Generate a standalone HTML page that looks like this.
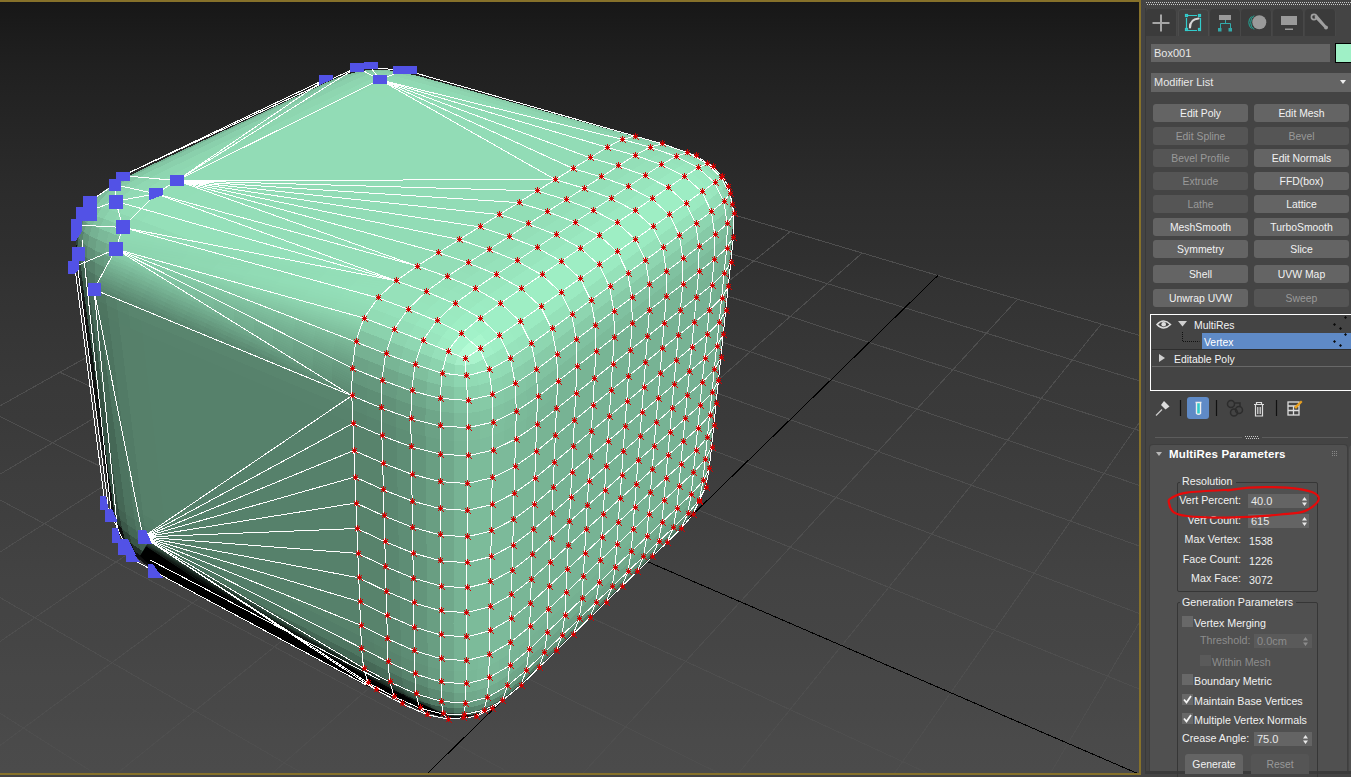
<!DOCTYPE html>
<html><head><meta charset="utf-8"><title>MultiRes</title>
<style>
html,body{margin:0;padding:0;background:#444;overflow:hidden}
body{width:1351px;height:777px;position:relative;font-family:"Liberation Sans",sans-serif;font-size:11px;color:#e6e6e6}
#vp{position:absolute;left:0;top:0;width:1141px;height:775px;background:#86712a;overflow:hidden}
#pn{position:absolute;left:1141px;top:0;width:210px;height:777px;background:#444;overflow:hidden}
#pn *{position:absolute;box-sizing:border-box;white-space:nowrap}
.tab{top:9px;width:31px;height:27px;background:#3b3b3b;border-radius:4px 4px 0 0;border-right:1px solid #484848}
.tab.on{background:#414141;border:1px solid #4c4c4c;border-bottom:0}
.fld{background:#646464;color:#e8e8e8;line-height:18px;padding-left:3px}
.btn{width:95px;height:18px;background:#646464;border-radius:3px;text-align:center;line-height:20.5px;color:#f2f2f2;font-size:10.4px}
.btn.d{background:#555;color:#999}
.lb{color:#f0f0f0;line-height:13px;height:13px;font-size:10.7px}
.lb.r{text-align:right;width:70px;left:30px}
.lb.d{color:#8c8c8c}
.cb{width:11px;height:11px;background:#686868}
.cb.d{background:#5a5a5a}
.sp{background:#646464;height:14px;line-height:14px;color:#e8e8e8;padding-left:3px}
.grp{border:1px solid #363636;border-radius:2px}
.ar{width:0;height:0;border-left:3px solid transparent;border-right:3px solid transparent}

</style></head><body>
<div id="vp"><svg width="1139" height="771" viewBox="0 2 1139 771" style="position:absolute;left:0;top:2px">
<defs><linearGradient id="bg" x1="0" y1="0" x2="0" y2="1"><stop offset="0.000" stop-color="#171717"/><stop offset="0.042" stop-color="#1c1c1c"/><stop offset="0.083" stop-color="#202020"/><stop offset="0.125" stop-color="#232323"/><stop offset="0.167" stop-color="#262626"/><stop offset="0.208" stop-color="#292929"/><stop offset="0.250" stop-color="#2c2c2c"/><stop offset="0.292" stop-color="#2e2e2e"/><stop offset="0.333" stop-color="#303030"/><stop offset="0.375" stop-color="#333333"/><stop offset="0.417" stop-color="#353535"/><stop offset="0.458" stop-color="#373737"/><stop offset="0.500" stop-color="#393939"/><stop offset="0.542" stop-color="#3a3a3a"/><stop offset="0.583" stop-color="#3c3c3c"/><stop offset="0.625" stop-color="#3e3e3e"/><stop offset="0.667" stop-color="#3f3f3f"/><stop offset="0.708" stop-color="#414141"/><stop offset="0.750" stop-color="#434343"/><stop offset="0.792" stop-color="#444444"/><stop offset="0.833" stop-color="#454545"/><stop offset="0.875" stop-color="#474747"/><stop offset="0.917" stop-color="#484848"/><stop offset="0.958" stop-color="#4a4a4a"/><stop offset="1.000" stop-color="#4b4b4b"/></linearGradient><g id="t" fill="#d40000" shape-rendering="crispEdges"><rect x="-1" y="-1" width="3" height="3"/><rect x="-2" y="0" width="5" height="1"/><rect x="0" y="-3" width="1" height="6"/><rect x="-2" y="-2" width="1" height="1"/><rect x="2" y="-2" width="1" height="1"/><rect x="-2" y="2" width="1" height="1"/><rect x="2" y="2" width="1" height="1"/><rect x="3" y="3" width="1" height="1"/></g></defs>
<rect x="0" y="2" width="1139" height="771" fill="url(#bg)"/>
<path d="M476.9 138.4L-459.9 663.8M534 155.4L-398.3 712M593.8 173.2L-332 763.9M656.2 191.8L-260.4 820M721.7 211.2L-182.8 880.8M790.3 231.6L-98.4 946.9M862.2 253L-6.3 1019M1017.5 299.2L205.7 1185M1101.3 324.1L328.5 1281.2M1189.8 350.4L465 1388.1M1283.2 378.2L617.7 1507.6M1382.1 407.7L789.6 1642.2M1487 438.8L984.6 1794.9M1598.3 471.9L1207.7 1969.6M476.9 138.4L1598.3 471.9M435.5 161.7L1585.8 519.8M391.5 186.3L1572.2 572M344.8 212.5L1557.3 629M295.2 240.4L1541 691.5M242.2 270.1L1523 760.4M185.6 301.8L1503.1 836.8M59.9 372.3L1456.1 1017.3M-10.2 411.6L1428 1124.9M-85.8 454L1396 1247.4M-167.7 500L1359.4 1387.9M-256.7 549.9L1316.9 1550.9M-353.7 604.3L1267 1742.1M-459.9 663.8L1207.7 1969.6" stroke="#4e4e4e" stroke-width="1" fill="none" shape-rendering="crispEdges"/>
<path d="M937.9 275.5L94.6 1098M125 335.8L1480.9 921.9" stroke="#000" stroke-width="1" fill="none" shape-rendering="crispEdges"/>
<g shape-rendering="crispEdges">
<path fill="#6da488" d="M85.7 213.1L87.3 213.4L91.2 206.5L87.5 208.5ZM526 669.2L527.6 659.7L518.2 667.8L516.6 677.3Z"/>
<path fill="#7ab797" d="M90.9 214.4L95.8 206.4L91.2 206.5L87.3 213.4ZM137.2 173.7L148.3 168.3L141 169.8L130 175.3Z"/>
<path fill="#7dbc9b" d="M101.6 199L96 199.8L91.2 206.5L95.8 206.4ZM467.4 426.9L467.4 440.9L480.3 439L480.4 425ZM515.9 410.8L504.6 416.7L504.4 430.7L515.7 424.7ZM492.4 449.5L504.1 444.6L504.4 430.7L492.7 435.5ZM732.3 214.1L730.9 203.8L728.7 208.1L730.1 219Z"/>
<path fill="#6ea588" d="M91.5 202.5L87.5 208.5L91.2 206.5L96 199.8ZM732.1 237.4L729.8 242.7L728.7 255.1L731.1 249.7Z"/>
<path fill="#89ceaa" d="M104 218.8L109.7 209.9L101.9 207.6L96.5 216.2ZM358.2 78.3L366.8 74.8L357.3 74L348.7 77.4ZM410 74.3L403.4 74.7L414.7 77.7L421.3 77.3ZM514.6 383.5L525.4 376.8L523.4 363.8L512.7 370.5Z"/>
<path fill="#8cd3ae" d="M116.8 201.7L108.5 199.7L101.9 207.6L109.7 209.9ZM134.4 187.4L144.6 181.1L135 179.6L125.1 185.8ZM661.6 144.8L655.9 145.6L668.9 149.9L674.5 149ZM441.9 372.9L444.1 361.6L431.7 357.4L428.8 369.2ZM728.4 194.3L724.7 185.8L722.4 188.8L726.2 198.1Z"/>
<path fill="#86caa7" d="M101.6 199L95.8 206.4L101.9 207.6L108.5 199.7ZM728.4 194.3L728.7 190.8L725.3 183.4L724.7 185.8ZM698.6 246.9L706.5 240.9L705.3 229.1L697.3 235ZM713.9 235.1L712.7 223.4L705.3 229.1L706.5 240.9Z"/>
<path fill="#82c4a2" d="M90.9 214.4L96.5 216.2L101.9 207.6L95.8 206.4ZM410 74.3L421.3 77.3L427.1 78.4L415.8 75.5Z"/>
<path fill="#8dd4af" d="M134.4 187.4L125.1 185.8L116.2 192.5L125.1 194.3ZM104 218.8L113.3 222.2L119.3 213L109.7 209.9ZM358.2 78.3L368.6 80.1L377.1 76.6L366.8 74.8ZM396 76.4L407.4 79.4L414.7 77.7L403.4 74.7ZM394.4 329.9L389.6 341.5L404.2 347.1L409 335.6Z"/>
<path fill="#87cba7" d="M117 185.6L108.7 192.1L116.2 192.5L125.1 185.8ZM556.2 354.5L554.2 341.6L544.1 349.2L546.2 362.1ZM594.9 325.3L604.2 318.3L602.5 305.7L593.1 312.7ZM613.4 311.3L611.7 298.8L602.5 305.7L604.2 318.3ZM631.4 297.7L629.8 285.3L620.8 292L622.5 304.5ZM613.4 311.3L622.5 304.5L620.8 292L611.7 298.8ZM556.2 354.5L566.1 347.1L564.2 334.2L554.2 341.6ZM575.8 339.7L574 326.9L564.2 334.2L566.1 347.1ZM594.9 325.3L593.1 312.7L583.6 319.7L585.4 332.5ZM575.8 339.7L585.4 332.5L583.6 319.7L574 326.9ZM665.9 271.6L674.3 265.3L672.9 253.2L664.5 259.5ZM682.5 259.1L681.1 247.1L672.9 253.2L674.3 265.3ZM698.6 246.9L697.3 235L689.3 241L690.6 253ZM682.5 259.1L690.6 253L689.3 241L681.1 247.1ZM631.4 297.7L640.2 291L638.7 278.7L629.8 285.3ZM648.9 284.5L647.4 272.2L638.7 278.7L640.2 291ZM665.9 271.6L664.5 259.5L656 265.8L657.5 278ZM648.9 284.5L657.5 278L656 265.8L647.4 272.2Z"/>
<path fill="#87cba8" d="M101.6 199L108.5 199.7L116.2 192.5L108.7 192.1ZM535.9 369.6L546.2 362.1L544.1 349.2L533.9 356.6ZM686.3 153.7L690.7 154.5L679.1 149.8L674.5 149Z"/>
<path fill="#8dd5b0" d="M116.8 201.7L125.1 194.3L116.2 192.5L108.5 199.7ZM466.1 375.6L454.3 375.2L454 387L466.7 387.2ZM710.2 212.3L702.7 217.9L705.3 229.1L712.7 223.4Z"/>
<path fill="#6ba185" d="M104.8 190.2L97.2 196.4L102.4 193.3L110.2 187ZM465.1 701.3L465.4 692.6L453.5 692.7L453.5 701.4ZM710.6 447.1L708.3 453.2L707.2 464L709.5 457.8ZM702 480.8L700.4 490.6L704.2 484.2L705.9 474.4ZM687 513.1L689.1 504L682.3 510.9L680.1 520ZM439.8 425.4L425.4 422.4L425.5 436.4L439.8 439.4Z"/>
<path fill="#6da487" d="M91.5 202.5L96 199.8L102.4 193.3L97.2 196.4ZM382.2 380.2L383.7 366.8L368.8 361L367.4 374.4Z"/>
<path fill="#7dbc9c" d="M101.6 199L108.7 192.1L102.4 193.3L96 199.8ZM492.4 449.5L492.7 435.5L480.3 439L480.1 453ZM537.2 396.8L536.9 383.1L526.4 390.3L526.7 404.1Z"/>
<path fill="#7cbb9b" d="M117 185.6L110.2 187L102.4 193.3L108.7 192.1ZM489 653.8L477.7 657.6L477.5 669.3L488.8 665.5ZM537.2 396.8L547.4 389.2L547.2 375.5L536.9 383.1Z"/>
<path fill="#91dbb5" d="M148 235.4L154.2 225.9L141.9 221.3L135.7 230.7ZM177.4 181.3L166 177.8L155.1 183.8L166.5 187.3ZM606.9 147.6L620.7 151.6L628.5 147.2L614.7 143.3ZM675.1 157.1L681.1 154.7L668.9 149.9L662.6 152.3Z"/>
<path fill="#95e0b9" d="M161.7 217.3L149.4 212.7L141.9 221.3L154.2 225.9ZM180.2 202.3L167.9 197.9L156 193.7L146.3 200.7L137.6 208.4L149.4 212.7L161.7 217.3L170.5 209.5ZM186.7 226.6L174.2 222L166.6 230.6L179.2 235.4ZM161.7 217.3L154.2 225.9L166.6 230.6L174.2 222ZM212.3 236.2L199.5 231.4L191.9 240.2L204.7 245.1ZM186.7 226.6L179.2 235.4L191.9 240.2L199.5 231.4ZM265.2 255.9L251.8 250.9L244.2 260L257.6 265.1ZM238.5 246L230.9 254.9L244.2 260L251.8 250.9ZM238.5 246L225.3 241L217.7 250L230.9 254.9ZM212.3 236.2L204.7 245.1L217.7 250L225.3 241ZM292.6 266.1L278.8 261L271.2 270.2L285 275.4ZM265.2 255.9L257.6 265.1L271.2 270.2L278.8 261ZM320.5 276.6L306.5 271.3L298.9 280.7L312.9 286ZM292.6 266.1L285 275.4L298.9 280.7L306.5 271.3ZM378.5 298.2L363.8 292.7L356.2 302.3L370.9 307.9ZM349.2 287.3L341.6 296.8L356.2 302.3L363.8 292.7ZM349.2 287.3L334.8 281.9L327.2 291.4L341.6 296.8ZM320.5 276.6L312.9 286L327.2 291.4L334.8 281.9ZM378.5 298.2L370.9 307.9L385.9 313.6L393.4 303.8ZM446.7 276.9L461.1 282.7L471.7 275.6L457.3 269.8ZM660.7 165.2L668.2 160.7L655.5 155.8L647.9 160.2ZM705.9 164.8L701.8 166.1L710.2 172.8L713.5 171.2ZM694.8 223.7L702.7 217.9L698.7 207.5L690.7 213.3ZM710.2 212.3L706.3 201.9L698.7 207.5L702.7 217.9Z"/>
<path fill="#94dfb8" d="M137.6 208.4L130.1 216.9L141.9 221.3L149.4 212.7ZM396.6 281L411.5 286.5L426.3 292L436.3 284.2L446.7 276.9L431.9 271.4L417.1 266.1L406.7 273.4ZM467.8 263L457.3 269.8L471.7 275.6L482.2 268.7ZM488.5 249.7L478.3 256.3L492.5 261.9L502.8 255.2ZM467.8 263L482.2 268.7L492.5 261.9L478.3 256.3ZM508.6 236.7L498.6 243.1L512.8 248.6L522.8 242.1ZM488.5 249.7L502.8 255.2L512.8 248.6L498.6 243.1ZM528.1 224.1L518.5 230.4L532.5 235.7L542.2 229.3ZM508.6 236.7L522.8 242.1L532.5 235.7L518.5 230.4ZM547.1 211.9L537.7 218L551.7 223.1L561.1 217ZM528.1 224.1L542.2 229.3L551.7 223.1L537.7 218ZM565.6 200L556.4 205.9L570.3 210.9L579.4 204.9ZM547.1 211.9L561.1 217L570.3 210.9L556.4 205.9ZM583.6 188.4L574.6 194.1L588.4 199L597.3 193.2ZM565.6 200L579.4 204.9L588.4 199L574.6 194.1ZM601 177.1L592.4 182.7L606.1 187.5L614.7 181.8ZM583.6 188.4L597.3 193.2L606.1 187.5L592.4 182.7ZM618.1 166.1L609.6 171.6L623.2 176.2L631.6 170.7ZM601 177.1L614.7 181.8L623.2 176.2L609.6 171.6ZM634.5 155.7L626.4 160.8L639.9 165.3L647.9 160.2ZM618.1 166.1L631.6 170.7L639.9 165.3L626.4 160.8ZM675.1 157.1L686.5 162.6L692.1 160.1L681.1 154.7ZM710.2 212.3L716.9 207L712.9 196.9L706.3 201.9Z"/>
<path fill="#91dab4" d="M124 226.2L135.7 230.7L141.9 221.3L130.1 216.9ZM134.4 187.4L125.1 194.3L135.2 197.1L144.8 190.2ZM116.8 201.7L126.6 204.7L135.2 197.1L125.1 194.3ZM177.4 181.3L188.6 175.6L177.2 172.2L166 177.8ZM466.1 375.6L466.7 387.2L478.8 385.3L477.3 373.6ZM509.6 358.2L498.9 364.4L501.7 376.6L512.7 370.5ZM649.4 147.9L635.7 143.8L628.5 147.2L642.2 151.4Z"/>
<path fill="#93deb7" d="M137.6 208.4L146.3 200.7L135.2 197.1L126.6 204.7ZM180.2 202.3L190.7 195.8L201.6 189.6L189.3 185.3L177.4 181.3L166.5 187.3L156 193.7L167.9 197.9ZM438.5 252.6L427.8 259.3L417.1 266.1L431.9 271.4L446.7 276.9L457.3 269.8L467.8 263L453.2 257.7ZM634.5 155.7L647.9 160.2L655.5 155.8L642.2 151.4Z"/>
<path fill="#93ddb7" d="M156 193.7L144.8 190.2L135.2 197.1L146.3 200.7Z"/>
<path fill="#8fd8b2" d="M124 226.2L130.1 216.9L119.3 213L113.3 222.2ZM396 76.4L388 79.1L399.4 82.2L407.4 79.4ZM379.5 82.6L388 79.1L377.1 76.6L368.6 80.1ZM719.7 178.2L721 176.9L715.7 170.8L713.5 171.2Z"/>
<path fill="#93ddb6" d="M137.6 208.4L126.6 204.7L119.3 213L130.1 216.9ZM705.9 164.8L696.8 159L692.1 160.1L701.8 166.1Z"/>
<path fill="#90d9b3" d="M116.8 201.7L109.7 209.9L119.3 213L126.6 204.7ZM199.8 170.1L188.5 166.8L177.2 172.2L188.6 175.6ZM221.9 159.3L232.7 154.1L221.4 150.9L210.6 156.1ZM243.4 148.9L232.1 145.7L221.4 150.9L232.7 154.1ZM199.8 170.1L210.9 164.7L199.6 161.4L188.5 166.8ZM221.9 159.3L210.6 156.1L199.6 161.4L210.9 164.7ZM264.4 138.6L274.6 133.6L263.4 130.6L253.1 135.6ZM284.8 128.7L273.6 125.7L263.4 130.6L274.6 133.6ZM243.4 148.9L253.9 143.7L242.7 140.6L232.1 145.7ZM264.4 138.6L253.1 135.6L242.7 140.6L253.9 143.7ZM304.7 119L314.5 114.2L303.3 111.4L293.5 116.1ZM324.1 109.5L313 106.7L303.3 111.4L314.5 114.2ZM284.8 128.7L294.8 123.8L283.6 120.9L273.6 125.7ZM304.7 119L293.5 116.1L283.6 120.9L294.8 123.8ZM343.1 100.2L352.4 95.7L341.4 93L332 97.5ZM361.6 91.2L350.6 88.6L341.4 93L352.4 95.7ZM324.1 109.5L333.7 104.8L322.6 102.1L313 106.7ZM343.1 100.2L332 97.5L322.6 102.1L333.7 104.8ZM419.1 82.7L407.4 79.4L399.4 82.2L411.2 85.5ZM361.6 91.2L370.7 86.8L359.7 84.2L350.6 88.6ZM379.5 82.6L368.6 80.1L359.7 84.2L370.7 86.8ZM622 139.9L614.7 143.3L628.5 147.2L635.7 143.8ZM686.3 153.7L681.1 154.7L692.1 160.1L696.8 159ZM441.9 372.9L454.3 375.2L455.1 364.7L444.1 361.6ZM722.3 202.2L726.2 198.1L722.4 188.8L718.4 192.4Z"/>
<path fill="#92dcb6" d="M223.9 178.2L211.7 174L199.8 170.1L188.6 175.6L177.4 181.3L189.3 185.3L201.6 189.6L212.7 183.8ZM156 193.7L166.5 187.3L155.1 183.8L144.8 190.2ZM223.9 178.2L235 172.7L245.9 167.3L233.7 163.1L221.9 159.3L210.9 164.7L199.8 170.1L211.7 174ZM267.3 156.6L255.2 152.6L243.4 148.9L232.7 154.1L221.9 159.3L233.7 163.1L245.9 167.3L256.7 161.9ZM308.5 136L296.5 132.2L284.8 128.7L274.6 133.6L264.4 138.6L276.1 142.2L288.2 146.1L298.4 141ZM267.3 156.6L277.8 151.3L288.2 146.1L276.1 142.2L264.4 138.6L253.9 143.7L243.4 148.9L255.2 152.6ZM308.5 136L318.5 131L328.3 126.1L316.4 122.4L304.7 119L294.8 123.8L284.8 128.7L296.5 132.2ZM347.6 116.4L335.7 112.8L324.1 109.5L314.5 114.2L304.7 119L316.4 122.4L328.3 126.1L338 121.2ZM384.9 97.8L373.1 94.4L361.6 91.2L352.4 95.7L343.1 100.2L354.6 103.5L366.5 107L375.8 102.4ZM347.6 116.4L357.1 111.7L366.5 107L354.6 103.5L343.1 100.2L333.7 104.8L324.1 109.5L335.7 112.8ZM488.2 369.7L477.3 373.6L478.8 385.3L490.5 381.6ZM223.9 178.2L236.3 182.5L248.8 186.8L259.8 181.2L270.6 175.6L258.2 171.4L245.9 167.3L235 172.7ZM274.1 195.6L285.1 189.9L295.9 184.2L283.2 179.9L270.6 175.6L259.8 181.2L248.8 186.8L261.4 191.2ZM317.1 173L304.4 168.9L291.9 164.7L281.4 170.1L270.6 175.6L283.2 179.9L295.9 184.2L306.6 178.6ZM267.3 156.6L256.7 161.9L245.9 167.3L258.2 171.4L270.6 175.6L281.4 170.1L291.9 164.7L279.6 160.6ZM326.5 213.8L337.3 207.8L348 201.8L334.8 197.4L321.7 192.9L310.9 198.7L300 204.6L313.2 209.2ZM368.9 190.2L355.8 185.9L342.7 181.5L332.3 187.2L321.7 192.9L334.8 197.4L348 201.8L358.6 196ZM317.1 173L306.6 178.6L295.9 184.2L308.7 188.5L321.7 192.9L332.3 187.2L342.7 181.5L329.8 177.3ZM274.1 195.6L287 200.1L300 204.6L310.9 198.7L321.7 192.9L308.7 188.5L295.9 184.2L285.1 189.9ZM409.2 167.9L396.1 163.8L383.2 159.7L373.3 165L363.2 170.5L376.2 174.7L389.3 178.9L399.3 173.4ZM357.8 151.6L347.8 156.9L337.7 162.2L350.4 166.3L363.2 170.5L373.3 165L383.2 159.7L370.4 155.6ZM317.1 173L329.8 177.3L342.7 181.5L353.1 176L363.2 170.5L350.4 166.3L337.7 162.2L327.5 167.6ZM368.9 190.2L379.2 184.5L389.3 178.9L376.2 174.7L363.2 170.5L353.1 176L342.7 181.5L355.8 185.9ZM308.5 136L298.4 141L288.2 146.1L300.4 150.1L312.7 154.1L322.9 148.9L332.9 143.7L320.6 139.8ZM267.3 156.6L279.6 160.6L291.9 164.7L302.4 159.4L312.7 154.1L300.4 150.1L288.2 146.1L277.8 151.3ZM317.1 173L327.5 167.6L337.7 162.2L325.1 158.1L312.7 154.1L302.4 159.4L291.9 164.7L304.4 168.9ZM357.8 151.6L345.3 147.7L332.9 143.7L322.9 148.9L312.7 154.1L325.1 158.1L337.7 162.2L347.8 156.9ZM308.5 136L320.6 139.8L332.9 143.7L342.8 138.6L352.6 133.6L340.4 129.8L328.3 126.1L318.5 131ZM357.8 151.6L367.7 146.4L377.4 141.3L364.9 137.5L352.6 133.6L342.8 138.6L332.9 143.7L345.3 147.7ZM396.5 131.3L384.1 127.5L371.8 123.8L362.3 128.7L352.6 133.6L364.9 137.5L377.4 141.3L387 136.3ZM347.6 116.4L338 121.2L328.3 126.1L340.4 129.8L352.6 133.6L362.3 128.7L371.8 123.8L359.7 120.1ZM409.2 167.9L418.9 162.5L428.5 157.2L415.5 153.2L402.7 149.2L393 154.4L383.2 159.7L396.1 163.8ZM447.3 146.7L434.4 142.8L421.6 138.9L412.2 144L402.7 149.2L415.5 153.2L428.5 157.2L437.9 151.9ZM396.5 131.3L387 136.3L377.4 141.3L390 145.2L402.7 149.2L412.2 144L421.6 138.9L409 135.1ZM357.8 151.6L370.4 155.6L383.2 159.7L393 154.4L402.7 149.2L390 145.2L377.4 141.3L367.7 146.4ZM483.5 126.6L470.8 122.9L458.1 119.2L449.2 124L440.1 128.9L452.8 132.7L465.6 136.5L474.6 131.6ZM433.3 111.9L424.2 116.7L415.1 121.5L427.6 125.2L440.1 128.9L449.2 124L458.1 119.2L445.6 115.6ZM396.5 131.3L409 135.1L421.6 138.9L430.9 133.9L440.1 128.9L427.6 125.2L415.1 121.5L405.9 126.4ZM447.3 146.7L456.5 141.6L465.6 136.5L452.8 132.7L440.1 128.9L430.9 133.9L421.6 138.9L434.4 142.8ZM384.9 97.8L375.8 102.4L366.5 107L378.5 110.6L390.6 114.2L399.8 109.5L408.9 104.8L396.8 101.3ZM347.6 116.4L359.7 120.1L371.8 123.8L381.3 119L390.6 114.2L378.5 110.6L366.5 107L357.1 111.7ZM396.5 131.3L405.9 126.4L415.1 121.5L402.8 117.8L390.6 114.2L381.3 119L371.8 123.8L384.1 127.5ZM433.3 111.9L421 108.4L408.9 104.8L399.8 109.5L390.6 114.2L402.8 117.8L415.1 121.5L424.2 116.7ZM384.9 97.8L396.8 101.3L408.9 104.8L417.8 100.2L426.6 95.9L414.6 92.5L402.7 89.1L393.9 93.3ZM433.3 111.9L442.2 107.3L450.8 102.9L438.6 99.4L426.6 95.9L417.8 100.2L408.9 104.8L421 108.4ZM483.5 126.6L492.3 121.8L500.8 117.2L488.2 113.6L475.6 110L467 114.4L458.1 119.2L470.8 122.9ZM433.3 111.9L445.6 115.6L458.1 119.2L467 114.4L475.6 110L463.2 106.4L450.8 102.9L442.2 107.3ZM326.5 213.8L340 218.5L353.6 223.2L364.3 217L374.9 211L361.4 206.4L348 201.8L337.3 207.8ZM381.2 232.8L391.9 226.5L402.4 220.3L388.6 215.6L374.9 211L364.3 217L353.6 223.2L367.3 227.9ZM423.1 208.2L409.3 203.6L395.7 199.1L385.4 205L374.9 211L388.6 215.6L402.4 220.3L412.8 214.2ZM368.9 190.2L358.6 196L348 201.8L361.4 206.4L374.9 211L385.4 205L395.7 199.1L382.3 194.6ZM438.5 252.6L449 246L459.3 239.6L444.9 234.7L430.6 229.8L420.1 236.1L409.5 242.6L423.9 247.5ZM479.6 226.9L465.3 222.1L451 217.4L440.9 223.6L430.6 229.8L444.9 234.7L459.3 239.6L469.6 233.2ZM423.1 208.2L412.8 214.2L402.4 220.3L416.4 225L430.6 229.8L440.9 223.6L451 217.4L437 212.8ZM381.2 232.8L395.3 237.6L409.5 242.6L420.1 236.1L430.6 229.8L416.4 225L402.4 220.3L391.9 226.5ZM518.5 202.6L504.3 198.1L490.3 193.6L480.7 199.5L470.9 205.4L485.1 209.9L499.3 214.6L509 208.5ZM462.7 184.9L453 190.6L443.2 196.4L457 200.8L470.9 205.4L480.7 199.5L490.3 193.6L476.4 189.2ZM423.1 208.2L437 212.8L451 217.4L461.1 211.3L470.9 205.4L457 200.8L443.2 196.4L433.2 202.2ZM479.6 226.9L489.6 220.7L499.3 214.6L485.1 209.9L470.9 205.4L461.1 211.3L451 217.4L465.3 222.1ZM409.2 167.9L399.3 173.4L389.3 178.9L402.6 183.2L416 187.5L425.9 181.9L435.6 176.3L422.3 172.1ZM368.9 190.2L382.3 194.6L395.7 199.1L405.9 193.3L416 187.5L402.6 183.2L389.3 178.9L379.2 184.5ZM423.1 208.2L433.2 202.2L443.2 196.4L429.5 191.9L416 187.5L405.9 193.3L395.7 199.1L409.3 203.6ZM462.7 184.9L449.1 180.6L435.6 176.3L425.9 181.9L416 187.5L429.5 191.9L443.2 196.4L453 190.6ZM409.2 167.9L422.3 172.1L435.6 176.3L445.3 170.8L454.8 165.4L441.6 161.2L428.5 157.2L418.9 162.5ZM462.7 184.9L472.3 179.3L481.7 173.7L468.2 169.5L454.8 165.4L445.3 170.8L435.6 176.3L449.1 180.6ZM500.2 162.8L486.8 158.7L473.5 154.7L464.2 160L454.8 165.4L468.2 169.5L481.7 173.7L491 168.2ZM447.3 146.7L437.9 151.9L428.5 157.2L441.6 161.2L454.8 165.4L464.2 160L473.5 154.7L460.3 150.7ZM518.5 202.6L527.9 196.7L537.2 190.9L523.1 186.6L509.1 182.2L499.8 187.9L490.3 193.6L504.3 198.1ZM555.3 179.6L541.3 175.3L527.5 171.1L518.4 176.6L509.1 182.2L523.1 186.6L537.2 190.9L546.3 185.2ZM500.2 162.8L491 168.2L481.7 173.7L495.3 177.9L509.1 182.2L518.4 176.6L527.5 171.1L513.8 166.9ZM462.7 184.9L476.4 189.2L490.3 193.6L499.8 187.9L509.1 182.2L495.3 177.9L481.7 173.7L472.3 179.3ZM590.2 157.8L576.4 153.8L562.8 149.8L554.1 155L545.4 160.3L559.1 164.4L573 168.5L581.7 163.1ZM535.8 141.9L527.1 147L518.2 152.2L531.7 156.2L545.4 160.3L554.1 155L562.8 149.8L549.2 145.8ZM500.2 162.8L513.8 166.9L527.5 171.1L536.5 165.7L545.4 160.3L531.7 156.2L518.2 152.2L509.3 157.5ZM555.3 179.6L564.2 174L573 168.5L559.1 164.4L545.4 160.3L536.5 165.7L527.5 171.1L541.3 175.3ZM483.5 126.6L474.6 131.6L465.6 136.5L478.6 140.4L491.7 144.3L500.6 139.2L509.4 134.2L496.4 130.4ZM447.3 146.7L460.3 150.7L473.5 154.7L482.6 149.5L491.7 144.3L478.6 140.4L465.6 136.5L456.5 141.6ZM500.2 162.8L509.3 157.5L518.2 152.2L504.9 148.2L491.7 144.3L482.6 149.5L473.5 154.7L486.8 158.7ZM535.8 141.9L522.5 138L509.4 134.2L500.6 139.2L491.7 144.3L504.9 148.2L518.2 152.2L527.1 147ZM483.5 126.6L496.4 130.4L509.4 134.2L518.1 129.2L526.6 124.6L513.6 120.9L500.8 117.2L492.3 121.8ZM535.8 141.9L544.4 136.8L552.8 132.1L539.6 128.3L526.6 124.6L518.1 129.2L509.4 134.2L522.5 138ZM590.2 157.8L598.7 152.5L606.9 147.6L593.2 143.7L579.6 139.8L571.3 144.6L562.8 149.8L576.4 153.8ZM535.8 141.9L549.2 145.8L562.8 149.8L571.3 144.6L579.6 139.8L566.1 135.9L552.8 132.1L544.4 136.8ZM634.5 155.7L642.2 151.4L628.5 147.2L620.7 151.6ZM719.7 178.2L717 180.4L722.4 188.8L724.7 185.8Z"/>
<path fill="#8ed6b1" d="M177.9 164.3L166.6 169.7L177.2 172.2L188.5 166.8ZM155.4 175.3L166 177.8L177.2 172.2L166.6 169.7ZM530.5 344.2L533.9 356.6L544.1 349.2L540.8 336.8Z"/>
<path fill="#90d8b3" d="M134.4 187.4L144.8 190.2L155.1 183.8L144.6 181.1ZM509.6 358.2L512.7 370.5L523.4 363.8L520.1 351.4ZM649.4 147.9L662.6 152.3L668.9 149.9L655.9 145.6Z"/>
<path fill="#8fd7b2" d="M155.4 175.3L144.6 181.1L155.1 183.8L166 177.8ZM705.9 164.8L713.5 171.2L715.7 170.8L709.1 165.1ZM422.9 341.1L409 335.6L404.2 347.1L418.3 352.5Z"/>
<path fill="#79b697" d="M159.6 162.9L152.3 164.5L141 169.8L148.3 168.3ZM510.1 642L509.8 653.6L519.7 646.2L520 634.6ZM509.3 664.8L509.8 653.6L499.5 660.1L499.1 671.3ZM159.6 162.9L170.7 157.7L163.4 159.3L152.3 164.5ZM181.7 152.5L174.4 154.1L163.4 159.3L170.7 157.7ZM181.7 152.5L192.6 147.3L185.3 149L174.4 154.1ZM203.3 142.3L196 143.9L185.3 149L192.6 147.3ZM224.4 132.3L234.7 127.5L227.3 129.2L217 134ZM244.9 122.6L237.5 124.4L227.3 129.2L234.7 127.5ZM203.3 142.3L213.9 137.3L206.6 139L196 143.9ZM224.4 132.3L217 134L206.6 139L213.9 137.3ZM244.9 122.6L255 117.9L247.6 119.6L237.5 124.4ZM264.9 113.2L257.6 114.9L247.6 119.6L255 117.9ZM264.9 113.2L274.7 108.5L267.4 110.3L257.6 114.9ZM284.5 104L277.1 105.7L267.4 110.3L274.7 108.5ZM303.5 94.9L312.9 90.5L305.6 92.3L296.2 96.7ZM322.2 86.1L314.8 87.9L305.6 92.3L312.9 90.5ZM284.5 104L294 99.4L286.7 101.2L277.1 105.7ZM303.5 94.9L296.2 96.7L286.7 101.2L294 99.4Z"/>
<path fill="#6a9f83" d="M104.8 190.2L110.2 187L119.6 181L113.9 184.4ZM411.7 390.7L397 385.7L396.3 399.4L411 404.4Z"/>
<path fill="#7bba99" d="M117 185.6L126.7 179.5L119.6 181L110.2 187ZM515.4 438.6L515.7 424.7L504.4 430.7L504.1 444.6ZM515.9 410.8L515.7 424.7L526.6 418L526.7 404.1ZM713.7 259.8L714.2 247.3L706.8 253.2L706.3 265.8Z"/>
<path fill="#7ab898" d="M137.2 173.7L130 175.3L119.6 181L126.7 179.5ZM515.4 438.6L526.1 431.8L526.6 418L515.7 424.7ZM537.2 396.8L526.7 404.1L526.6 418L537 410.6ZM440.2 398L439.9 411.5L453.9 413.1L453.9 399.8ZM713.7 259.8L720.3 254L720.8 241.5L714.2 247.3Z"/>
<path fill="#8bd2ad" d="M155.4 175.3L145.7 173.8L135 179.6L144.6 181.1ZM491.8 394.4L503.4 389.5L501.7 376.6L490.5 381.6ZM394.4 329.9L379.5 324.2L374.7 335.8L389.6 341.5Z"/>
<path fill="#85c8a5" d="M137.2 173.7L126.7 179.5L135 179.6L145.7 173.8ZM389 70.3L382.3 70.6L392.5 72.3L399.2 71.9ZM374.8 72.2L382.3 70.6L372.9 70L365.4 71.4ZM467.1 399.8L467.4 413.2L480.2 411.3L479.7 397.9ZM661.6 144.8L674.5 149L679.1 149.8L666.5 145.6ZM721 176.6L721 176.9L725.3 183.4L724 180.6Z"/>
<path fill="#86c9a6" d="M117 185.6L125.1 185.8L135 179.6L126.7 179.5Z"/>
<path fill="#8ad0ac" d="M177.9 164.3L168.2 162.9L156.9 168.3L166.6 169.7ZM177.9 164.3L189 159L179.3 157.6L168.2 162.9ZM200 153.7L190.3 152.4L179.3 157.6L189 159ZM221.6 143.4L211.9 142.2L201.2 147.3L210.9 148.5ZM200 153.7L210.9 148.5L201.2 147.3L190.3 152.4ZM221.6 143.4L232.1 138.4L222.5 137.2L211.9 142.2ZM242.6 133.4L232.9 132.2L222.5 137.2L232.1 138.4ZM263.1 123.6L253.5 122.5L243.3 127.3L252.9 128.4ZM242.6 133.4L252.9 128.4L243.3 127.3L232.9 132.2ZM263.1 123.6L273.1 118.7L263.5 117.7L253.5 122.5ZM283.1 114L273.5 113L263.5 117.7L273.1 118.7ZM302.6 104.7L293 103.7L283.3 108.3L292.9 109.3ZM283.1 114L292.9 109.3L283.3 108.3L273.5 113ZM302.6 104.7L312.2 100.1L302.6 99.1L293 103.7ZM321.6 95.6L312.1 94.6L302.6 99.1L312.2 100.1ZM340.2 86.7L330.7 85.8L321.4 90.2L331 91.1ZM321.6 95.6L331 91.1L321.4 90.2L312.1 94.6ZM340.2 86.7L349.3 82.3L339.8 81.5L330.7 85.8ZM148 235.4L135.7 230.7L131.3 241.1L143.6 245.9ZM467.1 399.8L479.7 397.9L478.8 385.3L466.7 387.2Z"/>
<path fill="#84c7a4" d="M159.6 162.9L148.3 168.3L156.9 168.3L168.2 162.9ZM137.2 173.7L145.7 173.8L156.9 168.3L148.3 168.3ZM514.6 383.5L503.4 389.5L504.3 402.9L515.6 397Z"/>
<path fill="#8ad1ac" d="M155.4 175.3L166.6 169.7L156.9 168.3L145.7 173.8Z"/>
<path fill="#0f0f0f" d="M138.2 557.7L131.3 551.7L135.7 556.2L142.6 562.3ZM131.6 543.6L124.4 537.8L119 531.8L122.2 539.5L126 545.7L131.3 551.7L138.2 557.7L134.6 551.4ZM119 531.8L115.5 525.9L118.8 533.6L122.2 539.5ZM177.8 581L166.8 575.2L171.1 579.8L182 585.6ZM156.3 569.4L160.6 574L171.1 579.8L166.8 575.2ZM156.3 569.4L166.8 575.2L163.4 568.8L152.9 563.1ZM177.8 581L174.4 574.6L163.4 568.8L166.8 575.2ZM138.2 557.7L146.7 563.6L143.1 557.3L134.6 551.4ZM156.3 569.4L152.9 563.1L143.1 557.3L146.7 563.6ZM156.3 569.4L146.7 563.6L151 568.2L160.6 574ZM138.2 557.7L142.6 562.3L151 568.2L146.7 563.6ZM106.5 479.8L108 490.6L109.6 501.1L110.9 507.2L114.4 513.1L112.8 502.6L111.3 491.6L107.7 485.8ZM119 531.8L116.4 522.9L112.9 517L115.5 525.9ZM114.4 513.1L110.9 507.2L112.9 517L116.4 522.9ZM119 531.8L124.4 537.8L122 528.8L116.4 522.9ZM462.6 716.9L467.8 716.7L471.6 714.8L463.3 715.8ZM475 715L479.9 712.6L471.6 714.8L467.8 716.7ZM475 715L483 711.7L488.5 709L479.9 712.6ZM106.5 479.8L107.7 485.8L106.2 474.8L104.9 468.8ZM103.4 457.8L104.9 468.8L106.2 474.8L104.6 463.7ZM100.3 435.4L101.9 446.6L103.1 452.5L101.5 441.2ZM103.4 457.8L104.6 463.7L103.1 452.5L101.9 446.6ZM93.9 389.3L95.5 401L96.7 406.8L95.1 395ZM97.1 412.6L98.3 418.3L96.7 406.8L95.5 401ZM100.3 435.4L101.5 441.2L99.9 429.8L98.7 424ZM97.1 412.6L98.7 424L99.9 429.8L98.3 418.3ZM93.9 389.3L95.1 395L93.5 383.2L92.3 377.6ZM90.6 365.7L92.3 377.6L93.5 383.2L91.8 371.3ZM87.3 341.6L89 353.7L90.2 359.3L88.5 347.1ZM90.6 365.7L91.8 371.3L90.2 359.3L89 353.7ZM80.4 292L82.2 304.6L83.3 310L81.6 297.4ZM83.9 317L85.1 322.5L83.3 310L82.2 304.6ZM87.3 341.6L88.5 347.1L86.8 334.9L85.6 329.4ZM83.9 317L85.6 329.4L86.8 334.9L85.1 322.5ZM80.4 292L81.6 297.4L79.8 284.7L78.6 279.4ZM77.2 266.8L78.6 279.4L79.8 284.7L78.3 272.1ZM76.2 243.6L76.3 254.8L77.4 259.9L77.3 248.4ZM77.2 266.8L78.3 272.1L77.4 259.9L76.3 254.8ZM200 592.8L188.8 586.8L193 591.5L204.1 597.4ZM177.8 581L182 585.6L193 591.5L188.8 586.8ZM222.7 604.7L211.3 598.7L215.4 603.3L226.7 609.3ZM200 592.8L204.1 597.4L215.4 603.3L211.3 598.7ZM200 592.8L211.3 598.7L208 592.3L196.7 586.4ZM222.7 604.7L219.4 598.4L208 592.3L211.3 598.7ZM177.8 581L188.8 586.8L185.5 580.5L174.4 574.6ZM200 592.8L196.7 586.4L185.5 580.5L188.8 586.8ZM269.3 629.4L257.5 623.2L261.4 627.7L273.2 634ZM245.8 617L249.8 621.5L261.4 627.7L257.5 623.2ZM245.8 617L257.5 623.2L254.4 616.8L242.6 610.6ZM269.3 629.4L266.3 623.1L254.4 616.8L257.5 623.2ZM222.7 604.7L234.1 610.8L230.9 604.4L219.4 598.4ZM245.8 617L242.6 610.6L230.9 604.4L234.1 610.8ZM245.8 617L234.1 610.8L238.2 615.4L249.8 621.5ZM222.7 604.7L226.7 609.3L238.2 615.4L234.1 610.8ZM293.4 642.2L281.3 635.8L285.2 640.3L297.2 646.7ZM269.3 629.4L273.2 634L285.2 640.3L281.3 635.8ZM317.9 655.1L305.6 648.6L309.4 653.1L321.6 659.7ZM293.4 642.2L297.2 646.7L309.4 653.1L305.6 648.6ZM293.4 642.2L305.6 648.6L302.6 642.2L290.4 635.8ZM317.9 655.1L315 648.8L302.6 642.2L305.6 648.6ZM269.3 629.4L281.3 635.8L278.3 629.4L266.3 623.1ZM293.4 642.2L290.4 635.8L278.3 629.4L281.3 635.8ZM368.5 681.9L355.6 675.1L359.2 679.6L372 686.4ZM342.9 668.4L346.6 672.9L359.2 679.6L355.6 675.1ZM342.9 668.4L355.6 675.1L352.9 668.7L340.1 662ZM368.5 681.9L365.8 675.5L352.9 668.7L355.6 675.1ZM317.9 655.1L330.3 661.7L327.5 655.4L315 648.8ZM342.9 668.4L340.1 662L327.5 655.4L330.3 661.7ZM342.9 668.4L330.3 661.7L334 666.2L346.6 672.9ZM317.9 655.1L321.6 659.7L334 666.2L330.3 661.7ZM462.6 716.9L456.7 717.7L461.5 717.6L467.8 716.7ZM394.4 695.4L381.5 688.8L385 693.2L397.8 699.8ZM368.5 681.9L372 686.4L385 693.2L381.5 688.8ZM426.8 712.5L422.7 710.5L419.7 706.4L407.2 701.4L394.4 695.4L397.8 699.8L402.3 702L414.8 707.8ZM394.4 695.4L407.2 701.4L404.9 695.1L391.9 689.1ZM368.5 681.9L381.5 688.8L378.8 682.4L365.8 675.5ZM394.4 695.4L391.9 689.1L378.8 682.4L381.5 688.8ZM462.6 716.9L463.3 715.8L454.4 716.3L456.7 717.7ZM448.1 717.4L456.7 717.7L454.4 716.3L444.9 715.8ZM426.8 712.5L438 715.7L448.1 717.4L444.9 715.8L443 712.3L431.6 710L419.7 706.4L422.7 710.5Z"/>
<path fill="#334c3f" d="M171.7 566.8L160.6 561L163.4 568.8L174.4 574.6Z"/>
<path fill="#31493d" d="M150.1 555.2L152.9 563.1L163.4 568.8L160.6 561Z"/>
<path fill="#212f28" d="M131.6 543.6L134.6 551.4L143.1 557.3L140.3 549.4ZM419.7 706.4L417.6 700.3L404.9 695.1L407.2 701.4Z"/>
<path fill="#2c4136" d="M150.1 555.2L140.3 549.4L143.1 557.3L152.9 563.1ZM520 684.3L515.4 689.4L524.3 681L529.1 675.8Z"/>
<path fill="#55806a" d="M165.1 525.8L153.9 520.1L155.2 531.2L166.4 536.9ZM119.1 323.2L130.6 328.3L129 315.3L117.5 310.2Z"/>
<path fill="#547e68" d="M143.1 514.5L144.5 525.5L155.2 531.2L153.9 520.1ZM501.7 699.1L510.9 692.2L514.3 685.5L504.9 692.6ZM361.6 647.8L374.8 654.6L374.3 643.5L361 636.7Z"/>
<path fill="#527b66" d="M146 536.2L156.7 541.9L155.2 531.2L144.5 525.5ZM520 684.3L523.5 677.5L514.3 685.5L510.9 692.2ZM140.3 492.1L138.9 480.8L128.8 475.2L130.3 486.5ZM137.5 469.3L127.3 463.8L128.8 475.2L138.9 480.8ZM143.1 514.5L141.7 503.4L131.7 497.7L133.2 508.8ZM140.3 492.1L130.3 486.5L131.7 497.7L141.7 503.4ZM134.5 446.1L133.1 434.3L122.8 428.9L124.3 440.6ZM131.6 422.4L121.3 417L122.8 428.9L133.1 434.3ZM137.5 469.3L136 457.8L125.8 452.3L127.3 463.8ZM134.5 446.1L124.3 440.6L125.8 452.3L136 457.8ZM128.5 398.3L127 386.1L116.6 380.8L118.2 393ZM125.4 373.8L115 368.5L116.6 380.8L127 386.1ZM131.6 422.4L130.1 410.4L119.7 405.1L121.3 417ZM128.5 398.3L118.2 393L119.7 405.1L130.1 410.4ZM122.3 348.7L120.7 336L110.1 330.9L111.8 343.6ZM119.1 323.2L108.5 318.1L110.1 330.9L120.7 336ZM125.4 373.8L123.9 361.3L113.4 356.1L115 368.5ZM122.3 348.7L111.8 343.6L113.4 356.1L123.9 361.3Z"/>
<path fill="#537d67" d="M167.8 547.6L166.4 536.9L155.2 531.2L156.7 541.9Z"/>
<path fill="#4d735f" d="M124.3 503.2L125.8 514.1L134.6 519.8L133.2 508.8ZM146 536.2L147.8 546.2L158.5 551.9L156.7 541.9Z"/>
<path fill="#4a6f5c" d="M127.4 524.7L136.2 530.5L134.6 519.8L125.8 514.1ZM390.1 681.1L403.2 687.2L402.1 677.9L388.9 671.7Z"/>
<path fill="#4f7662" d="M146 536.2L144.5 525.5L134.6 519.8L136.2 530.5ZM361.6 647.8L362.5 658.2L375.7 665.1L374.8 654.6ZM416.2 692.6L415.3 683.4L402.1 677.9L403.2 687.2Z"/>
<path fill="#517a65" d="M143.1 514.5L133.2 508.8L134.6 519.8L144.5 525.5ZM464 712.9L464.6 708L453.5 708.2L453.8 713.2Z"/>
<path fill="#395547" d="M131.6 543.6L140.3 549.4L138 540.4L129.3 534.7Z"/>
<path fill="#405f4f" d="M150.1 555.2L147.8 546.2L138 540.4L140.3 549.4Z"/>
<path fill="#4a6e5b" d="M146 536.2L136.2 530.5L138 540.4L147.8 546.2Z"/>
<path fill="#446655" d="M127.4 524.7L129.3 534.7L138 540.4L136.2 530.5Z"/>
<path fill="#456755" d="M171.7 566.8L169.5 557.7L158.5 551.9L160.6 561ZM124.3 503.2L116.9 497.4L118.4 508.4L125.8 514.1Z"/>
<path fill="#4e7561" d="M167.8 547.6L156.7 541.9L158.5 551.9L169.5 557.7ZM95.9 287.3L94.8 274.6L87 269.8L88 282.3Z"/>
<path fill="#436553" d="M150.1 555.2L160.6 561L158.5 551.9L147.8 546.2Z"/>
<path fill="#2d4337" d="M131.6 543.6L129.3 534.7L122 528.8L124.4 537.8Z"/>
<path fill="#3b5849" d="M127.4 524.7L120 518.9L122 528.8L129.3 534.7ZM390.1 681.1L391.9 689.1L404.9 695.1L403.2 687.2Z"/>
<path fill="#293b31" d="M114.4 513.1L116.4 522.9L122 528.8L120 518.9Z"/>
<path fill="#365043" d="M111.3 491.6L112.8 502.6L118.4 508.4L116.9 497.4Z"/>
<path fill="#324b3e" d="M114.4 513.1L120 518.9L118.4 508.4L112.8 502.6Z"/>
<path fill="#426251" d="M127.4 524.7L125.8 514.1L118.4 508.4L120 518.9Z"/>
<path fill="#3f5e4e" d="M483.2 708.7L473.7 711.4L471.6 714.8L479.9 712.6ZM464 712.9L463.3 715.8L471.6 714.8L473.7 711.4Z"/>
<path fill="#375244" d="M501.7 699.1L492.5 704.6L488.5 709L497.4 703.8ZM108.2 469.5L109.8 480.6L115.4 486.4L113.9 475.2ZM111.3 491.6L116.9 497.4L115.4 486.4L109.8 480.6ZM105.1 447L106.7 458.3L112.4 464L110.8 452.6ZM108.2 469.5L113.9 475.2L112.4 464L106.7 458.3ZM102 424L103.6 435.6L109.3 441.2L107.7 429.6ZM105.1 447L110.8 452.6L109.3 441.2L103.6 435.6ZM98.8 400.7L100.4 412.4L106.2 418L104.6 406.2ZM102 424L107.7 429.6L106.2 418L100.4 412.4ZM95.5 376.8L97.1 388.8L102.9 394.3L101.3 382.3ZM98.8 400.7L104.6 406.2L102.9 394.3L97.1 388.8ZM92.2 352.6L93.8 364.8L99.7 370.2L98 358ZM95.5 376.8L101.3 382.3L99.7 370.2L93.8 364.8ZM88.8 327.9L90.5 340.3L96.4 345.6L94.7 333.2ZM92.2 352.6L98 358L96.4 345.6L90.5 340.3ZM85.3 302.7L87 315.3L93 320.6L91.2 307.9ZM88.8 327.9L94.7 333.2L93 320.6L87 315.3ZM464 712.9L453.8 713.2L454.4 716.3L463.3 715.8Z"/>
<path fill="#3c594a" d="M483.2 708.7L479.9 712.6L488.5 709L492.5 704.6ZM443 712.3L441.9 707L430 704.3L431.6 710Z"/>
<path fill="#679a7f" d="M507 684.6L497.1 690.8L495.3 698.5L504.9 692.6Z"/>
<path fill="#689c81" d="M486.9 695.8L485.4 703.1L495.3 698.5L497.1 690.8ZM698.2 499.7L700.4 490.6L695.3 497.3L693.1 506.3Z"/>
<path fill="#58856e" d="M483.2 708.7L492.5 704.6L495.3 698.5L485.4 703.1Z"/>
<path fill="#56826b" d="M501.7 699.1L504.9 692.6L495.3 698.5L492.5 704.6ZM142.5 333.4L141 320.3L129 315.3L130.6 328.3Z"/>
<path fill="#669a7f" d="M465.1 701.3L464.6 708L475.2 706.3L476.2 699.4Z"/>
<path fill="#57836c" d="M464 712.9L473.7 711.4L475.2 706.3L464.6 708ZM116 297.3L117.5 310.2L129 315.3L127.6 302.2ZM91.5 202.5L87.7 207.5L84 213.1L87.5 208.5ZM387.4 638.5L373.9 631.9L374.3 643.5L387.7 650.1ZM414.8 673L401.5 667.5L402.1 677.9L415.3 683.4ZM352.9 423.4L367.3 429.6L366.9 415.7L352.3 409.6Z"/>
<path fill="#59866f" d="M483.2 708.7L485.4 703.1L475.2 706.3L473.7 711.4ZM116 297.3L115 284.4L104.3 279.5L105.3 292.3ZM441.4 699.9L441.9 707L453.5 708.2L453.5 701.4ZM698.2 499.7L695.3 507.6L699 501.1L702 493.2ZM352 395.8L352.3 409.6L366.9 415.7L366.6 401.9Z"/>
<path fill="#689d82" d="M486.9 695.8L476.2 699.4L475.2 706.3L485.4 703.1ZM114.7 271.7L115.2 259.4L104.5 254.8L103.9 266.9Z"/>
<path fill="#2b3f34" d="M538 667.1L529.1 675.8L524.3 681L533.2 672.3Z"/>
<path fill="#629379" d="M544.1 652L535.1 660.7L532.6 669L541.5 660.3ZM578.7 618.3L570.2 626.6L567.6 634.9L576.1 626.6ZM561.6 634.9L559 643.2L567.6 634.9L570.2 626.6ZM544.1 652L541.5 660.3L550.3 651.7L552.9 643.4ZM561.6 634.9L552.9 643.4L550.3 651.7L559 643.2ZM611.7 586.4L603.6 594.2L600.9 602.4L609 594.6ZM595.4 602.2L592.8 610.4L600.9 602.4L603.6 594.2ZM578.7 618.3L576.1 626.6L584.5 618.4L587.1 610.2ZM595.4 602.2L587.1 610.2L584.5 618.4L592.8 610.4ZM643 556L635.4 563.5L632.6 571.6L640.3 564.1ZM627.6 571L624.8 579.2L632.6 571.6L635.4 563.5ZM611.7 586.4L609 594.6L616.9 586.8L619.7 578.6ZM627.6 571L619.7 578.6L616.9 586.8L624.8 579.2ZM672.9 527.1L665.6 534.2L662.7 542.2L670 535.1ZM658.1 541.4L655.3 549.4L662.7 542.2L665.6 534.2ZM643 556L640.3 564.1L647.8 556.7L650.6 548.6ZM658.1 541.4L650.6 548.6L647.8 556.7L655.3 549.4Z"/>
<path fill="#62947a" d="M526 669.2L523.5 677.5L532.6 669L535.1 660.7ZM414.3 650.2L414.5 661.8L427.7 666.4L427.6 654.7Z"/>
<path fill="#517964" d="M520 684.3L529.1 675.8L532.6 669L523.5 677.5ZM441.4 699.9L429 696.9L430 704.3L441.9 707Z"/>
<path fill="#507863" d="M538 667.1L541.5 660.3L532.6 669L529.1 675.8ZM95.9 287.3L97.4 300.1L106.8 305.2L105.3 292.3ZM555.5 650.1L564 641.7L567.6 634.9L559 643.2ZM572.5 633.4L576.1 626.6L567.6 634.9L564 641.7ZM538 667.1L546.8 658.5L550.3 651.7L541.5 660.3ZM555.5 650.1L559 643.2L550.3 651.7L546.8 658.5ZM589.1 617.2L597.3 609.2L600.9 602.4L592.8 610.4ZM605.3 601.4L609 594.6L600.9 602.4L597.3 609.2ZM572.5 633.4L580.9 625.3L584.5 618.4L576.1 626.6ZM589.1 617.2L592.8 610.4L584.5 618.4L580.9 625.3ZM621.1 586L628.9 578.4L632.6 571.6L624.8 579.2ZM636.5 570.9L640.3 564.1L632.6 571.6L628.9 578.4ZM605.3 601.4L613.3 593.6L616.9 586.8L609 594.6ZM621.1 586L624.8 579.2L616.9 586.8L613.3 593.6ZM651.6 556.2L659 549L662.7 542.2L655.3 549.4ZM666.3 541.9L670 535.1L662.7 542.2L659 549ZM636.5 570.9L644.1 563.5L647.8 556.7L640.3 564.1ZM651.6 556.2L655.3 549.4L647.8 556.7L644.1 563.5ZM388.1 661.3L374.8 654.6L375.7 665.1L388.9 671.7ZM666.3 541.9L673.5 534.8L677.3 528.1L670 535.1Z"/>
<path fill="#65987d" d="M507 684.6L504.9 692.6L514.3 685.5L516.6 677.3ZM94.5 262.3L103.9 266.9L104.5 254.8L95.1 250.4ZM410.8 418.3L410.9 432.3L425.5 436.4L425.4 422.4Z"/>
<path fill="#63957b" d="M526 669.2L516.6 677.3L514.3 685.5L523.5 677.5ZM138.4 281.5L126.3 276.6L126.6 289.3L138.7 294.3ZM83.9 232.1L81.9 242.2L87.5 246.3L89.4 235.5ZM188.4 301.8L175.7 296.6L175.9 309.6L188.5 314.8ZM163.2 291.5L163.4 304.4L175.9 309.6L175.7 296.6ZM138.4 281.5L138.7 294.3L151 299.3L150.7 286.5ZM163.2 291.5L150.7 286.5L151 299.3L163.4 304.4ZM240.7 323L227.4 317.6L227.3 330.7L240.6 336.2ZM214.3 312.3L214.3 325.3L227.3 330.7L227.4 317.6ZM188.4 301.8L188.5 314.8L201.3 320L201.3 307ZM214.3 312.3L201.3 307L201.3 320L214.3 325.3ZM295.3 345.2L281.4 339.5L281.2 352.8L295 358.5ZM267.7 333.9L267.5 347.2L281.2 352.8L281.4 339.5ZM240.7 323L240.6 336.2L253.9 341.7L254.1 328.4ZM267.7 333.9L254.1 328.4L253.9 341.7L267.5 347.2ZM352.6 368.4L338 362.5L337.5 376L352 382ZM323.6 356.6L323.2 370.1L337.5 376L338 362.5ZM295.3 345.2L295 358.5L309 364.3L309.4 350.9ZM323.6 356.6L309.4 350.9L309 364.3L323.2 370.1ZM440.8 680.8L427.9 677.5L428.3 687.8L441 691ZM413.5 602.4L413.7 614.5L427.2 619L427.1 606.8ZM413.9 626.5L427.4 631L427.2 619L413.7 614.5ZM414.3 650.2L427.6 654.7L427.5 642.9L414.1 638.4ZM413.9 626.5L414.1 638.4L427.5 642.9L427.4 631ZM412.8 552.5L413 565.2L426.8 569.6L426.6 556.9ZM413.2 577.7L426.9 582.1L426.8 569.6L413 565.2ZM413.5 602.4L427.1 606.8L427 594.5L413.3 590.1ZM413.2 577.7L413.3 590.1L427 594.5L426.9 582.1ZM412 500.5L412.2 513.7L426.3 518L426.1 504.8ZM412.4 526.8L426.4 531.1L426.3 518L412.2 513.7ZM412.8 552.5L426.6 556.9L426.5 544.1L412.6 539.7ZM412.4 526.8L412.6 539.7L426.5 544.1L426.4 531.1ZM411.1 446.2L411.3 460L425.7 464.2L425.6 450.4ZM411.5 473.7L425.9 477.9L425.7 464.2L411.3 460ZM412 500.5L426.1 504.8L426 491.4L411.8 487.2ZM411.5 473.7L411.8 487.2L426 491.4L425.9 477.9ZM411.1 446.2L425.6 450.4L425.5 436.4L410.9 432.3Z"/>
<path fill="#2f453a" d="M520 684.3L510.9 692.2L506.4 697.1L515.4 689.4Z"/>
<path fill="#334b3f" d="M501.7 699.1L497.4 703.8L506.4 697.1L510.9 692.2Z"/>
<path fill="#77b394" d="M548 609.5L538.9 618L538.5 629.6L547.6 621ZM529.6 626.5L529.2 638.1L538.5 629.6L538.9 618ZM548 609.5L557 601L565.9 592.7L566.5 581.1L567 569.5L558.1 577.7L549 586.1L548.5 597.9ZM583.3 576.3L583.9 564.8L584.6 553.3L575.9 561.3L567 569.5L566.5 581.1L565.9 592.7L574.7 584.4ZM585.9 529.8L577.1 537.7L568.2 545.8L567.6 557.7L567 569.5L575.9 561.3L584.6 553.3L585.2 541.6ZM550 562.3L549.5 574.3L549 586.1L558.1 577.7L567 569.5L567.6 557.7L568.2 545.8L559.2 554ZM616.7 544.8L617.5 533.5L618.3 522.1L610.1 529.7L601.7 537.5L601 549L600.2 560.3L608.5 552.5ZM619.9 498.9L611.6 506.5L603.1 514.1L602.4 525.9L601.7 537.5L610.1 529.7L618.3 522.1L619.1 510.5ZM585.9 529.8L585.2 541.6L584.6 553.3L593.2 545.3L601.7 537.5L602.4 525.9L603.1 514.1L594.6 521.9ZM583.3 576.3L591.8 568.3L600.2 560.3L601 549L601.7 537.5L593.2 545.3L584.6 553.3L583.9 564.8ZM623.2 451.2L614.7 458.6L606.1 466.1L605.4 478.3L604.6 490.4L613.1 482.8L621.6 475.3L622.4 463.3ZM588.6 481.4L587.9 493.7L587.2 505.8L596 498L604.6 490.4L605.4 478.3L606.1 466.1L597.4 473.7ZM585.9 529.8L594.6 521.9L603.1 514.1L603.9 502.3L604.6 490.4L596 498L587.2 505.8L586.6 517.9ZM619.9 498.9L620.7 487.2L621.6 475.3L613.1 482.8L604.6 490.4L603.9 502.3L603.1 514.1L611.6 506.5ZM552.1 513.3L551.5 525.7L551 538.1L560.3 529.8L569.4 521.7L570 509.5L570.6 497.1L561.4 505.1ZM550 562.3L559.2 554L568.2 545.8L568.8 533.8L569.4 521.7L560.3 529.8L551 538.1L550.5 550.3ZM585.9 529.8L586.6 517.9L587.2 505.8L578.4 513.7L569.4 521.7L568.8 533.8L568.2 545.8L577.1 537.7ZM588.6 481.4L579.7 489.2L570.6 497.1L570 509.5L569.4 521.7L578.4 513.7L587.2 505.8L587.9 493.7ZM552.1 513.3L561.4 505.1L570.6 497.1L571.2 484.6L571.8 472L562.5 479.9L553.1 488L552.6 500.7ZM588.6 481.4L589.3 469L590 456.5L581 464.2L571.8 472L571.2 484.6L570.6 497.1L579.7 489.2ZM591.4 431.1L582.3 438.7L573.1 446.4L572.4 459.3L571.8 472L581 464.2L590 456.5L590.7 443.8ZM554.2 462.2L553.6 475.1L553.1 488L562.5 479.9L571.8 472L572.4 459.3L573.1 446.4L563.7 454.2ZM623.2 451.2L624.1 439L624.9 426.7L616.4 434L607.7 441.4L606.9 453.8L606.1 466.1L614.7 458.6ZM626.7 401.6L618 408.8L609.3 416.1L608.5 428.8L607.7 441.4L616.4 434L624.9 426.7L625.8 414.2ZM591.4 431.1L590.7 443.8L590 456.5L598.9 448.9L607.7 441.4L608.5 428.8L609.3 416.1L600.4 423.6ZM588.6 481.4L597.4 473.7L606.1 466.1L606.9 453.8L607.7 441.4L598.9 448.9L590 456.5L589.3 469ZM630.2 350.1L621.4 357.1L612.5 364.1L611.7 377.3L610.9 390.4L619.7 383.2L628.4 376.1L629.3 363.2ZM594.4 378.6L593.6 391.9L592.9 405.1L602 397.7L610.9 390.4L611.7 377.3L612.5 364.1L603.5 371.3ZM591.4 431.1L600.4 423.6L609.3 416.1L610.1 403.3L610.9 390.4L602 397.7L592.9 405.1L592.2 418.2ZM626.7 401.6L627.5 388.9L628.4 376.1L619.7 383.2L610.9 390.4L610.1 403.3L609.3 416.1L618 408.8ZM556.4 408.9L555.9 422.4L555.3 435.8L564.9 428L574.4 420.2L575 407L575.7 393.5L566.1 401.1ZM554.2 462.2L563.7 454.2L573.1 446.4L573.7 433.4L574.4 420.2L564.9 428L555.3 435.8L554.7 449ZM591.4 431.1L592.2 418.2L592.9 405.1L583.7 412.6L574.4 420.2L573.7 433.4L573.1 446.4L582.3 438.7ZM594.4 378.6L585.1 386L575.7 393.5L575 407L574.4 420.2L583.7 412.6L592.9 405.1L593.6 391.9ZM616.7 544.8L624.8 537.2L632.8 529.7L633.7 518.4L634.5 507.1L626.5 514.5L618.3 522.1L617.5 533.5ZM648.5 514.9L649.4 503.7L650.4 492.5L642.5 499.7L634.5 507.1L633.7 518.4L632.8 529.7L640.7 522.2ZM652.2 469.6L644.3 476.8L636.3 484.1L635.4 495.6L634.5 507.1L642.5 499.7L650.4 492.5L651.3 481.1ZM619.9 498.9L619.1 510.5L618.3 522.1L626.5 514.5L634.5 507.1L635.4 495.6L636.3 484.1L628.2 491.4ZM678.8 486.4L679.8 475.4L680.8 464.3L673.4 471.2L665.8 478.2L664.8 489.4L663.8 500.5L671.4 493.4ZM682.9 441.8L675.4 448.6L667.8 455.5L666.8 466.9L665.8 478.2L673.4 471.2L680.8 464.3L681.9 453.1ZM652.2 469.6L651.3 481.1L650.4 492.5L658.1 485.3L665.8 478.2L666.8 466.9L667.8 455.5L660 462.5ZM648.5 514.9L656.2 507.6L663.8 500.5L664.8 489.4L665.8 478.2L658.1 485.3L650.4 492.5L649.4 503.7ZM687.2 395.4L679.6 402.1L671.8 408.8L670.8 420.7L669.8 432.4L677.5 425.5L685 418.8L686.1 407.2ZM656 422.6L655.1 434.5L654.1 446.3L662 439.3L669.8 432.4L670.8 420.7L671.8 408.8L664 415.7ZM652.2 469.6L660 462.5L667.8 455.5L668.8 444L669.8 432.4L662 439.3L654.1 446.3L653.2 458ZM682.9 441.8L684 430.3L685 418.8L677.5 425.5L669.8 432.4L668.8 444L667.8 455.5L675.4 448.6ZM623.2 451.2L622.4 463.3L621.6 475.3L629.9 467.9L638 460.6L638.9 448.7L639.9 436.7L631.6 443.9ZM619.9 498.9L628.2 491.4L636.3 484.1L637.2 472.4L638 460.6L629.9 467.9L621.6 475.3L620.7 487.2ZM652.2 469.6L653.2 458L654.1 446.3L646.1 453.4L638 460.6L637.2 472.4L636.3 484.1L644.3 476.8ZM656 422.6L648 429.6L639.9 436.7L638.9 448.7L638 460.6L646.1 453.4L654.1 446.3L655.1 434.5ZM623.2 451.2L631.6 443.9L639.9 436.7L640.8 424.6L641.7 412.4L633.4 419.5L624.9 426.7L624.1 439ZM656 422.6L657 410.6L658 398.4L649.9 405.3L641.7 412.4L640.8 424.6L639.9 436.7L648 429.6ZM660 373.8L651.8 380.6L643.6 387.5L642.6 400L641.7 412.4L649.9 405.3L658 398.4L659 386.2ZM626.7 401.6L625.8 414.2L624.9 426.7L633.4 419.5L641.7 412.4L642.6 400L643.6 387.5L635.2 394.5ZM687.2 395.4L688.3 383.6L689.4 371.6L681.7 378.2L673.9 384.8L672.9 396.9L671.8 408.8L679.6 402.1ZM691.7 347.3L683.9 353.8L676.1 360.4L675 372.7L673.9 384.8L681.7 378.2L689.4 371.6L690.5 359.5ZM660 373.8L659 386.2L658 398.4L666 391.6L673.9 384.8L675 372.7L676.1 360.4L668.1 367ZM656 422.6L664 415.7L671.8 408.8L672.9 396.9L673.9 384.8L666 391.6L658 398.4L657 410.6ZM696.3 297.4L688.4 303.7L680.4 310.1L679.3 322.8L678.2 335.5L686.1 329L694 322.6L695.1 310.1ZM664.1 323L663.1 335.9L662.1 348.7L670.2 342L678.2 335.5L679.3 322.8L680.4 310.1L672.3 316.5ZM660 373.8L668.1 367L676.1 360.4L677.1 348L678.2 335.5L670.2 342L662.1 348.7L661 361.3ZM691.7 347.3L692.8 335L694 322.6L686.1 329L678.2 335.5L677.1 348L676.1 360.4L683.9 353.8ZM630.2 350.1L629.3 363.2L628.4 376.1L637 369.1L645.5 362.2L646.4 349.3L647.4 336.4L638.9 343.2ZM626.7 401.6L635.2 394.5L643.6 387.5L644.5 374.9L645.5 362.2L637 369.1L628.4 376.1L627.5 388.9ZM660 373.8L661 361.3L662.1 348.7L653.8 355.4L645.5 362.2L644.5 374.9L643.6 387.5L651.8 380.6ZM664.1 323L655.8 329.7L647.4 336.4L646.4 349.3L645.5 362.2L653.8 355.4L662.1 348.7L663.1 335.9ZM465.9 659.7L465.9 647.9L453.5 647.9L453.5 659.7ZM466 636L453.5 636L453.5 647.9L465.9 647.9ZM466.2 611.7L453.6 611.7L453.5 623.9L466.1 623.9ZM466 636L466.1 623.9L453.5 623.9L453.5 636ZM466.5 561.7L453.6 561.7L453.6 574.4L466.4 574.4ZM466.4 587L466.4 574.4L453.6 574.4L453.6 587ZM466.2 611.7L466.3 599.4L453.6 599.4L453.6 611.7ZM466.4 587L453.6 587L453.6 599.4L466.3 599.4ZM466.5 561.7L466.6 548.8L453.7 548.9L453.6 561.7ZM466.7 535.9L453.7 535.9L453.7 548.9L466.6 548.8ZM466.9 509.5L453.7 509.5L453.7 522.8L466.8 522.7ZM466.7 535.9L466.8 522.7L453.7 522.8L453.7 535.9ZM467.3 454.9L453.8 455L453.8 468.8L467.2 468.8ZM467.1 482.5L467.2 468.8L453.8 468.8L453.8 482.5ZM466.9 509.5L467 496.1L453.7 496.1L453.7 509.5ZM467.1 482.5L453.8 482.5L453.7 496.1L467 496.1ZM467.3 454.9L467.4 440.9L453.8 441L453.8 455ZM711.4 285.1L712.6 272.5L705.3 278.5L704.1 291.2Z"/>
<path fill="#76b192" d="M528.6 649.2L537.8 640.7L538.5 629.6L529.2 638.1ZM217 287.3L203.9 282.1L202.1 294.3L215.1 299.5ZM191 277L189.2 289.2L202.1 294.3L203.9 282.1ZM243.6 297.8L230.2 292.5L228.3 304.8L241.6 310.1ZM217 287.3L215.1 299.5L228.3 304.8L230.2 292.5ZM165.5 267L153 262L151.3 274L163.8 279ZM140.7 257.2L139 269.1L151.3 274L153 262ZM191 277L178.2 272L176.4 284.1L189.2 289.2ZM165.5 267L163.8 279L176.4 284.1L178.2 272ZM327.1 330.7L312.8 325.1L310.6 337.7L324.9 343.4ZM298.6 319.5L296.5 332.1L310.6 337.7L312.8 325.1ZM356.3 342.2L341.6 336.4L339.4 349.2L354 355.1ZM327.1 330.7L324.9 343.4L339.4 349.2L341.6 336.4ZM270.8 308.5L257.1 303.1L255.1 315.5L268.7 321ZM243.6 297.8L241.6 310.1L255.1 315.5L257.1 303.1ZM298.6 319.5L284.6 313.9L282.5 326.5L296.5 332.1ZM270.8 308.5L268.7 321L282.5 326.5L284.6 313.9ZM411.7 390.7L426.1 394.9L427.1 381.7L413 377.4ZM356.3 342.2L354 355.1L368.8 361L371.2 348.1ZM725.7 248.3L720.3 254L719.2 266.5L724.7 260.8ZM711.4 285.1L718 279.2L719.2 266.5L712.6 272.5ZM725.7 248.3L729.8 242.7L730.3 230.6L726.3 236Z"/>
<path fill="#75b092" d="M546.9 632.1L547.6 621L538.5 629.6L537.8 640.7ZM439.8 425.4L453.9 426.9L453.9 413.1L439.9 411.5Z"/>
<path fill="#78b495" d="M509.3 664.8L519.1 657.3L519.7 646.2L509.8 653.6ZM488.4 676.6L477.3 680.5L476.9 690.6L487.9 686.9ZM340.2 77.8L348.8 74.4L341.6 76.3L332.9 79.6ZM536.5 424.4L546.6 416.7L547.1 403L537 410.6Z"/>
<path fill="#76b293" d="M528.6 649.2L529.2 638.1L519.7 646.2L519.1 657.3ZM465.6 682.5L465.4 692.6L476.9 690.6L477.3 680.5ZM357 71.9L349.8 73.7L341.6 76.3L348.8 74.4ZM96.8 239.2L99.7 228.6L92.4 225.5L89.4 235.5ZM465.9 659.7L453.5 659.7L453.5 671.4L465.8 671.4ZM693 472.7L686.1 479.5L685.1 490.4L692 483.6ZM732.3 214.1L730.1 219L730.3 230.6L732.6 225.4ZM732.3 214.1L732.6 209.4L731.2 199.5L730.9 203.8Z"/>
<path fill="#78b595" d="M529.6 626.5L520 634.6L519.7 646.2L529.2 638.1ZM556.4 408.9L566.1 401.1L575.7 393.5L576.3 380L576.8 366.4L567.1 373.9L557.3 381.5L557 395.2ZM594.4 378.6L595.1 365.2L595.6 351.7L586.3 359L576.8 366.4L576.3 380L575.7 393.5L585.1 386ZM630.2 350.1L631.1 336.8L631.8 323.6L623 330.5L614 337.5L613.4 350.8L612.5 364.1L621.4 357.1ZM594.4 378.6L603.5 371.3L612.5 364.1L613.4 350.8L614 337.5L604.9 344.5L595.6 351.7L595.1 365.2ZM630.2 350.1L638.9 343.2L647.4 336.4L648.4 323.3L649.2 310.1L640.5 316.8L631.8 323.6L631.1 336.8ZM664.1 323L665.2 310L666 297L657.6 303.6L649.2 310.1L648.4 323.3L647.4 336.4L655.8 329.7ZM696.3 297.4L697.5 284.6L698.4 271.9L690.5 278L682.4 284.3L681.6 297.2L680.4 310.1L688.4 303.7ZM664.1 323L672.3 316.5L680.4 310.1L681.6 297.2L682.4 284.3L674.3 290.6L666 297L665.2 310ZM386 353.9L383.7 366.8L398.4 372.3L400.7 359.4Z"/>
<path fill="#6fa689" d="M507 684.6L516.6 677.3L518.2 667.8L508.4 675.2ZM702 480.8L705.9 474.4L707.2 464L703.3 470.4ZM382.2 380.2L397 385.7L398.4 372.3L383.7 366.8Z"/>
<path fill="#73ad8f" d="M528.6 649.2L519.1 657.3L518.2 667.8L527.6 659.7ZM116.8 247.7L106.1 243.3L104.5 254.8L115.2 259.4ZM704.4 459.6L699.2 466.1L698.2 476.9L703.3 470.4Z"/>
<path fill="#74af91" d="M509.3 664.8L508.4 675.2L518.2 667.8L519.1 657.3ZM690.7 494.1L692 483.6L685.1 490.4L683.9 501Z"/>
<path fill="#6ca286" d="M544.1 652L545.8 642.5L536.8 651.2L535.1 660.7ZM578.7 618.3L587.1 610.2L589 600.8L580.6 608.9ZM595.4 602.2L597.3 592.8L589 600.8L587.1 610.2ZM611.7 586.4L613.6 577.1L605.5 584.9L603.6 594.2ZM595.4 602.2L603.6 594.2L605.5 584.9L597.3 592.8ZM544.1 652L552.9 643.4L554.6 633.9L545.8 642.5ZM561.6 634.9L563.4 625.5L554.6 633.9L552.9 643.4ZM578.7 618.3L580.6 608.9L572 617.2L570.2 626.6ZM561.6 634.9L570.2 626.6L572 617.2L563.4 625.5ZM188.4 301.8L201.3 307L202.1 294.3L189.2 289.2ZM214.3 312.3L215.1 299.5L202.1 294.3L201.3 307ZM240.7 323L241.6 310.1L228.3 304.8L227.4 317.6ZM214.3 312.3L227.4 317.6L228.3 304.8L215.1 299.5ZM138.4 281.5L150.7 286.5L151.3 274L139 269.1ZM163.2 291.5L163.8 279L151.3 274L150.7 286.5ZM188.4 301.8L189.2 289.2L176.4 284.1L175.7 296.6ZM163.2 291.5L175.7 296.6L176.4 284.1L163.8 279ZM643 556L650.6 548.6L652.7 539.4L645.1 546.8ZM658.1 541.4L660.2 532.2L652.7 539.4L650.6 548.6ZM672.9 527.1L675 517.9L667.7 525L665.6 534.2ZM658.1 541.4L665.6 534.2L667.7 525L660.2 532.2ZM611.7 586.4L619.7 578.6L621.7 569.3L613.6 577.1ZM627.6 571L629.6 561.7L621.7 569.3L619.7 578.6ZM643 556L645.1 546.8L637.4 554.2L635.4 563.5ZM627.6 571L635.4 563.5L637.4 554.2L629.6 561.7ZM295.3 345.2L309.4 350.9L310.6 337.7L296.5 332.1ZM323.6 356.6L324.9 343.4L310.6 337.7L309.4 350.9ZM352.6 368.4L354 355.1L339.4 349.2L338 362.5ZM323.6 356.6L338 362.5L339.4 349.2L324.9 343.4ZM240.7 323L254.1 328.4L255.1 315.5L241.6 310.1ZM267.7 333.9L268.7 321L255.1 315.5L254.1 328.4ZM295.3 345.2L296.5 332.1L282.5 326.5L281.4 339.5ZM267.7 333.9L281.4 339.5L282.5 326.5L268.7 321ZM712.8 425.4L714 414.4L711.7 420.4L710.5 431.4ZM715.1 403.3L712.8 409.3L711.7 420.4L714 414.4ZM710.6 447.1L711.7 436.3L709.4 442.4L708.3 453.2ZM712.8 425.4L710.5 431.4L709.4 442.4L711.7 436.3ZM717.5 380.8L718.6 369.4L716.3 375.3L715.2 386.7ZM719.8 357.9L717.5 363.8L716.3 375.3L718.6 369.4ZM715.1 403.3L716.3 392.1L714 398.1L712.8 409.3ZM717.5 380.8L715.2 386.7L714 398.1L716.3 392.1ZM722.2 334.6L723.5 322.8L721.2 328.5L719.9 340.4ZM724.7 310.9L722.4 316.6L721.2 328.5L723.5 322.8ZM719.8 357.9L721 346.3L718.7 352.1L717.5 363.8ZM722.2 334.6L719.9 340.4L718.7 352.1L721 346.3ZM727.2 286.8L728.5 274.5L726.2 280.1L724.9 292.3ZM729.8 262.2L727.5 267.7L726.2 280.1L728.5 274.5ZM724.7 310.9L726 298.9L723.7 304.5L722.4 316.6ZM727.2 286.8L724.9 292.3L723.7 304.5L726 298.9ZM352.6 368.4L367.4 374.4L368.8 361L354 355.1ZM729.8 262.2L731.1 249.7L728.7 255.1L727.5 267.7Z"/>
<path fill="#72ab8d" d="M546.9 632.1L537.8 640.7L536.8 651.2L545.8 642.5ZM486.9 695.8L497.1 690.8L498.3 681.7L487.9 686.9ZM90.9 214.4L87.3 213.4L83.7 220.6L87 222.9ZM598.6 582.5L590.3 590.5L589 600.8L597.3 592.8ZM581.8 598.6L580.6 608.9L589 600.8L590.3 590.5ZM615 566.9L606.9 574.6L605.5 584.9L613.6 577.1ZM598.6 582.5L597.3 592.8L605.5 584.9L606.9 574.6ZM564.6 615.1L555.8 623.5L554.6 633.9L563.4 625.5ZM546.9 632.1L545.8 642.5L554.6 633.9L555.8 623.5ZM581.8 598.6L573.3 606.8L572 617.2L580.6 608.9ZM564.6 615.1L563.4 625.5L572 617.2L573.3 606.8ZM661.7 522.1L654.2 529.4L652.7 539.4L660.2 532.2ZM646.5 536.7L645.1 546.8L652.7 539.4L654.2 529.4ZM676.6 507.9L669.2 515L667.7 525L675 517.9ZM661.7 522.1L660.2 532.2L667.7 525L669.2 515ZM631 551.6L623 559.2L621.7 569.3L629.6 561.7ZM615 566.9L613.6 577.1L621.7 569.3L623 559.2ZM646.5 536.7L638.8 544.1L637.4 554.2L645.1 546.8ZM631 551.6L629.6 561.7L637.4 554.2L638.8 544.1ZM702 480.8L703.3 470.4L698.2 476.9L696.9 487.4Z"/>
<path fill="#72ac8e" d="M528.6 649.2L527.6 659.7L536.8 651.2L537.8 640.7Z"/>
<path fill="#6ca386" d="M526 669.2L535.1 660.7L536.8 651.2L527.6 659.7Z"/>
<path fill="#7bb999" d="M465.9 659.7L465.8 671.4L477.5 669.3L477.7 657.6ZM488.4 676.6L488.8 665.5L477.5 669.3L477.3 680.5ZM96.8 239.2L106.1 243.3L109 232.3L99.7 228.6ZM90.9 214.4L87 222.9L92.4 225.5L96.5 216.2ZM440.2 398L440.8 385.1L427.1 381.7L426.1 394.9ZM415.1 364.6L400.7 359.4L398.4 372.3L413 377.4Z"/>
<path fill="#79b797" d="M465.6 682.5L477.3 680.5L477.5 669.3L465.8 671.4ZM537.2 396.8L537 410.6L547.1 403L547.4 389.2Z"/>
<path fill="#70a98b" d="M465.1 701.3L476.2 699.4L476.9 690.6L465.4 692.6ZM507 684.6L508.4 675.2L498.3 681.7L497.1 690.8ZM690.7 494.1L689.1 504L695.3 497.3L696.9 487.4Z"/>
<path fill="#72ab8e" d="M486.9 695.8L487.9 686.9L476.9 690.6L476.2 699.4ZM439.8 425.4L439.8 439.4L453.8 441L453.9 426.9Z"/>
<path fill="#76b193" d="M509.3 664.8L499.1 671.3L498.3 681.7L508.4 675.2Z"/>
<path fill="#77b494" d="M488.4 676.6L487.9 686.9L498.3 681.7L499.1 671.3ZM696.3 297.4L704.1 291.2L705.3 278.5L697.5 284.6ZM713.7 259.8L712.6 272.5L719.2 266.5L720.3 254Z"/>
<path fill="#7bb998" d="M510.1 642L499.7 648.5L499.5 660.1L509.8 653.6ZM726 224.1L726.3 236L730.3 230.6L730.1 219Z"/>
<path fill="#7cbb9a" d="M489 653.8L488.8 665.5L499.5 660.1L499.7 648.5ZM465.9 659.7L477.7 657.6L489 653.8L489.2 642L489.4 630.1L478 633.9L466 636L465.9 647.9ZM466.2 611.7L466.1 623.9L466 636L478 633.9L489.4 630.1L489.6 618.1L489.8 605.9L478.2 609.7ZM466.5 561.7L466.4 574.4L466.4 587L478.5 585L490.2 581.2L490.4 568.7L490.6 556L478.8 559.7ZM466.2 611.7L478.2 609.7L489.8 605.9L490 593.6L490.2 581.2L478.5 585L466.4 587L466.3 599.4ZM466.5 561.7L478.8 559.7L490.6 556L490.8 543.2L491.1 530.2L479.2 533.9L466.7 535.9L466.6 548.8ZM466.9 509.5L466.8 522.7L466.7 535.9L479.2 533.9L491.1 530.2L491.3 517.1L491.5 503.9L479.5 507.5ZM467.3 454.9L467.2 468.8L467.1 482.5L479.8 480.6L492 477L492.2 463.3L492.4 449.5L480.1 453ZM466.9 509.5L479.5 507.5L491.5 503.9L491.7 490.5L492 477L479.8 480.6L467.1 482.5L467 496.1ZM557.3 381.5L557.1 367.9L547.2 375.5L547.4 389.2ZM576.8 366.4L586.3 359L586.2 345.6L576.7 352.9ZM595.6 351.7L595.6 338.4L586.2 345.6L586.3 359ZM557.3 381.5L567.1 373.9L567 360.3L557.1 367.9ZM576.8 366.4L576.7 352.9L567 360.3L567.1 373.9ZM614 337.5L623 330.5L623.1 317.3L614.1 324.2ZM631.8 323.6L632 310.5L623.1 317.3L623 330.5ZM595.6 351.7L604.9 344.5L604.9 331.3L595.6 338.4ZM614 337.5L614.1 324.2L604.9 331.3L604.9 344.5ZM649.2 310.1L657.6 303.6L657.9 290.6L649.4 297.2ZM666 297L666.4 284.2L657.9 290.6L657.6 303.6ZM631.8 323.6L640.5 316.8L640.8 303.8L632 310.5ZM649.2 310.1L649.4 297.2L640.8 303.8L640.5 316.8ZM682.4 284.3L690.5 278L690.9 265.4L682.8 271.5ZM698.4 271.9L698.9 259.2L690.9 265.4L690.5 278ZM666 297L674.3 290.6L674.7 277.8L666.4 284.2ZM682.4 284.3L682.8 271.5L674.7 277.8L674.3 290.6Z"/>
<path fill="#7bb898" d="M488.4 676.6L499.1 671.3L499.5 660.1L488.8 665.5Z"/>
<path fill="#84c6a4" d="M181.7 152.5L170.7 157.7L179.3 157.6L190.3 152.4ZM159.6 162.9L168.2 162.9L179.3 157.6L170.7 157.7ZM203.3 142.3L192.6 147.3L201.2 147.3L211.9 142.2ZM181.7 152.5L190.3 152.4L201.2 147.3L192.6 147.3ZM224.4 132.3L213.9 137.3L222.5 137.2L232.9 132.2ZM203.3 142.3L211.9 142.2L222.5 137.2L213.9 137.3ZM244.9 122.6L234.7 127.5L243.3 127.3L253.5 122.5ZM224.4 132.3L232.9 132.2L243.3 127.3L234.7 127.5ZM264.9 113.2L255 117.9L263.5 117.7L273.5 113ZM244.9 122.6L253.5 122.5L263.5 117.7L255 117.9ZM284.5 104L274.7 108.5L283.3 108.3L293 103.7ZM264.9 113.2L273.5 113L283.3 108.3L274.7 108.5ZM303.5 94.9L294 99.4L302.6 99.1L312.1 94.6ZM284.5 104L293 103.7L302.6 99.1L294 99.4ZM322.2 86.1L312.9 90.5L321.4 90.2L330.7 85.8ZM303.5 94.9L312.1 94.6L321.4 90.2L312.9 90.5ZM322.2 86.1L330.7 85.8L339.8 81.5L331.3 81.8ZM661.6 144.8L666.5 145.6L653.1 141.7L648.2 140.8ZM726 224.1L724.8 212.8L719.3 217.9L720.6 229.5Z"/>
<path fill="#8ed6b0" d="M221.6 143.4L210.9 148.5L221.4 150.9L232.1 145.7ZM200 153.7L210.6 156.1L221.4 150.9L210.9 148.5ZM177.9 164.3L188.5 166.8L199.6 161.4L189 159ZM200 153.7L189 159L199.6 161.4L210.6 156.1ZM263.1 123.6L252.9 128.4L263.4 130.6L273.6 125.7ZM242.6 133.4L253.1 135.6L263.4 130.6L252.9 128.4ZM221.6 143.4L232.1 145.7L242.7 140.6L232.1 138.4ZM242.6 133.4L232.1 138.4L242.7 140.6L253.1 135.6ZM302.6 104.7L292.9 109.3L303.3 111.4L313 106.7ZM283.1 114L293.5 116.1L303.3 111.4L292.9 109.3ZM263.1 123.6L273.6 125.7L283.6 120.9L273.1 118.7ZM283.1 114L273.1 118.7L283.6 120.9L293.5 116.1ZM340.2 86.7L331 91.1L341.4 93L350.6 88.6ZM321.6 95.6L332 97.5L341.4 93L331 91.1ZM302.6 104.7L313 106.7L322.6 102.1L312.2 100.1ZM321.6 95.6L312.2 100.1L322.6 102.1L332 97.5ZM396 76.4L385.1 73.9L377.1 76.6L388 79.1ZM340.2 86.7L350.6 88.6L359.7 84.2L349.3 82.3ZM551 329.3L540.8 336.8L544.1 349.2L554.2 341.6ZM622 139.9L635.7 143.8L642.3 141.6L628.6 137.7Z"/>
<path fill="#111413" d="M111.3 491.6L109.8 480.6L106.2 474.8L107.7 485.8ZM108.2 469.5L104.6 463.7L106.2 474.8L109.8 480.6ZM108.2 469.5L106.7 458.3L103.1 452.5L104.6 463.7ZM105.1 447L101.5 441.2L103.1 452.5L106.7 458.3ZM102 424L100.4 412.4L96.7 406.8L98.3 418.3ZM98.8 400.7L95.1 395L96.7 406.8L100.4 412.4ZM105.1 447L103.6 435.6L99.9 429.8L101.5 441.2ZM102 424L98.3 418.3L99.9 429.8L103.6 435.6ZM98.8 400.7L97.1 388.8L93.5 383.2L95.1 395ZM95.5 376.8L91.8 371.3L93.5 383.2L97.1 388.8ZM95.5 376.8L93.8 364.8L90.2 359.3L91.8 371.3ZM92.2 352.6L88.5 347.1L90.2 359.3L93.8 364.8ZM88.8 327.9L87 315.3L83.3 310L85.1 322.5ZM85.3 302.7L81.6 297.4L83.3 310L87 315.3ZM92.2 352.6L90.5 340.3L86.8 334.9L88.5 347.1ZM88.8 327.9L85.1 322.5L86.8 334.9L90.5 340.3Z"/>
<path fill="#456856" d="M124.3 503.2L122.9 492.1L115.4 486.4L116.9 497.4ZM121.4 480.9L113.9 475.2L115.4 486.4L122.9 492.1ZM118.4 458.2L110.8 452.6L112.4 464L119.9 469.6ZM121.4 480.9L119.9 469.6L112.4 464L113.9 475.2ZM118.4 458.2L116.8 446.7L109.3 441.2L110.8 452.6ZM115.3 435.1L107.7 429.6L109.3 441.2L116.8 446.7ZM112.2 411.6L104.6 406.2L106.2 418L113.7 423.4ZM115.3 435.1L113.7 423.4L106.2 418L107.7 429.6ZM112.2 411.6L110.6 399.7L102.9 394.3L104.6 406.2ZM109 387.7L101.3 382.3L102.9 394.3L110.6 399.7ZM105.8 363.3L98 358L99.7 370.2L107.4 375.5ZM109 387.7L107.4 375.5L99.7 370.2L101.3 382.3ZM105.8 363.3L104.1 350.9L96.4 345.6L98 358ZM102.4 338.4L94.7 333.2L96.4 345.6L104.1 350.9ZM99.1 313L91.2 307.9L93 320.6L100.8 325.8ZM102.4 338.4L100.8 325.8L93 320.6L94.7 333.2ZM216.9 590.5L228.5 596.5L226.5 587.4L214.9 581.3ZM240.2 602.7L238.3 593.5L226.5 587.4L228.5 596.5ZM263.9 615.1L262.1 605.9L250.1 599.7L252 608.9ZM240.2 602.7L252 608.9L250.1 599.7L238.3 593.5ZM171.7 566.8L182.8 572.6L180.7 563.5L169.5 557.7ZM194.1 578.5L192 569.4L180.7 563.5L182.8 572.6ZM216.9 590.5L214.9 581.3L203.4 575.3L205.4 584.4ZM194.1 578.5L205.4 584.4L203.4 575.3L192 569.4ZM312.9 640.8L325.4 647.4L323.9 638.1L311.3 631.5ZM338.1 654L336.6 644.7L323.9 638.1L325.4 647.4ZM363.9 667.5L362.5 658.2L349.5 651.4L350.9 660.8ZM338.1 654L350.9 660.8L349.5 651.4L336.6 644.7ZM263.9 615.1L276 621.4L274.2 612.2L262.1 605.9ZM288.1 627.8L286.5 618.6L274.2 612.2L276 621.4ZM312.9 640.8L311.3 631.5L298.8 625L300.4 634.3ZM288.1 627.8L300.4 634.3L298.8 625L286.5 618.6Z"/>
<path fill="#56806a" d="M165.1 525.8L163.8 514.6L162.4 503.3L151.2 497.7L140.3 492.1L141.7 503.4L143.1 514.5L153.9 520.1ZM159.8 480.4L148.4 474.9L137.5 469.3L138.9 480.8L140.3 492.1L151.2 497.7L162.4 503.3L161.1 491.9ZM154.2 433.3L142.7 427.8L131.6 422.4L133.1 434.3L134.5 446.1L145.5 451.6L157 457.1L155.6 445.2ZM159.8 480.4L158.4 468.8L157 457.1L145.5 451.6L134.5 446.1L136 457.8L137.5 469.3L148.4 474.9ZM154.2 433.3L152.8 421.2L151.4 409L139.7 403.7L128.5 398.3L130.1 410.4L131.6 422.4L142.7 427.8ZM148.5 384.3L136.7 379L125.4 373.8L127 386.1L128.5 398.3L139.7 403.7L151.4 409L149.9 396.7ZM142.5 333.4L130.6 328.3L119.1 323.2L120.7 336L122.3 348.7L133.7 353.9L145.5 359.1L144 346.3ZM148.5 384.3L147 371.8L145.5 359.1L133.7 353.9L122.3 348.7L123.9 361.3L125.4 373.8L136.7 379ZM94.5 262.3L86.7 257.7L87 269.8L94.8 274.6Z"/>
<path fill="#4d7460" d="M118.4 458.2L119.9 469.6L128.8 475.2L127.3 463.8ZM121.4 480.9L130.3 486.5L128.8 475.2L119.9 469.6ZM124.3 503.2L133.2 508.8L131.7 497.7L122.9 492.1ZM121.4 480.9L122.9 492.1L131.7 497.7L130.3 486.5ZM112.2 411.6L113.7 423.4L122.8 428.9L121.3 417ZM115.3 435.1L124.3 440.6L122.8 428.9L113.7 423.4ZM118.4 458.2L127.3 463.8L125.8 452.3L116.8 446.7ZM115.3 435.1L116.8 446.7L125.8 452.3L124.3 440.6ZM105.8 363.3L107.4 375.5L116.6 380.8L115 368.5ZM109 387.7L118.2 393L116.6 380.8L107.4 375.5ZM112.2 411.6L121.3 417L119.7 405.1L110.6 399.7ZM109 387.7L110.6 399.7L119.7 405.1L118.2 393ZM99.1 313L100.8 325.8L110.1 330.9L108.5 318.1ZM102.4 338.4L111.8 343.6L110.1 330.9L100.8 325.8ZM105.8 363.3L115 368.5L113.4 356.1L104.1 350.9ZM102.4 338.4L104.1 350.9L113.4 356.1L111.8 343.6Z"/>
<path fill="#7cba9a" d="M510.1 642L510.4 630.2L510.7 618.4L500.3 624.8L489.4 630.1L489.2 642L489 653.8L499.7 648.5ZM511.3 594.3L500.8 600.7L489.8 605.9L489.6 618.1L489.4 630.1L500.3 624.8L510.7 618.4L511 606.4ZM511.3 594.3L511.6 582.1L512 569.7L501.3 576L490.2 581.2L490 593.6L489.8 605.9L500.8 600.7ZM512.6 544.6L501.9 550.9L490.6 556L490.4 568.7L490.2 581.2L501.3 576L512 569.7L512.3 557.2ZM512.6 544.6L512.9 531.8L513.3 518.9L502.4 525.2L491.1 530.2L490.8 543.2L490.6 556L501.9 550.9ZM514 492.8L503 498.9L491.5 503.9L491.3 517.1L491.1 530.2L502.4 525.2L513.3 518.9L513.6 505.9ZM514 492.8L514.3 479.4L514.7 466L503.6 472.1L492 477L491.7 490.5L491.5 503.9L503 498.9ZM515.4 438.6L504.1 444.6L492.4 449.5L492.2 463.3L492 477L503.6 472.1L514.7 466L515 452.4ZM467.3 454.9L480.1 453L480.3 439L467.4 440.9ZM467.4 426.9L467.4 413.2L453.9 413.1L453.9 426.9ZM698.4 271.9L706.3 265.8L706.8 253.2L698.9 259.2Z"/>
<path fill="#78b494" d="M548 609.5L548.5 597.9L549 586.1L539.8 594.6L530.4 603L530 614.8L529.6 626.5L538.9 618ZM550 562.3L540.7 570.8L531.2 579.1L530.8 591.1L530.4 603L539.8 594.6L549 586.1L549.5 574.3ZM552.1 513.3L542.6 521.5L532.9 529.7L532.5 542.2L532.1 554.6L541.6 546.4L551 538.1L551.5 525.7ZM550 562.3L550.5 550.3L551 538.1L541.6 546.4L532.1 554.6L531.6 566.9L531.2 579.1L540.7 570.8ZM552.1 513.3L552.6 500.7L553.1 488L543.6 496.1L533.8 504.2L533.3 517L532.9 529.7L542.6 521.5ZM554.2 462.2L544.5 470.2L534.7 478.2L534.2 491.2L533.8 504.2L543.6 496.1L553.1 488L553.6 475.1ZM556.4 408.9L546.6 416.7L536.5 424.4L536 438.1L535.6 451.6L545.6 443.7L555.3 435.8L555.9 422.4ZM554.2 462.2L554.7 449L555.3 435.8L545.6 443.7L535.6 451.6L535.1 464.9L534.7 478.2L544.5 470.2Z"/>
<path fill="#79b696" d="M511.3 594.3L511 606.4L510.7 618.4L520.7 611L530.4 603L530.8 591.1L531.2 579.1L521.5 587ZM510.1 642L520 634.6L529.6 626.5L530 614.8L530.4 603L520.7 611L510.7 618.4L510.4 630.2ZM512.6 544.6L512.3 557.2L512 569.7L522.2 562.5L532.1 554.6L532.5 542.2L532.9 529.7L522.9 537.4ZM511.3 594.3L521.5 587L531.2 579.1L531.6 566.9L532.1 554.6L522.2 562.5L512 569.7L511.6 582.1ZM514 492.8L513.6 505.9L513.3 518.9L523.7 511.9L533.8 504.2L534.2 491.2L534.7 478.2L524.5 485.8ZM512.6 544.6L522.9 537.4L532.9 529.7L533.3 517L533.8 504.2L523.7 511.9L513.3 518.9L512.9 531.8ZM515.4 438.6L515 452.4L514.7 466L525.3 459.1L535.6 451.6L536 438.1L536.5 424.4L526.1 431.8ZM514 492.8L524.5 485.8L534.7 478.2L535.1 464.9L535.6 451.6L525.3 459.1L514.7 466L514.3 479.4ZM322.2 86.1L331.3 81.8L324 83.6L314.8 87.9ZM340.2 77.8L332.9 79.6L324 83.6L331.3 81.8ZM557.3 381.5L547.4 389.2L547.1 403L557 395.2ZM536.5 424.4L537 410.6L526.6 418L526.1 431.8ZM698.4 271.9L697.5 284.6L705.3 278.5L706.3 265.8ZM725.7 248.3L726.3 236L720.8 241.5L720.3 254Z"/>
<path fill="#8acfab" d="M358.2 78.3L348.7 77.4L339.8 81.5L349.3 82.3ZM432.9 80.5L421.3 77.3L414.7 77.7L426.4 81ZM124 226.2L119.6 236.6L131.3 241.1L135.7 230.7ZM505 100.7L492.7 97.3L486.3 97.8L498.6 101.2ZM480.5 93.9L474.1 94.4L486.3 97.8L492.7 97.3ZM529.9 107.7L517.4 104.2L511.1 104.7L523.6 108.3ZM505 100.7L498.6 101.2L511.1 104.7L517.4 104.2ZM456.5 87.1L444.7 83.8L438.1 84.3L450 87.6ZM432.9 80.5L426.4 81L438.1 84.3L444.7 83.8ZM480.5 93.9L468.4 90.5L462 91L474.1 94.4ZM456.5 87.1L450 87.6L462 91L468.4 90.5ZM607.6 129.4L594.3 125.7L588.3 126.4L601.6 130.1ZM581.2 122L575.1 122.7L588.3 126.4L594.3 125.7ZM634.5 137L621 133.2L615.1 133.9L628.6 137.7ZM607.6 129.4L601.6 130.1L615.1 133.9L621 133.2ZM555.3 114.8L542.5 111.2L536.3 111.8L549.1 115.4ZM529.9 107.7L523.6 108.3L536.3 111.8L542.5 111.2ZM581.2 122L568.2 118.4L562.1 119L575.1 122.7ZM555.3 114.8L549.1 115.4L562.1 119L568.2 118.4ZM686.3 153.7L696.8 159L700.7 159.6L690.7 154.5Z"/>
<path fill="#83c6a3" d="M340.2 77.8L331.3 81.8L339.8 81.5L348.7 77.4Z"/>
<path fill="#88cca9" d="M374.8 72.2L365.4 71.4L357.3 74L366.8 74.8ZM410 74.3L399.2 71.9L392.5 72.3L403.4 74.7ZM535.9 369.6L533.9 356.6L523.4 363.8L525.4 376.8Z"/>
<path fill="#81c2a0" d="M357 71.9L348.8 74.4L357.3 74L365.4 71.4ZM389 70.3L379.7 69.7L372.9 70L382.3 70.6ZM104 218.8L96.5 216.2L92.4 225.5L99.7 228.6ZM492.7 421.6L504.6 416.7L504.3 402.9L492.5 407.8ZM556.2 354.5L546.2 362.1L547.2 375.5L557.1 367.9ZM535.9 369.6L536.9 383.1L547.2 375.5L546.2 362.1ZM440.2 398L453.9 399.8L454 387L440.8 385.1ZM356.3 342.2L371.2 348.1L374.7 335.8L359.8 330ZM726 224.1L730.1 219L728.7 208.1L724.8 212.8Z"/>
<path fill="#83c5a2" d="M340.2 77.8L348.7 77.4L357.3 74L348.8 74.4ZM432.9 80.5L438.6 81.7L427.1 78.4L421.3 77.3Z"/>
<path fill="#92dcb5" d="M384.9 97.8L393.9 93.3L402.7 89.1L391 85.7L379.5 82.6L370.7 86.8L361.6 91.2L373.1 94.4ZM488.2 369.7L490.5 381.6L501.7 376.6L498.9 364.4ZM364.6 318.5L379.5 324.2L385.9 313.6L370.9 307.9ZM649.4 147.9L642.2 151.4L655.5 155.8L662.6 152.3Z"/>
<path fill="#90dab4" d="M379.5 82.6L391 85.7L399.4 82.2L388 79.1ZM466.9 96.2L454.8 92.8L442.8 89.4L434.9 92.2L426.6 95.9L438.6 99.4L450.8 102.9L459.1 99.1ZM419.1 82.7L411.2 85.5L402.7 89.1L414.6 92.5L426.6 95.9L434.9 92.2L442.8 89.4L430.9 86ZM516.6 110.2L504 106.7L491.5 103.1L483.8 106.1L475.6 110L488.2 113.6L500.8 117.2L509 113.3ZM466.9 96.2L459.1 99.1L450.8 102.9L463.2 106.4L475.6 110L483.8 106.1L491.5 103.1L479.2 99.6ZM568.3 124.8L555.2 121.1L542.2 117.4L534.6 120.6L526.6 124.6L539.6 128.3L552.8 132.1L560.8 128ZM516.6 110.2L509 113.3L500.8 117.2L513.6 120.9L526.6 124.6L534.6 120.6L542.2 117.4L529.3 113.8ZM622 139.9L608.3 136.1L594.9 132.3L587.5 135.6L579.6 139.8L593.2 143.7L606.9 147.6L614.7 143.3ZM568.3 124.8L560.8 128L552.8 132.1L566.1 135.9L579.6 139.8L587.5 135.6L594.9 132.3L581.5 128.5Z"/>
<path fill="#91dbb4" d="M402.7 89.1L411.2 85.5L399.4 82.2L391 85.7Z"/>
<path fill="#8cd2ad" d="M374.8 72.2L366.8 74.8L377.1 76.6L385.1 73.9Z"/>
<path fill="#8ed5b0" d="M358.2 78.3L349.3 82.3L359.7 84.2L368.6 80.1ZM419.1 82.7L426.4 81L414.7 77.7L407.4 79.4ZM466.9 96.2L479.2 99.6L486.3 97.8L474.1 94.4ZM491.5 103.1L498.6 101.2L486.3 97.8L479.2 99.6ZM516.6 110.2L523.6 108.3L511.1 104.7L504 106.7ZM491.5 103.1L504 106.7L511.1 104.7L498.6 101.2ZM419.1 82.7L430.9 86L438.1 84.3L426.4 81ZM442.8 89.4L450 87.6L438.1 84.3L430.9 86ZM466.9 96.2L474.1 94.4L462 91L454.8 92.8ZM442.8 89.4L454.8 92.8L462 91L450 87.6ZM608.8 286.9L599.5 293.7L602.5 305.7L611.7 298.8ZM590.1 300.6L593.1 312.7L602.5 305.7L599.5 293.7ZM626.9 273.5L617.9 280.2L620.8 292L629.8 285.3ZM608.8 286.9L611.7 298.8L620.8 292L617.9 280.2ZM570.8 314.7L561 322L564.2 334.2L574 326.9ZM551 329.3L554.2 341.6L564.2 334.2L561 322ZM590.1 300.6L580.5 307.6L583.6 319.7L593.1 312.7ZM570.8 314.7L574 326.9L583.6 319.7L580.5 307.6ZM568.3 124.8L581.5 128.5L588.3 126.4L575.1 122.7ZM594.9 132.3L601.6 130.1L588.3 126.4L581.5 128.5ZM622 139.9L628.6 137.7L615.1 133.9L608.3 136.1ZM594.9 132.3L608.3 136.1L615.1 133.9L601.6 130.1ZM516.6 110.2L529.3 113.8L536.3 111.8L523.6 108.3ZM542.2 117.4L549.1 115.4L536.3 111.8L529.3 113.8ZM568.3 124.8L575.1 122.7L562.1 119L555.2 121.1ZM542.2 117.4L555.2 121.1L562.1 119L549.1 115.4ZM678.5 235.7L670.2 241.8L672.9 253.2L681.1 247.1ZM661.8 248L664.5 259.5L672.9 253.2L670.2 241.8ZM694.8 223.7L686.7 229.7L689.3 241L697.3 235ZM678.5 235.7L681.1 247.1L689.3 241L686.7 229.7ZM644.6 260.6L635.8 267L638.7 278.7L647.4 272.2ZM626.9 273.5L629.8 285.3L638.7 278.7L635.8 267ZM661.8 248L653.3 254.2L656 265.8L664.5 259.5ZM644.6 260.6L647.4 272.2L656 265.8L653.3 254.2ZM686.3 153.7L674.5 149L668.9 149.9L681.1 154.7ZM694.8 223.7L697.3 235L705.3 229.1L702.7 217.9Z"/>
<path fill="#80c1a0" d="M410 74.3L415.8 75.5L405 73.1L399.2 71.9ZM217 287.3L230.2 292.5L233.3 280.8L220.1 275.6ZM243.6 297.8L246.8 286L233.3 280.8L230.2 292.5ZM191 277L203.9 282.1L207 270.5L194 265.5ZM217 287.3L220.1 275.6L207 270.5L203.9 282.1ZM140.7 257.2L153 262L156 250.7L143.6 245.9ZM165.5 267L168.5 255.6L156 250.7L153 262ZM165.5 267L178.2 272L181.2 260.5L168.5 255.6ZM191 277L194 265.5L181.2 260.5L178.2 272ZM594.9 325.3L585.4 332.5L586.2 345.6L595.6 338.4ZM575.8 339.7L576.7 352.9L586.2 345.6L585.4 332.5ZM556.2 354.5L557.1 367.9L567 360.3L566.1 347.1ZM575.8 339.7L566.1 347.1L567 360.3L576.7 352.9ZM631.4 297.7L622.5 304.5L623.1 317.3L632 310.5ZM613.4 311.3L614.1 324.2L623.1 317.3L622.5 304.5ZM594.9 325.3L595.6 338.4L604.9 331.3L604.2 318.3ZM613.4 311.3L604.2 318.3L604.9 331.3L614.1 324.2ZM327.1 330.7L341.6 336.4L345.1 324.2L330.5 318.6ZM356.3 342.2L359.8 330L345.1 324.2L341.6 336.4ZM298.6 319.5L312.8 325.1L316.2 313L302 307.5ZM327.1 330.7L330.5 318.6L316.2 313L312.8 325.1ZM243.6 297.8L257.1 303.1L260.3 291.3L246.8 286ZM270.8 308.5L274 296.6L260.3 291.3L257.1 303.1ZM270.8 308.5L284.6 313.9L287.9 302L274 296.6ZM298.6 319.5L302 307.5L287.9 302L284.6 313.9ZM665.9 271.6L657.5 278L657.9 290.6L666.4 284.2ZM648.9 284.5L649.4 297.2L657.9 290.6L657.5 278ZM631.4 297.7L632 310.5L640.8 303.8L640.2 291ZM648.9 284.5L640.2 291L640.8 303.8L649.4 297.2ZM698.6 246.9L690.6 253L690.9 265.4L698.9 259.2ZM682.5 259.1L682.8 271.5L690.9 265.4L690.6 253ZM665.9 271.6L666.4 284.2L674.7 277.8L674.3 265.3ZM682.5 259.1L674.3 265.3L674.7 277.8L682.8 271.5ZM467.1 399.8L453.9 399.8L453.9 413.1L467.4 413.2ZM698.6 246.9L698.9 259.2L706.8 253.2L706.5 240.9Z"/>
<path fill="#89cfab" d="M374.8 72.2L385.1 73.9L392.5 72.3L382.3 70.6Z"/>
<path fill="#8cd2ae" d="M396 76.4L403.4 74.7L392.5 72.3L385.1 73.9ZM491.8 394.4L490.5 381.6L478.8 385.3L479.7 397.9Z"/>
<path fill="#7ebe9d" d="M357 71.9L365.4 71.4L372.9 70L364.6 70.5ZM492.7 421.6L492.7 435.5L504.4 430.7L504.6 416.7ZM515.9 410.8L526.7 404.1L526.4 390.3L515.6 397ZM728.4 194.3L730.9 203.8L731.2 199.5L728.7 190.8Z"/>
<path fill="#151a17" d="M85.3 302.7L83.5 289.9L79.8 284.7L81.6 297.4Z"/>
<path fill="#1e2a24" d="M82 277.2L78.3 272.1L79.8 284.7L83.5 289.9Z"/>
<path fill="#466957" d="M99.1 313L97.4 300.1L89.5 295.1L91.2 307.9Z"/>
<path fill="#496d5a" d="M95.9 287.3L88 282.3L89.5 295.1L97.4 300.1ZM80.9 253.1L81.9 242.2L78.4 238L77.3 248.4Z"/>
<path fill="#3b5949" d="M82 277.2L83.5 289.9L89.5 295.1L88 282.3Z"/>
<path fill="#385345" d="M85.3 302.7L91.2 307.9L89.5 295.1L83.5 289.9Z"/>
<path fill="#4b715d" d="M80.9 253.1L81.1 264.9L87 269.8L86.7 257.7Z"/>
<path fill="#426352" d="M82 277.2L88 282.3L87 269.8L81.1 264.9Z"/>
<path fill="#2b3f35" d="M82 277.2L81.1 264.9L77.4 259.9L78.3 272.1Z"/>
<path fill="#3a5647" d="M80.9 253.1L77.3 248.4L77.4 259.9L81.1 264.9Z"/>
<path fill="#59856e" d="M139.7 307.3L127.6 302.2L129 315.3L141 320.3ZM164.2 317.5L151.9 312.4L153.1 325.5L165.4 330.7ZM139.7 307.3L141 320.3L153.1 325.5L151.9 312.4ZM189.2 327.9L176.6 322.7L177.8 335.9L190.4 341.2ZM164.2 317.5L165.4 330.7L177.8 335.9L176.6 322.7ZM241 349.5L227.9 344L228.8 357.4L241.9 363ZM214.9 338.6L215.9 352L228.8 357.4L227.9 344ZM214.9 338.6L202 333.2L203 346.6L215.9 352ZM189.2 327.9L190.4 341.2L203 346.6L202 333.2ZM267.8 360.7L254.4 355.1L255.2 368.6L268.6 374.2ZM241 349.5L241.9 363L255.2 368.6L254.4 355.1ZM295.2 372.1L281.5 366.4L282.2 380L295.9 385.8ZM267.8 360.7L268.6 374.2L282.2 380L281.5 366.4ZM352 395.8L337.6 389.8L338 403.5L352.3 409.6ZM323.3 383.8L323.8 397.5L338 403.5L337.6 389.8ZM323.3 383.8L309.2 377.9L309.7 391.6L323.8 397.5ZM295.2 372.1L295.9 385.8L309.7 391.6L309.2 377.9Z"/>
<path fill="#62937a" d="M114.7 271.7L115 284.4L126.6 289.3L126.3 276.6Z"/>
<path fill="#5c8a72" d="M116 297.3L127.6 302.2L126.6 289.3L115 284.4ZM94.5 262.3L94.8 274.6L104.3 279.5L103.9 266.9ZM441.4 699.9L441 691L428.3 687.8L429 696.9Z"/>
<path fill="#5d8b73" d="M139.7 307.3L138.7 294.3L126.6 289.3L127.6 302.2ZM85.7 213.1L87.5 208.5L84 213.1L82.6 217.6ZM381.3 407.8L381.5 421.7L396.2 427.3L396.1 413.4Z"/>
<path fill="#557f69" d="M95.9 287.3L105.3 292.3L104.3 279.5L94.8 274.6ZM116 297.3L105.3 292.3L106.8 305.2L117.5 310.2Z"/>
<path fill="#609077" d="M114.7 271.7L103.9 266.9L104.3 279.5L115 284.4ZM687 513.1L684.1 521.1L690.2 514.3L693.1 506.3Z"/>
<path fill="#4e7560" d="M99.1 313L108.5 318.1L106.8 305.2L97.4 300.1Z"/>
<path fill="#537c66" d="M119.1 323.2L117.5 310.2L106.8 305.2L108.5 318.1Z"/>
<path fill="#7fc09e" d="M116.8 247.7L128.4 252.3L131.3 241.1L119.6 236.6Z"/>
<path fill="#80c19f" d="M140.7 257.2L143.6 245.9L131.3 241.1L128.4 252.3ZM467.4 426.9L480.4 425L480.2 411.3L467.4 413.2ZM713.9 235.1L706.5 240.9L706.8 253.2L714.2 247.3Z"/>
<path fill="#85c9a6" d="M104 218.8L99.7 228.6L109 232.3L113.3 222.2ZM491.8 394.4L492.5 407.8L504.3 402.9L503.4 389.5ZM711.9 167.3L709.1 165.1L715.7 170.8L717.7 172.4ZM415.1 364.6L418.3 352.5L404.2 347.1L400.7 359.4ZM713.9 235.1L720.6 229.5L719.3 217.9L712.7 223.4Z"/>
<path fill="#7ebd9c" d="M116.8 247.7L119.6 236.6L109 232.3L106.1 243.3Z"/>
<path fill="#88cda9" d="M124 226.2L113.3 222.2L109 232.3L119.6 236.6ZM441.9 372.9L440.8 385.1L454 387L454.3 375.2Z"/>
<path fill="#70a88b" d="M96.8 239.2L95.1 250.4L104.5 254.8L106.1 243.3ZM83.9 232.1L89.4 235.5L92.4 225.5L87 222.9ZM440.7 658L440.7 669.7L453.5 671.4L453.5 659.7ZM440.6 634.2L440.6 646.2L453.5 647.9L453.5 636ZM440.7 658L453.5 659.7L453.5 647.9L440.6 646.2ZM440.5 610L440.6 622.2L453.5 623.9L453.6 611.7ZM440.6 634.2L453.5 636L453.5 623.9L440.6 622.2ZM440.3 560L440.4 572.7L453.6 574.4L453.6 561.7ZM440.4 585.3L453.6 587L453.6 574.4L440.4 572.7ZM440.4 585.3L440.5 597.7L453.6 599.4L453.6 587ZM440.5 610L453.6 611.7L453.6 599.4L440.5 597.7ZM440.2 534.2L440.2 547.2L453.7 548.9L453.7 535.9ZM440.3 560L453.6 561.7L453.7 548.9L440.2 547.2ZM440.1 507.9L440.1 521.1L453.7 522.8L453.7 509.5ZM440.2 534.2L453.7 535.9L453.7 522.8L440.1 521.1ZM439.9 453.4L439.9 467.2L453.8 468.8L453.8 455ZM440 480.9L453.8 482.5L453.8 468.8L439.9 467.2ZM440 480.9L440 494.5L453.7 496.1L453.8 482.5ZM440.1 507.9L453.7 509.5L453.7 496.1L440 494.5Z"/>
<path fill="#6ba286" d="M138.4 281.5L139 269.1L126.8 264.2L126.3 276.6ZM672.9 527.1L680.1 520L682.3 510.9L675 517.9Z"/>
<path fill="#75b192" d="M140.7 257.2L128.4 252.3L126.8 264.2L139 269.1ZM695.2 450.8L694.1 461.8L700.3 455.2L701.4 444.2ZM693 472.7L699.2 466.1L700.3 455.2L694.1 461.8ZM697.4 428.4L696.3 439.6L702.6 433.1L703.7 421.8ZM695.2 450.8L701.4 444.2L702.6 433.1L696.3 439.6ZM699.6 405.6L698.5 417L704.8 410.5L705.9 399.1ZM697.4 428.4L703.7 421.8L704.8 410.5L698.5 417ZM701.9 382.4L700.7 394L707.1 387.6L708.3 376ZM699.6 405.6L705.9 399.1L707.1 387.6L700.7 394ZM704.2 358.7L703 370.6L709.4 364.3L710.6 352.5ZM701.9 382.4L708.3 376L709.4 364.3L703 370.6ZM706.6 334.6L705.4 346.7L711.8 340.5L713 328.5ZM704.2 358.7L710.6 352.5L711.8 340.5L705.4 346.7ZM709 310.1L707.8 322.4L714.2 316.3L715.5 304.1ZM706.6 334.6L713 328.5L714.2 316.3L707.8 322.4ZM711.4 285.1L710.2 297.7L716.7 291.7L718 279.2ZM709 310.1L715.5 304.1L716.7 291.7L710.2 297.7Z"/>
<path fill="#75af91" d="M116.8 247.7L115.2 259.4L126.8 264.2L128.4 252.3Z"/>
<path fill="#6ba084" d="M114.7 271.7L126.3 276.6L126.8 264.2L115.2 259.4ZM96.8 239.2L89.4 235.5L87.5 246.3L95.1 250.4Z"/>
<path fill="#66997f" d="M85.7 213.1L82.6 217.6L83.7 220.6L87.3 213.4Z"/>
<path fill="#58846d" d="M79.6 224.7L80.6 228.6L83.7 220.6L82.6 217.6Z"/>
<path fill="#66997e" d="M83.9 232.1L87 222.9L83.7 220.6L80.6 228.6ZM708.2 468.2L705.9 474.4L704.2 484.2L706.5 477.9Z"/>
<path fill="#2f463a" d="M76.2 243.6L77.3 248.4L78.4 238L77.4 233.4ZM419.7 706.4L431.6 710L430 704.3L417.6 700.3Z"/>
<path fill="#58836d" d="M83.9 232.1L80.6 228.6L78.4 238L81.9 242.2ZM388.1 661.3L401.5 667.5L401.1 656.3L387.7 650.1Z"/>
<path fill="#466856" d="M79.6 224.7L77.4 233.4L78.4 238L80.6 228.6ZM363.9 667.5L377 674.4L375.7 665.1L362.5 658.2Z"/>
<path fill="#5f8f76" d="M94.5 262.3L95.1 250.4L87.5 246.3L86.7 257.7Z"/>
<path fill="#57826c" d="M80.9 253.1L86.7 257.7L87.5 246.3L81.9 242.2ZM142.5 333.4L154.6 338.6L153.1 325.5L141 320.3ZM166.8 343.8L165.4 330.7L153.1 325.5L154.6 338.6ZM191.7 354.4L190.4 341.2L177.8 335.9L179.2 349.1ZM166.8 343.8L179.2 349.1L177.8 335.9L165.4 330.7ZM243 376.4L241.9 363L228.8 357.4L230 370.8ZM217.1 365.3L230 370.8L228.8 357.4L215.9 352ZM191.7 354.4L204.3 359.8L203 346.6L190.4 341.2ZM217.1 365.3L215.9 352L203 346.6L204.3 359.8ZM243 376.4L256.2 382L255.2 368.6L241.9 363ZM269.5 387.7L268.6 374.2L255.2 368.6L256.2 382ZM296.7 399.3L295.9 385.8L282.2 380L283 393.5ZM269.5 387.7L283 393.5L282.2 380L268.6 374.2ZM352.9 423.4L352.3 409.6L338 403.5L338.6 417.3ZM324.5 411.2L338.6 417.3L338 403.5L323.8 397.5ZM296.7 399.3L310.5 405.2L309.7 391.6L295.9 385.8ZM324.5 411.2L323.8 397.5L309.7 391.6L310.5 405.2Z"/>
<path fill="#476b58" d="M79.6 224.7L82.6 217.6L84 213.1L81 219.8ZM390.1 681.1L388.9 671.7L375.7 665.1L377 674.4Z"/>
<path fill="#7fbf9d" d="M492.7 421.6L480.4 425L480.3 439L492.7 435.5ZM415.1 364.6L413 377.4L427.1 381.7L428.8 369.2Z"/>
<path fill="#80c09f" d="M515.9 410.8L515.6 397L504.3 402.9L504.6 416.7Z"/>
<path fill="#81c3a1" d="M492.7 421.6L492.5 407.8L480.2 411.3L480.4 425ZM386 353.9L389.6 341.5L374.7 335.8L371.2 348.1Z"/>
<path fill="#86caa6" d="M491.8 394.4L479.7 397.9L480.2 411.3L492.5 407.8Z"/>
<path fill="#77b495" d="M556.4 408.9L557 395.2L547.1 403L546.6 416.7Z"/>
<path fill="#83c5a3" d="M514.6 383.5L515.6 397L526.4 390.3L525.4 376.8ZM505 100.7L517.4 104.2L522.8 105.2L510.4 101.8ZM529.9 107.7L535.3 108.7L522.8 105.2L517.4 104.2ZM480.5 93.9L492.7 97.3L498.2 98.3L486.1 94.9ZM505 100.7L510.4 101.8L498.2 98.3L492.7 97.3ZM432.9 80.5L444.7 83.8L450.3 84.9L438.6 81.7ZM456.5 87.1L462.1 88.2L450.3 84.9L444.7 83.8ZM456.5 87.1L468.4 90.5L474 91.6L462.1 88.2ZM480.5 93.9L486.1 94.9L474 91.6L468.4 90.5ZM607.6 129.4L621 133.2L626 134.1L612.7 130.4ZM634.5 137L639.5 137.9L626 134.1L621 133.2ZM581.2 122L594.3 125.7L599.5 126.7L586.4 123ZM607.6 129.4L612.7 130.4L599.5 126.7L594.3 125.7ZM529.9 107.7L542.5 111.2L547.9 112.2L535.3 108.7ZM555.3 114.8L560.6 115.8L547.9 112.2L542.5 111.2ZM555.3 114.8L568.2 118.4L573.4 119.4L560.6 115.8ZM581.2 122L586.4 123L573.4 119.4L568.2 118.4ZM634.5 137L648.2 140.8L653.1 141.7L639.5 137.9ZM441.9 372.9L428.8 369.2L427.1 381.7L440.8 385.1ZM386 353.9L400.7 359.4L404.2 347.1L389.6 341.5Z"/>
<path fill="#82c3a1" d="M535.9 369.6L525.4 376.8L526.4 390.3L536.9 383.1Z"/>
<path fill="#9beac1" d="M539.6 307.1L529.3 314.4L536 325.1L546.2 317.7ZM519 321.7L525.7 332.5L536 325.1L529.3 314.4ZM616.4 252.5L607.2 259L613.5 269.1L622.5 262.5ZM598 265.6L604.3 275.7L613.5 269.1L607.2 259ZM579.1 279L585.5 289.3L594.9 282.5L588.6 272.2ZM598 265.6L588.6 272.2L594.9 282.5L604.3 275.7ZM539.6 307.1L546.2 317.7L556.2 310.5L549.7 299.9ZM559.6 292.9L549.7 299.9L556.2 310.5L566.1 303.3ZM579.1 279L569.4 285.9L575.9 296.3L585.5 289.3ZM559.6 292.9L566.1 303.3L575.9 296.3L569.4 285.9ZM684.9 203.7L676.7 209.5L682.6 219.1L690.7 213.3ZM668.5 215.4L674.4 225.1L682.6 219.1L676.7 209.5ZM651.6 227.4L657.6 237.2L666 231.1L660.1 221.4ZM668.5 215.4L660.1 221.4L666 231.1L674.4 225.1ZM616.4 252.5L622.5 262.5L631.5 256.1L625.4 246.1ZM634.2 239.8L625.4 246.1L631.5 256.1L640.3 249.7ZM651.6 227.4L643 233.6L649 243.4L657.6 237.2ZM634.2 239.8L640.3 249.7L649 243.4L643 233.6ZM436.7 321.2L449.6 327.4L458.3 318.9L445.3 312.4ZM499.9 303.6L510.3 296.3L498.4 288.7L488 295.9ZM712.9 183.6L705.6 175.7L699.8 179.6L707.3 187.7ZM684.9 203.7L690.7 213.3L698.7 207.5L692.9 198Z"/>
<path fill="#95e1ba" d="M530.5 344.2L540.8 336.8L536 325.1L525.7 332.5ZM408.3 309.5L393.4 303.8L385.9 313.6L400.7 319.3Z"/>
<path fill="#95e1b9" d="M551 329.3L546.2 317.7L536 325.1L540.8 336.8ZM608.8 286.9L617.9 280.2L613.5 269.1L604.3 275.7ZM626.9 273.5L622.5 262.5L613.5 269.1L617.9 280.2ZM590.1 300.6L599.5 293.7L594.9 282.5L585.5 289.3ZM608.8 286.9L604.3 275.7L594.9 282.5L599.5 293.7ZM551 329.3L561 322L556.2 310.5L546.2 317.7ZM570.8 314.7L566.1 303.3L556.2 310.5L561 322ZM570.8 314.7L580.5 307.6L575.9 296.3L566.1 303.3ZM590.1 300.6L585.5 289.3L575.9 296.3L580.5 307.6ZM678.5 235.7L686.7 229.7L682.6 219.1L674.4 225.1ZM694.8 223.7L690.7 213.3L682.6 219.1L686.7 229.7ZM661.8 248L670.2 241.8L666 231.1L657.6 237.2ZM678.5 235.7L674.4 225.1L666 231.1L670.2 241.8ZM626.9 273.5L635.8 267L631.5 256.1L622.5 262.5ZM644.6 260.6L640.3 249.7L631.5 256.1L635.8 267ZM644.6 260.6L653.3 254.2L649 243.4L640.3 249.7ZM661.8 248L657.6 237.2L649 243.4L653.3 254.2ZM446.7 276.9L436.3 284.2L450.8 290.1L461.1 282.7ZM719.7 178.2L713.5 171.2L710.2 172.8L717 180.4Z"/>
<path fill="#9decc3" d="M498.5 336.1L504.9 346.6L515.3 339.7L508.7 329ZM700.5 192.6L707.3 187.7L699.8 179.6L692.9 184.3Z"/>
<path fill="#97e3bc" d="M509.6 358.2L520.1 351.4L515.3 339.7L504.9 346.6ZM475 289L461.1 282.7L450.8 290.1L464.7 296.4Z"/>
<path fill="#96e2bb" d="M530.5 344.2L525.7 332.5L515.3 339.7L520.1 351.4ZM495.9 274.8L482.2 268.7L471.7 275.6L485.5 281.8ZM475 289L485.5 281.8L471.7 275.6L461.1 282.7ZM495.9 274.8L506.3 267.9L492.5 261.9L482.2 268.7ZM516.4 261.2L502.8 255.2L492.5 261.9L506.3 267.9ZM536.3 247.9L522.8 242.1L512.8 248.6L526.4 254.5ZM516.4 261.2L526.4 254.5L512.8 248.6L502.8 255.2ZM536.3 247.9L546 241.4L532.5 235.7L522.8 242.1ZM555.6 235L542.2 229.3L532.5 235.7L546 241.4ZM574.4 222.5L561.1 217L551.7 223.1L565.1 228.7ZM555.6 235L565.1 228.7L551.7 223.1L542.2 229.3ZM574.4 222.5L583.6 216.4L570.3 210.9L561.1 217ZM592.7 210.4L579.4 204.9L570.3 210.9L583.6 216.4ZM610.4 198.5L597.3 193.2L588.4 199L601.6 204.4ZM592.7 210.4L601.6 204.4L588.4 199L579.4 204.9ZM610.4 198.5L619.1 192.7L606.1 187.5L597.3 193.2ZM627.7 187L614.7 181.8L606.1 187.5L619.1 192.7ZM644.6 175.8L631.6 170.7L623.2 176.2L636.2 181.4ZM627.7 187L636.2 181.4L623.2 176.2L614.7 181.8ZM675.1 157.1L668.2 160.7L680 166.2L686.5 162.6ZM712.9 183.6L718.4 192.4L722.4 188.8L717 180.4Z"/>
<path fill="#9cebc2" d="M519 321.7L508.7 329L515.3 339.7L525.7 332.5ZM499.9 303.6L488 295.9L477.7 303.3L489.6 310.9ZM683.5 177.1L692.9 184.3L699.8 179.6L690.6 172.5Z"/>
<path fill="#8fd7b1" d="M530.5 344.2L520.1 351.4L523.4 363.8L533.9 356.6Z"/>
<path fill="#abf3cd" d="M464.6 358.7L465.3 365.7L475 363.4L470.7 354.7Z"/>
<path fill="#9ae5be" d="M466.1 375.6L477.3 373.6L475 363.4L465.3 365.7Z"/>
<path fill="#9ae6be" d="M488.2 369.7L484.6 358.8L475 363.4L477.3 373.6Z"/>
<path fill="#a9f4cc" d="M479.1 349.2L470.7 354.7L475 363.4L484.6 358.8Z"/>
<path fill="#8ad0ab" d="M514.6 383.5L512.7 370.5L501.7 376.6L503.4 389.5ZM634.5 137L628.6 137.7L642.3 141.6L648.2 140.8Z"/>
<path fill="#9feec5" d="M498.5 336.1L488.5 342.9L494.6 353.1L504.9 346.6ZM461.2 333.9L449.6 327.4L442.1 336.5L453.6 342.2Z"/>
<path fill="#a2f0c8" d="M479.1 349.2L484.6 358.8L494.6 353.1L488.5 342.9Z"/>
<path fill="#99e6be" d="M488.2 369.7L498.9 364.4L494.6 353.1L484.6 358.8ZM436.7 321.2L445.3 312.4L431.4 306.3L422.8 315.3ZM475 289L488 295.9L498.4 288.7L485.5 281.8ZM696.8 168.7L686.5 162.6L680 166.2L690.6 172.5ZM712.9 183.6L717 180.4L710.2 172.8L705.6 175.7ZM712.9 183.6L707.3 187.7L712.9 196.9L718.4 192.4Z"/>
<path fill="#98e5bd" d="M509.6 358.2L504.9 346.6L494.6 353.1L498.9 364.4ZM536.3 247.9L526.4 254.5L539.2 261.1L549 254.4ZM516.4 261.2L529.2 267.8L539.2 261.1L526.4 254.5ZM495.9 274.8L508.9 281.6L519.1 274.6L506.3 267.9ZM516.4 261.2L506.3 267.9L519.1 274.6L529.2 267.8ZM574.4 222.5L565.1 228.7L577.6 235L586.9 228.7ZM555.6 235L568.2 241.4L577.6 235L565.1 228.7ZM536.3 247.9L549 254.4L558.7 247.8L546 241.4ZM555.6 235L546 241.4L558.7 247.8L568.2 241.4ZM610.4 198.5L601.6 204.4L614 210.4L622.7 204.5ZM592.7 210.4L605.1 216.4L614 210.4L601.6 204.4ZM574.4 222.5L586.9 228.7L596.1 222.5L583.6 216.4ZM592.7 210.4L583.6 216.4L596.1 222.5L605.1 216.4ZM644.6 175.8L636.2 181.4L648.3 187.1L656.6 181.5ZM627.7 187L639.9 192.8L648.3 187.1L636.2 181.4ZM610.4 198.5L622.7 204.5L631.4 198.6L619.1 192.7ZM627.7 187L619.1 192.7L631.4 198.6L639.9 192.8ZM644.6 175.8L656.6 181.5L664.8 176L652.8 170.3ZM660.7 165.2L652.8 170.3L664.8 176L672.7 170.8Z"/>
<path fill="#92dbb5" d="M148 235.4L160.4 240.2L166.6 230.6L154.2 225.9ZM173 245L179.2 235.4L166.6 230.6L160.4 240.2ZM198.5 254.8L204.7 245.1L191.9 240.2L185.7 249.9ZM173 245L185.7 249.9L191.9 240.2L179.2 235.4ZM251.4 275.1L257.6 265.1L244.2 260L237.9 269.9ZM224.7 264.8L237.9 269.9L244.2 260L230.9 254.9ZM198.5 254.8L211.5 259.8L217.7 250L204.7 245.1ZM224.7 264.8L230.9 254.9L217.7 250L211.5 259.8ZM251.4 275.1L265 280.3L271.2 270.2L257.6 265.1ZM278.7 285.5L285 275.4L271.2 270.2L265 280.3ZM306.7 296.3L312.9 286L298.9 280.7L292.6 290.9ZM278.7 285.5L292.6 290.9L298.9 280.7L285 275.4ZM364.6 318.5L370.9 307.9L356.2 302.3L349.9 312.8ZM335.3 307.2L349.9 312.8L356.2 302.3L341.6 296.8ZM306.7 296.3L320.9 301.7L327.2 291.4L312.9 286ZM335.3 307.2L341.6 296.8L327.2 291.4L320.9 301.7ZM422.9 341.1L418.3 352.5L431.7 357.4L436 346.4Z"/>
<path fill="#95e0ba" d="M230.8 220.7L217.9 216.1L205.2 211.4L195.5 218.7L186.7 226.6L199.5 231.4L212.3 236.2L221.1 228.1ZM180.2 202.3L170.5 209.5L161.7 217.3L174.2 222L186.7 226.6L195.5 218.7L205.2 211.4L192.7 206.9ZM283.6 239.9L270.1 235L256.9 230.2L247.2 237.7L238.5 246L251.8 250.9L265.2 255.9L273.9 247.6ZM230.8 220.7L221.1 228.1L212.3 236.2L225.3 241L238.5 246L247.2 237.7L256.9 230.2L243.7 225.4ZM338.8 260L324.7 254.9L310.9 249.9L301.3 257.7L292.6 266.1L306.5 271.3L320.5 276.6L329.2 268ZM283.6 239.9L273.9 247.6L265.2 255.9L278.8 261L292.6 266.1L301.3 257.7L310.9 249.9L297.1 244.9ZM396.6 281L381.9 275.7L367.4 270.4L357.9 278.5L349.2 287.3L363.8 292.7L378.5 298.2L387.2 289.3ZM338.8 260L329.2 268L320.5 276.6L334.8 281.9L349.2 287.3L357.9 278.5L367.4 270.4L353 265.2Z"/>
<path fill="#92ddb6" d="M326.5 213.8L313.2 209.2L300 204.6L289 210.6L278 216.8L291.2 221.4L304.6 226.2L315.5 219.9ZM274.1 195.6L263 201.5L251.9 207.5L264.9 212.1L278 216.8L289 210.6L300 204.6L287 200.1ZM223.9 178.2L212.7 183.8L201.6 189.6L214 194L226.5 198.5L237.6 192.6L248.8 186.8L236.3 182.5ZM274.1 195.6L261.4 191.2L248.8 186.8L237.6 192.6L226.5 198.5L239.1 203L251.9 207.5L263 201.5ZM438.5 252.6L423.9 247.5L409.5 242.6L398.8 249.1L388 255.8L402.5 260.9L417.1 266.1L427.8 259.3ZM381.2 232.8L370.4 239.1L359.6 245.7L373.7 250.7L388 255.8L398.8 249.1L409.5 242.6L395.3 237.6ZM326.5 213.8L315.5 219.9L304.6 226.2L318.1 231L331.8 235.8L342.6 229.4L353.6 223.2L340 218.5ZM381.2 232.8L367.3 227.9L353.6 223.2L342.6 229.4L331.8 235.8L345.6 240.8L359.6 245.7L370.4 239.1ZM394.4 329.9L400.7 319.3L385.9 313.6L379.5 324.2ZM590.2 157.8L604.2 161.9L618.1 166.1L626.4 160.8L634.5 155.7L620.7 151.6L606.9 147.6L598.7 152.5ZM722.3 202.2L718.4 192.4L712.9 196.9L716.9 207Z"/>
<path fill="#94deb8" d="M230.8 220.7L243.7 225.4L256.9 230.2L267.2 223.3L278 216.8L264.9 212.1L251.9 207.5L241.1 213.9ZM283.6 239.9L293.8 232.8L304.6 226.2L291.2 221.4L278 216.8L267.2 223.3L256.9 230.2L270.1 235ZM180.2 202.3L192.7 206.9L205.2 211.4L215.6 204.7L226.5 198.5L214 194L201.6 189.6L190.7 195.8ZM230.8 220.7L241.1 213.9L251.9 207.5L239.1 203L226.5 198.5L215.6 204.7L205.2 211.4L217.9 216.1ZM338.8 260L353 265.2L367.4 270.4L377.5 262.9L388 255.8L373.7 250.7L359.6 245.7L349 252.6ZM396.6 281L406.7 273.4L417.1 266.1L402.5 260.9L388 255.8L377.5 262.9L367.4 270.4L381.9 275.7ZM283.6 239.9L297.1 244.9L310.9 249.9L321.1 242.6L331.8 235.8L318.1 231L304.6 226.2L293.8 232.8ZM338.8 260L349 252.6L359.6 245.7L345.6 240.8L331.8 235.8L321.1 242.6L310.9 249.9L324.7 254.9ZM394.4 329.9L409 335.6L415.2 325L400.7 319.3ZM675.1 157.1L662.6 152.3L655.5 155.8L668.2 160.7Z"/>
<path fill="#344d40" d="M216.9 590.5L205.4 584.4L208 592.3L219.4 598.4ZM194.1 578.5L196.7 586.4L208 592.3L205.4 584.4ZM171.7 566.8L174.4 574.6L185.5 580.5L182.8 572.6ZM194.1 578.5L182.8 572.6L185.5 580.5L196.7 586.4ZM263.9 615.1L252 608.9L254.4 616.8L266.3 623.1ZM240.2 602.7L242.6 610.6L254.4 616.8L252 608.9ZM216.9 590.5L219.4 598.4L230.9 604.4L228.5 596.5ZM240.2 602.7L228.5 596.5L230.9 604.4L242.6 610.6ZM312.9 640.8L300.4 634.3L302.6 642.2L315 648.8ZM288.1 627.8L290.4 635.8L302.6 642.2L300.4 634.3ZM263.9 615.1L266.3 623.1L278.3 629.4L276 621.4ZM288.1 627.8L276 621.4L278.3 629.4L290.4 635.8ZM363.9 667.5L350.9 660.8L352.9 668.7L365.8 675.5ZM338.1 654L340.1 662L352.9 668.7L350.9 660.8ZM312.9 640.8L315 648.8L327.5 655.4L325.4 647.4ZM338.1 654L325.4 647.4L327.5 655.4L340.1 662Z"/>
<path fill="#56816a" d="M258.8 573.5L246.7 567.3L247.6 578.6L259.7 584.8ZM234.7 561.2L235.7 572.5L247.6 578.6L246.7 567.3ZM211 549.2L212.1 560.4L223.8 566.4L222.8 555.1ZM234.7 561.2L222.8 555.1L223.8 566.4L235.7 572.5ZM165.1 525.8L166.4 536.9L177.6 542.7L176.4 531.6ZM187.8 537.4L176.4 531.6L177.6 542.7L189 548.5ZM211 549.2L199.4 543.2L200.5 554.4L212.1 560.4ZM187.8 537.4L189 548.5L200.5 554.4L199.4 543.2ZM360.6 625.2L347.4 618.4L347.9 630L361 636.7ZM334.3 611.8L334.9 623.3L347.9 630L347.4 618.4ZM308.6 598.8L309.3 610.2L322.1 616.7L321.4 605.3ZM334.3 611.8L321.4 605.3L322.1 616.7L334.9 623.3ZM258.8 573.5L259.7 584.8L271.9 591L271.1 579.7ZM283.5 586L271.1 579.7L271.9 591L284.3 597.4ZM308.6 598.8L296 592.3L296.7 603.7L309.3 610.2ZM283.5 586L284.3 597.4L296.7 603.7L296 592.3Z"/>
<path fill="#537d68" d="M236.8 583.3L248.7 589.5L247.6 578.6L235.7 572.5ZM260.8 595.7L259.7 584.8L247.6 578.6L248.7 589.5ZM213.4 571.2L225 577.2L223.8 566.4L212.1 560.4ZM236.8 583.3L235.7 572.5L223.8 566.4L225 577.2ZM167.8 547.6L179 553.4L177.6 542.7L166.4 536.9ZM190.4 559.3L189 548.5L177.6 542.7L179 553.4ZM190.4 559.3L201.8 565.2L200.5 554.4L189 548.5ZM213.4 571.2L212.1 560.4L200.5 554.4L201.8 565.2ZM335.6 634.4L348.6 641.1L347.9 630L334.9 623.3ZM361.6 647.8L361 636.7L347.9 630L348.6 641.1ZM310.2 621.2L322.8 627.8L322.1 616.7L309.3 610.2ZM335.6 634.4L334.9 623.3L322.1 616.7L322.8 627.8ZM260.8 595.7L272.9 602L271.9 591L259.7 584.8ZM285.2 608.3L284.3 597.4L271.9 591L272.9 602ZM285.2 608.3L297.6 614.7L296.7 603.7L284.3 597.4ZM310.2 621.2L309.3 610.2L296.7 603.7L297.6 614.7Z"/>
<path fill="#4e7661" d="M236.8 583.3L225 577.2L226.5 587.4L238.3 593.5ZM213.4 571.2L214.9 581.3L226.5 587.4L225 577.2ZM260.8 595.7L248.7 589.5L250.1 599.7L262.1 605.9ZM236.8 583.3L238.3 593.5L250.1 599.7L248.7 589.5ZM190.4 559.3L179 553.4L180.7 563.5L192 569.4ZM167.8 547.6L169.5 557.7L180.7 563.5L179 553.4ZM213.4 571.2L201.8 565.2L203.4 575.3L214.9 581.3ZM190.4 559.3L192 569.4L203.4 575.3L201.8 565.2ZM335.6 634.4L322.8 627.8L323.9 638.1L336.6 644.7ZM310.2 621.2L311.3 631.5L323.9 638.1L322.8 627.8ZM361.6 647.8L348.6 641.1L349.5 651.4L362.5 658.2ZM335.6 634.4L336.6 644.7L349.5 651.4L348.6 641.1ZM285.2 608.3L272.9 602L274.2 612.2L286.5 618.6ZM260.8 595.7L262.1 605.9L274.2 612.2L272.9 602ZM310.2 621.2L297.6 614.7L298.8 625L311.3 631.5ZM285.2 608.3L286.5 618.6L298.8 625L297.6 614.7Z"/>
<path fill="#2a3e34" d="M555.5 650.1L546.8 658.5L542 663.7L550.7 655.2ZM538 667.1L533.2 672.3L542 663.7L546.8 658.5ZM572.5 633.4L564 641.7L559.3 646.8L567.7 638.6ZM555.5 650.1L550.7 655.2L559.3 646.8L564 641.7ZM605.3 601.4L597.3 609.2L592.5 614.4L600.5 606.6ZM589.1 617.2L584.3 622.4L592.5 614.4L597.3 609.2ZM589.1 617.2L580.9 625.3L576.1 630.4L584.3 622.4ZM572.5 633.4L567.7 638.6L576.1 630.4L580.9 625.3ZM621.1 586L613.3 593.6L608.4 598.8L616.3 591.1ZM605.3 601.4L600.5 606.6L608.4 598.8L613.3 593.6ZM636.5 570.9L628.9 578.4L624 583.6L631.7 576.1ZM621.1 586L616.3 591.1L624 583.6L628.9 578.4ZM666.3 541.9L659 549L654.1 554.2L661.4 547.1ZM651.6 556.2L646.7 561.4L654.1 554.2L659 549ZM651.6 556.2L644.1 563.5L639.3 568.7L646.7 561.4ZM636.5 570.9L631.7 576.1L639.3 568.7L644.1 563.5Z"/>
<path fill="#77b393" d="M616.7 544.8L608.5 552.5L607.8 563.8L616 556ZM600.2 560.3L599.5 571.6L607.8 563.8L608.5 552.5ZM583.3 576.3L582.7 587.6L591.1 579.6L591.8 568.3ZM600.2 560.3L591.8 568.3L591.1 579.6L599.5 571.6ZM548 609.5L547.6 621L556.5 612.5L557 601ZM565.9 592.7L557 601L556.5 612.5L565.3 604.1ZM583.3 576.3L574.7 584.4L574.1 595.8L582.7 587.6ZM565.9 592.7L565.3 604.1L574.1 595.8L574.7 584.4ZM678.8 486.4L671.4 493.4L670.4 504.4L677.8 497.4ZM663.8 500.5L662.9 511.5L670.4 504.4L671.4 493.4ZM648.5 514.9L647.6 526L655.3 518.7L656.2 507.6ZM663.8 500.5L656.2 507.6L655.3 518.7L662.9 511.5ZM616.7 544.8L616 556L624 548.4L624.8 537.2ZM632.8 529.7L624.8 537.2L624 548.4L632 540.8ZM648.5 514.9L640.7 522.2L639.9 533.3L647.6 526ZM632.8 529.7L632 540.8L639.9 533.3L640.7 522.2Z"/>
<path fill="#75b091" d="M598.6 582.5L606.9 574.6L607.8 563.8L599.5 571.6ZM615 566.9L616 556L607.8 563.8L606.9 574.6ZM581.8 598.6L590.3 590.5L591.1 579.6L582.7 587.6ZM598.6 582.5L599.5 571.6L591.1 579.6L590.3 590.5ZM546.9 632.1L555.8 623.5L556.5 612.5L547.6 621ZM564.6 615.1L565.3 604.1L556.5 612.5L555.8 623.5ZM564.6 615.1L573.3 606.8L574.1 595.8L565.3 604.1ZM581.8 598.6L582.7 587.6L574.1 595.8L573.3 606.8ZM661.7 522.1L669.2 515L670.4 504.4L662.9 511.5ZM676.6 507.9L677.8 497.4L670.4 504.4L669.2 515ZM646.5 536.7L654.2 529.4L655.3 518.7L647.6 526ZM661.7 522.1L662.9 511.5L655.3 518.7L654.2 529.4ZM615 566.9L623 559.2L624 548.4L616 556ZM631 551.6L632 540.8L624 548.4L623 559.2ZM631 551.6L638.8 544.1L639.9 533.3L632 540.8ZM646.5 536.7L647.6 526L639.9 533.3L638.8 544.1ZM465.6 682.5L465.8 671.4L453.5 671.4L453.5 682.5ZM676.6 507.9L683.9 501L685.1 490.4L677.8 497.4ZM693 472.7L692 483.6L698.2 476.9L699.2 466.1Z"/>
<path fill="#56816b" d="M165.1 525.8L176.4 531.6L187.8 537.4L186.6 526.1L185.4 514.8L173.8 509L162.4 503.3L163.8 514.6ZM211 549.2L209.9 537.9L208.7 526.4L197 520.6L185.4 514.8L186.6 526.1L187.8 537.4L199.4 543.2ZM206.4 503.3L194.6 497.5L182.9 491.7L184.1 503.3L185.4 514.8L197 520.6L208.7 526.4L207.6 514.9ZM159.8 480.4L161.1 491.9L162.4 503.3L173.8 509L185.4 514.8L184.1 503.3L182.9 491.7L171.3 486ZM258.8 573.5L257.9 562L257 550.5L244.7 544.4L232.6 538.3L233.6 549.8L234.7 561.2L246.7 567.3ZM255.1 527.1L242.7 521L230.5 515L231.6 526.7L232.6 538.3L244.7 544.4L257 550.5L256 538.8ZM206.4 503.3L207.6 514.9L208.7 526.4L220.6 532.4L232.6 538.3L231.6 526.7L230.5 515L218.4 509.1ZM211 549.2L222.8 555.1L234.7 561.2L233.6 549.8L232.6 538.3L220.6 532.4L208.7 526.4L209.9 537.9ZM251.2 478.8L238.7 472.9L226.2 467.1L227.3 479.2L228.4 491.3L240.7 497.2L253.2 503.2L252.2 491.1ZM201.7 455.6L202.9 467.7L204.1 479.7L216.2 485.4L228.4 491.3L227.3 479.2L226.2 467.1L213.9 461.3ZM206.4 503.3L218.4 509.1L230.5 515L229.5 503.2L228.4 491.3L216.2 485.4L204.1 479.7L205.3 491.5ZM255.1 527.1L254.1 515.2L253.2 503.2L240.7 497.2L228.4 491.3L229.5 503.2L230.5 515L242.7 521ZM154.2 433.3L155.6 445.2L157 457.1L168.6 462.6L180.3 468.2L179 456.3L177.7 444.3L165.9 438.8ZM159.8 480.4L171.3 486L182.9 491.7L181.6 480L180.3 468.2L168.6 462.6L157 457.1L158.4 468.8ZM206.4 503.3L205.3 491.5L204.1 479.7L192.2 473.9L180.3 468.2L181.6 480L182.9 491.7L194.6 497.5ZM201.7 455.6L189.7 449.9L177.7 444.3L179 456.3L180.3 468.2L192.2 473.9L204.1 479.7L202.9 467.7ZM154.2 433.3L165.9 438.8L177.7 444.3L176.4 432.2L175.1 419.9L163.2 414.4L151.4 409L152.8 421.2ZM201.7 455.6L200.5 443.4L199.3 431L187.1 425.4L175.1 419.9L176.4 432.2L177.7 444.3L189.7 449.9ZM196.8 406L184.5 400.5L172.4 395L173.7 407.5L175.1 419.9L187.1 425.4L199.3 431L198 418.6ZM148.5 384.3L149.9 396.7L151.4 409L163.2 414.4L175.1 419.9L173.7 407.5L172.4 395L160.4 389.6ZM251.2 478.8L250.2 466.5L249.2 454L236.5 448.2L224 442.4L225.1 454.8L226.2 467.1L238.7 472.9ZM247.2 428.6L234.4 422.9L221.7 417.2L222.9 429.9L224 442.4L236.5 448.2L249.2 454L248.2 441.4ZM196.8 406L198 418.6L199.3 431L211.6 436.7L224 442.4L222.9 429.9L221.7 417.2L209.2 411.6ZM201.7 455.6L213.9 461.3L226.2 467.1L225.1 454.8L224 442.4L211.6 436.7L199.3 431L200.5 443.4ZM243 376.4L230 370.8L217.1 365.3L218.2 378.5L219.4 391.5L232.2 397.1L245.1 402.8L244.1 389.6ZM191.7 354.4L193 367.5L194.3 380.5L206.8 386L219.4 391.5L218.2 378.5L217.1 365.3L204.3 359.8ZM196.8 406L209.2 411.6L221.7 417.2L220.6 404.4L219.4 391.5L206.8 386L194.3 380.5L195.5 393.3ZM247.2 428.6L246.2 415.8L245.1 402.8L232.2 397.1L219.4 391.5L220.6 404.4L221.7 417.2L234.4 422.9ZM142.5 333.4L144 346.3L145.5 359.1L157.5 364.4L169.6 369.7L168.2 356.8L166.8 343.8L154.6 338.6ZM148.5 384.3L160.4 389.6L172.4 395L171 382.4L169.6 369.7L157.5 364.4L145.5 359.1L147 371.8ZM196.8 406L195.5 393.3L194.3 380.5L181.9 375L169.6 369.7L171 382.4L172.4 395L184.5 400.5ZM191.7 354.4L179.2 349.1L166.8 343.8L168.2 356.8L169.6 369.7L181.9 375L194.3 380.5L193 367.5ZM258.8 573.5L271.1 579.7L283.5 586L282.7 574.5L281.9 562.9L269.3 556.7L257 550.5L257.9 562ZM308.6 598.8L307.9 587.2L307.2 575.6L294.5 569.2L281.9 562.9L282.7 574.5L283.5 586L296 592.3ZM305.8 551.9L292.9 545.6L280.2 539.3L281 551.2L281.9 562.9L294.5 569.2L307.2 575.6L306.5 563.8ZM255.1 527.1L256 538.8L257 550.5L269.3 556.7L281.9 562.9L281 551.2L280.2 539.3L267.6 533.2ZM360.6 625.2L360.2 613.5L359.7 601.7L346.4 595.1L333.2 588.5L333.8 600.2L334.3 611.8L347.4 618.4ZM358.8 577.8L345.3 571.2L332 564.7L332.6 576.7L333.2 588.5L346.4 595.1L359.7 601.7L359.2 589.8ZM305.8 551.9L306.5 563.8L307.2 575.6L320.2 582L333.2 588.5L332.6 576.7L332 564.7L318.9 558.3ZM308.6 598.8L321.4 605.3L334.3 611.8L333.8 600.2L333.2 588.5L320.2 582L307.2 575.6L307.9 587.2ZM356.9 528.5L343.2 522L329.6 515.6L330.2 528.1L330.8 540.4L344.3 546.9L357.8 553.4L357.4 541ZM302.9 503.1L303.6 515.5L304.4 527.7L317.5 534L330.8 540.4L330.2 528.1L329.6 515.6L316.2 509.3ZM305.8 551.9L318.9 558.3L332 564.7L331.4 552.6L330.8 540.4L317.5 534L304.4 527.7L305.1 539.9ZM358.8 577.8L358.3 565.6L357.8 553.4L344.3 546.9L330.8 540.4L331.4 552.6L332 564.7L345.3 571.2ZM251.2 478.8L252.2 491.1L253.2 503.2L265.8 509.2L278.5 515.3L277.7 503.1L276.8 490.8L263.9 484.8ZM255.1 527.1L267.6 533.2L280.2 539.3L279.4 527.4L278.5 515.3L265.8 509.2L253.2 503.2L254.1 515.2ZM305.8 551.9L305.1 539.9L304.4 527.7L291.4 521.5L278.5 515.3L279.4 527.4L280.2 539.3L292.9 545.6ZM302.9 503.1L289.8 496.9L276.8 490.8L277.7 503.1L278.5 515.3L291.4 521.5L304.4 527.7L303.6 515.5ZM251.2 478.8L263.9 484.8L276.8 490.8L275.9 478.4L275 465.8L262.1 459.9L249.2 454L250.2 466.5ZM302.9 503.1L302.2 490.6L301.4 478L288.1 471.9L275 465.8L275.9 478.4L276.8 490.8L289.8 496.9ZM299.9 452.3L286.5 446.3L273.2 440.3L274.1 453.2L275 465.8L288.1 471.9L301.4 478L300.6 465.2ZM247.2 428.6L248.2 441.4L249.2 454L262.1 459.9L275 465.8L274.1 453.2L273.2 440.3L260.2 434.5ZM356.9 528.5L356.4 515.8L355.9 503L342.1 496.6L328.4 490.3L329 503.1L329.6 515.6L343.2 522ZM354.9 477L340.9 470.7L327.1 464.5L327.7 477.5L328.4 490.3L342.1 496.6L355.9 503L355.4 490.1ZM299.9 452.3L300.6 465.2L301.4 478L314.8 484.1L328.4 490.3L327.7 477.5L327.1 464.5L313.4 458.4ZM302.9 503.1L316.2 509.3L329.6 515.6L329 503.1L328.4 490.3L314.8 484.1L301.4 478L302.2 490.6ZM352.9 423.4L338.6 417.3L324.5 411.2L325.1 424.8L325.8 438.2L339.8 444.3L353.9 450.5L353.4 437ZM296.7 399.3L297.5 412.8L298.3 426.1L312 432.1L325.8 438.2L325.1 424.8L324.5 411.2L310.5 405.2ZM299.9 452.3L313.4 458.4L327.1 464.5L326.4 451.4L325.8 438.2L312 432.1L298.3 426.1L299.1 439.3ZM354.9 477L354.4 463.8L353.9 450.5L339.8 444.3L325.8 438.2L326.4 451.4L327.1 464.5L340.9 470.7ZM243 376.4L244.1 389.6L245.1 402.8L258.2 408.5L271.4 414.3L270.5 401.1L269.5 387.7L256.2 382ZM247.2 428.6L260.2 434.5L273.2 440.3L272.3 427.4L271.4 414.3L258.2 408.5L245.1 402.8L246.2 415.8ZM299.9 452.3L299.1 439.3L298.3 426.1L284.8 420.2L271.4 414.3L272.3 427.4L273.2 440.3L286.5 446.3ZM296.7 399.3L283 393.5L269.5 387.7L270.5 401.1L271.4 414.3L284.8 420.2L298.3 426.1L297.5 412.8ZM360.6 625.2L361 636.7L374.3 643.5L373.9 631.9Z"/>
<path fill="#5d8c74" d="M164.2 317.5L176.6 322.7L175.9 309.6L163.4 304.4ZM189.2 327.9L188.5 314.8L175.9 309.6L176.6 322.7ZM139.7 307.3L151.9 312.4L151 299.3L138.7 294.3ZM164.2 317.5L163.4 304.4L151 299.3L151.9 312.4ZM214.9 338.6L227.9 344L227.3 330.7L214.3 325.3ZM241 349.5L240.6 336.2L227.3 330.7L227.9 344ZM189.2 327.9L202 333.2L201.3 320L188.5 314.8ZM214.9 338.6L214.3 325.3L201.3 320L202 333.2ZM267.8 360.7L281.5 366.4L281.2 352.8L267.5 347.2ZM295.2 372.1L295 358.5L281.2 352.8L281.5 366.4ZM241 349.5L254.4 355.1L253.9 341.7L240.6 336.2ZM267.8 360.7L267.5 347.2L253.9 341.7L254.4 355.1ZM323.3 383.8L337.6 389.8L337.5 376L323.2 370.1ZM352 395.8L352 382L337.5 376L337.6 389.8ZM295.2 372.1L309.2 377.9L309 364.3L295 358.5ZM323.3 383.8L323.2 370.1L309 364.3L309.2 377.9ZM414.3 650.2L400.8 644.7L401.1 656.3L414.5 661.8ZM698.2 499.7L693.1 506.3L690.2 514.3L695.3 507.6ZM352 395.8L366.6 401.9L366.7 388L352 382Z"/>
<path fill="#8bd1ac" d="M251.4 275.1L237.9 269.9L233.3 280.8L246.8 286ZM224.7 264.8L220.1 275.6L233.3 280.8L237.9 269.9ZM198.5 254.8L194 265.5L207 270.5L211.5 259.8ZM224.7 264.8L211.5 259.8L207 270.5L220.1 275.6ZM148 235.4L143.6 245.9L156 250.7L160.4 240.2ZM173 245L160.4 240.2L156 250.7L168.5 255.6ZM198.5 254.8L185.7 249.9L181.2 260.5L194 265.5ZM173 245L168.5 255.6L181.2 260.5L185.7 249.9ZM364.6 318.5L349.9 312.8L345.1 324.2L359.8 330ZM335.3 307.2L330.5 318.6L345.1 324.2L349.9 312.8ZM306.7 296.3L302 307.5L316.2 313L320.9 301.7ZM335.3 307.2L320.9 301.7L316.2 313L330.5 318.6ZM251.4 275.1L246.8 286L260.3 291.3L265 280.3ZM278.7 285.5L265 280.3L260.3 291.3L274 296.6ZM306.7 296.3L292.6 290.9L287.9 302L302 307.5ZM278.7 285.5L274 296.6L287.9 302L292.6 290.9ZM661.6 144.8L648.2 140.8L642.3 141.6L655.9 145.6ZM364.6 318.5L359.8 330L374.7 335.8L379.5 324.2Z"/>
<path fill="#96e1ba" d="M422.9 341.1L429.1 330.8L415.2 325L409 335.6ZM396.6 281L387.2 289.3L378.5 298.2L393.4 303.8L408.3 309.5L416.9 300.4L426.3 292L411.5 286.5ZM660.7 165.2L647.9 160.2L639.9 165.3L652.8 170.3Z"/>
<path fill="#98e6be" d="M436.7 321.2L422.8 315.3L415.2 325L429.1 330.8ZM454.7 304.2L440.8 297.9L431.4 306.3L445.3 312.4ZM696.8 168.7L705.6 175.7L710.2 172.8L701.8 166.1Z"/>
<path fill="#97e3bb" d="M408.3 309.5L400.7 319.3L415.2 325L422.8 315.3ZM426.3 292L416.9 300.4L431.4 306.3L440.8 297.9Z"/>
<path fill="#97e4bc" d="M408.3 309.5L422.8 315.3L431.4 306.3L416.9 300.4ZM660.7 165.2L672.7 170.8L680 166.2L668.2 160.7Z"/>
<path fill="#b4fbd6" d="M464.6 358.7L470.7 354.7L463.4 348L457.8 355.6Z"/>
<path fill="#b3fcd5" d="M479.1 349.2L471.2 341.1L463.4 348L470.7 354.7Z"/>
<path fill="#a8f5cd" d="M461.2 333.9L453.6 342.2L463.4 348L471.2 341.1Z"/>
<path fill="#aaf4cd" d="M447.8 351.3L457.8 355.6L463.4 348L453.6 342.2Z"/>
<path fill="#a2f2c9" d="M498.5 336.1L489.9 326.8L480.2 334L488.5 342.9ZM461.2 333.9L471.2 341.1L480.2 334L470 326.1Z"/>
<path fill="#a0f1c7" d="M479.6 318.4L470 326.1L480.2 334L489.9 326.8Z"/>
<path fill="#a8f6cd" d="M479.1 349.2L488.5 342.9L480.2 334L471.2 341.1Z"/>
<path fill="#9be9c0" d="M454.7 304.2L445.3 312.4L458.3 318.9L467.7 311ZM700.5 192.6L692.9 198L698.7 207.5L706.3 201.9Z"/>
<path fill="#9eeec4" d="M461.2 333.9L470 326.1L458.3 318.9L449.6 327.4ZM539.6 307.1L531 297.6L520.6 289.2L510.3 296.3L499.9 303.6L510.3 312.1L519 321.7L529.3 314.4ZM539.6 307.1L549.7 299.9L559.6 292.9L551.1 283.5L540.9 275.2L530.8 282.1L520.6 289.2L531 297.6ZM579.1 279L570.7 269.8L560.6 261.7L550.8 268.4L540.9 275.2L551.1 283.5L559.6 292.9L569.4 285.9ZM616.4 252.5L608.2 243.6L598.3 235.7L589 242.1L579.7 248.5L589.7 256.5L598 265.6L607.2 259ZM579.1 279L588.6 272.2L598 265.6L589.7 256.5L579.7 248.5L570.2 255L560.6 261.7L570.7 269.8ZM616.4 252.5L625.4 246.1L634.2 239.8L626.1 231L616.3 223.3L607.3 229.4L598.3 235.7L608.2 243.6ZM651.6 227.4L643.6 218.8L633.9 211.2L625.2 217.2L616.3 223.3L626.1 231L634.2 239.8L643 233.6ZM684.9 203.7L677.1 195.3L667.6 188L659.3 193.7L650.9 199.4L660.6 206.9L668.5 215.4L676.7 209.5ZM651.6 227.4L660.1 221.4L668.5 215.4L660.6 206.9L650.9 199.4L642.5 205.3L633.9 211.2L643.6 218.8Z"/>
<path fill="#9dedc4" d="M479.6 318.4L467.7 311L458.3 318.9L470 326.1ZM684.9 203.7L692.9 198L700.5 192.6L692.9 184.3L683.5 177.1L675.7 182.4L667.6 188L677.1 195.3Z"/>
<path fill="#99e5be" d="M422.9 341.1L436 346.4L442.1 336.5L429.1 330.8Z"/>
<path fill="#9eebc3" d="M447.8 351.3L453.6 342.2L442.1 336.5L436 346.4Z"/>
<path fill="#9be9c1" d="M436.7 321.2L429.1 330.8L442.1 336.5L449.6 327.4ZM520.6 289.2L508.9 281.6L498.4 288.7L510.3 296.3ZM540.9 275.2L550.8 268.4L539.2 261.1L529.2 267.8ZM560.6 261.7L549 254.4L539.2 261.1L550.8 268.4ZM520.6 289.2L530.8 282.1L519.1 274.6L508.9 281.6ZM540.9 275.2L529.2 267.8L519.1 274.6L530.8 282.1ZM579.7 248.5L589 242.1L577.6 235L568.2 241.4ZM598.3 235.7L586.9 228.7L577.6 235L589 242.1ZM560.6 261.7L570.2 255L558.7 247.8L549 254.4ZM579.7 248.5L568.2 241.4L558.7 247.8L570.2 255ZM616.3 223.3L625.2 217.2L614 210.4L605.1 216.4ZM633.9 211.2L622.7 204.5L614 210.4L625.2 217.2ZM598.3 235.7L607.3 229.4L596.1 222.5L586.9 228.7ZM616.3 223.3L605.1 216.4L596.1 222.5L607.3 229.4ZM650.9 199.4L659.3 193.7L648.3 187.1L639.9 192.8ZM667.6 188L656.6 181.5L648.3 187.1L659.3 193.7ZM633.9 211.2L642.5 205.3L631.4 198.6L622.7 204.5ZM650.9 199.4L639.9 192.8L631.4 198.6L642.5 205.3ZM696.8 168.7L690.6 172.5L699.8 179.6L705.6 175.7ZM667.6 188L675.7 182.4L664.8 176L656.6 181.5Z"/>
<path fill="#98e6bd" d="M495.9 274.8L485.5 281.8L498.4 288.7L508.9 281.6Z"/>
<path fill="#9ae8bf" d="M454.7 304.2L467.7 311L477.7 303.3L464.7 296.4ZM683.5 177.1L690.6 172.5L680 166.2L672.7 170.8Z"/>
<path fill="#9cecc3" d="M479.6 318.4L489.6 310.9L477.7 303.3L467.7 311Z"/>
<path fill="#99e7be" d="M475 289L464.7 296.4L477.7 303.3L488 295.9Z"/>
<path fill="#9fefc6" d="M498.5 336.1L508.7 329L519 321.7L510.3 312.1L499.9 303.6L489.6 310.9L479.6 318.4L489.9 326.8Z"/>
<path fill="#98e4bd" d="M454.7 304.2L464.7 296.4L450.8 290.1L440.8 297.9Z"/>
<path fill="#96e2ba" d="M426.3 292L440.8 297.9L450.8 290.1L436.3 284.2ZM644.6 175.8L652.8 170.3L639.9 165.3L631.6 170.7Z"/>
<path fill="#416150" d="M416.2 692.6L403.2 687.2L404.9 695.1L417.6 700.3Z"/>
<path fill="#354e41" d="M363.9 667.5L365.8 675.5L378.8 682.4L377 674.4Z"/>
<path fill="#375143" d="M390.1 681.1L377 674.4L378.8 682.4L391.9 689.1Z"/>
<path fill="#24352c" d="M443 712.3L444.9 715.8L454.4 716.3L453.8 713.2Z"/>
<path fill="#619278" d="M465.1 701.3L453.5 701.4L453.5 708.2L464.6 708ZM687 513.1L680.1 520L677.3 528.1L684.1 521.1Z"/>
<path fill="#486b59" d="M443 712.3L453.8 713.2L453.5 708.2L441.9 707Z"/>
<path fill="#486c59" d="M416.2 692.6L417.6 700.3L430 704.3L429 696.9Z"/>
<path fill="#6ea589" d="M440.8 680.8L453.5 682.5L453.5 671.4L440.7 669.7Z"/>
<path fill="#619178" d="M414.8 673L427.9 677.5L427.7 666.4L414.5 661.8ZM381.3 407.8L396.1 413.4L396.3 399.4L381.5 393.9Z"/>
<path fill="#679b80" d="M440.8 680.8L440.7 669.7L427.7 666.4L427.9 677.5Z"/>
<path fill="#699d82" d="M440.7 658L427.6 654.7L427.7 666.4L440.7 669.7ZM410.8 418.3L425.4 422.4L425.6 408.5L411 404.4Z"/>
<path fill="#558069" d="M416.2 692.6L429 696.9L428.3 687.8L415.3 683.4ZM388.1 661.3L387.7 650.1L374.3 643.5L374.8 654.6Z"/>
<path fill="#5c8b73" d="M414.8 673L415.3 683.4L428.3 687.8L427.9 677.5Z"/>
<path fill="#71ab8d" d="M465.6 682.5L453.5 682.5L453.5 692.7L465.4 692.6ZM676.6 507.9L675 517.9L682.3 510.9L683.9 501ZM411.7 390.7L413 377.4L398.4 372.3L397 385.7Z"/>
<path fill="#6aa084" d="M440.8 680.8L441 691L453.5 692.7L453.5 682.5Z"/>
<path fill="#64967c" d="M441.4 699.9L453.5 701.4L453.5 692.7L441 691ZM410.8 418.3L411 404.4L396.3 399.4L396.1 413.4ZM352.6 368.4L352 382L366.7 388L367.4 374.4Z"/>
<path fill="#537c67" d="M388.1 661.3L388.9 671.7L402.1 677.9L401.5 667.5Z"/>
<path fill="#5a876f" d="M387.4 638.5L387.7 650.1L401.1 656.3L400.8 644.7Z"/>
<path fill="#5b8971" d="M414.8 673L414.5 661.8L401.1 656.3L401.5 667.5Z"/>
<path fill="#293b32" d="M680.3 527.9L673.5 534.8L668.6 540L675.4 533.1Z"/>
<path fill="#2a3e33" d="M666.3 541.9L661.4 547.1L668.6 540L673.5 534.8Z"/>
<path fill="#4e7460" d="M680.3 527.9L686.4 521L690.2 514.3L684.1 521.1Z"/>
<path fill="#4b705d" d="M691.4 514.3L695.3 507.6L690.2 514.3L686.4 521Z"/>
<path fill="#619279" d="M672.9 527.1L670 535.1L677.3 528.1L680.1 520Z"/>
<path fill="#4f7762" d="M680.3 527.9L684.1 521.1L677.3 528.1L673.5 534.8Z"/>
<path fill="#70a98c" d="M704.4 459.6L703.3 470.4L707.2 464L708.3 453.2ZM439.9 453.4L453.8 455L453.8 441L439.8 439.4Z"/>
<path fill="#699f83" d="M708.2 468.2L709.5 457.8L707.2 464L705.9 474.4ZM439.9 453.4L439.8 439.4L425.5 436.4L425.6 450.4Z"/>
<path fill="#65977d" d="M698.2 499.7L702 493.2L704.2 484.2L700.4 490.6ZM382.2 380.2L367.4 374.4L366.7 388L381.5 393.9Z"/>
<path fill="#5f8e75" d="M704.2 486.9L706.5 477.9L704.2 484.2L702 493.2Z"/>
<path fill="#77b293" d="M678.8 486.4L677.8 497.4L685.1 490.4L686.1 479.5ZM386 353.9L371.2 348.1L368.8 361L383.7 366.8Z"/>
<path fill="#71aa8c" d="M690.7 494.1L683.9 501L682.3 510.9L689.1 504ZM732.1 237.4L732.6 225.4L730.3 230.6L729.8 242.7ZM723.4 273.3L727.5 267.7L728.7 255.1L724.7 260.8Z"/>
<path fill="#6ea689" d="M702 480.8L696.9 487.4L695.3 497.3L700.4 490.6ZM411.7 390.7L411 404.4L425.6 408.5L426.1 394.9ZM439.8 425.4L439.9 411.5L425.6 408.5L425.4 422.4Z"/>
<path fill="#6a9f84" d="M687 513.1L693.1 506.3L695.3 497.3L689.1 504Z"/>
<path fill="#73ae90" d="M690.7 494.1L696.9 487.4L698.2 476.9L692 483.6Z"/>
<path fill="#92deb6" d="M438.5 252.6L453.2 257.7L467.8 263L478.3 256.3L488.5 249.7L474 244.5L459.3 239.6L449 246ZM479.6 226.9L469.6 233.2L459.3 239.6L474 244.5L488.5 249.7L498.6 243.1L508.6 236.7L494.2 231.7ZM518.5 202.6L509 208.5L499.3 214.6L513.8 219.2L528.1 224.1L537.7 218L547.1 211.9L532.9 207.1ZM479.6 226.9L494.2 231.7L508.6 236.7L518.5 230.4L528.1 224.1L513.8 219.2L499.3 214.6L489.6 220.7ZM518.5 202.6L532.9 207.1L547.1 211.9L556.4 205.9L565.6 200L551.4 195.4L537.2 190.9L527.9 196.7ZM555.3 179.6L546.3 185.2L537.2 190.9L551.4 195.4L565.6 200L574.6 194.1L583.6 188.4L569.5 183.9ZM590.2 157.8L581.7 163.1L573 168.5L587.1 172.7L601 177.1L609.6 171.6L618.1 166.1L604.2 161.9ZM555.3 179.6L569.5 183.9L583.6 188.4L592.4 182.7L601 177.1L587.1 172.7L573 168.5L564.2 174Z"/>
<path fill="#58836c" d="M360.6 625.2L373.9 631.9L387.4 638.5L387.1 626.8L386.7 615L373.2 608.4L359.7 601.7L360.2 613.5ZM358.8 577.8L359.2 589.8L359.7 601.7L373.2 608.4L386.7 615L386.4 603L386.1 590.9L372.4 584.4ZM356.9 528.5L357.4 541L357.8 553.4L371.6 560L385.4 566.4L385.1 553.9L384.7 541.3L370.8 535ZM358.8 577.8L372.4 584.4L386.1 590.9L385.8 578.7L385.4 566.4L371.6 560L357.8 553.4L358.3 565.6ZM356.9 528.5L370.8 535L384.7 541.3L384.4 528.6L384.1 515.7L369.9 509.4L355.9 503L356.4 515.8ZM354.9 477L355.4 490.1L355.9 503L369.9 509.4L384.1 515.7L383.7 502.7L383.3 489.6L369.1 483.4ZM352.9 423.4L353.4 437L353.9 450.5L368.2 456.8L382.6 462.9L382.3 449.3L381.9 435.6L367.3 429.6ZM354.9 477L369.1 483.4L383.3 489.6L383 476.3L382.6 462.9L368.2 456.8L353.9 450.5L354.4 463.8Z"/>
<path fill="#5e8d75" d="M414.3 650.2L414.1 638.4L400.6 633L400.8 644.7ZM413.9 626.5L400.3 621.1L400.6 633L414.1 638.4ZM413.5 602.4L399.8 597L400.1 609.1L413.7 614.5ZM413.9 626.5L413.7 614.5L400.1 609.1L400.3 621.1ZM413.5 602.4L413.3 590.1L399.6 584.7L399.8 597ZM413.2 577.7L399.3 572.4L399.6 584.7L413.3 590.1ZM412.8 552.5L398.8 547.3L399 559.9L413 565.2ZM413.2 577.7L413 565.2L399 559.9L399.3 572.4ZM412.8 552.5L412.6 539.7L398.5 534.5L398.8 547.3ZM412.4 526.8L398.2 521.6L398.5 534.5L412.6 539.7ZM412 500.5L397.7 495.4L397.9 508.6L412.2 513.7ZM412.4 526.8L412.2 513.7L397.9 508.6L398.2 521.6ZM412 500.5L411.8 487.2L397.4 482.1L397.7 495.4ZM411.5 473.7L397.1 468.6L397.4 482.1L411.8 487.2ZM411.1 446.2L396.5 441.2L396.8 455L411.3 460ZM411.5 473.7L411.3 460L396.8 455L397.1 468.6Z"/>
<path fill="#5a8770" d="M386.7 615L387.1 626.8L400.6 633L400.3 621.1ZM387.4 638.5L400.8 644.7L400.6 633L387.1 626.8ZM386.1 590.9L386.4 603L400.1 609.1L399.8 597ZM386.7 615L400.3 621.1L400.1 609.1L386.4 603ZM385.4 566.4L385.8 578.7L399.6 584.7L399.3 572.4ZM386.1 590.9L399.8 597L399.6 584.7L385.8 578.7ZM384.7 541.3L385.1 553.9L399 559.9L398.8 547.3ZM385.4 566.4L399.3 572.4L399 559.9L385.1 553.9ZM384.1 515.7L384.4 528.6L398.5 534.5L398.2 521.6ZM384.7 541.3L398.8 547.3L398.5 534.5L384.4 528.6ZM383.3 489.6L383.7 502.7L397.9 508.6L397.7 495.4ZM384.1 515.7L398.2 521.6L397.9 508.6L383.7 502.7ZM382.6 462.9L383 476.3L397.4 482.1L397.1 468.6ZM383.3 489.6L397.7 495.4L397.4 482.1L383 476.3ZM381.9 435.6L382.3 449.3L396.8 455L396.5 441.2ZM382.6 462.9L397.1 468.6L396.8 455L382.3 449.3Z"/>
<path fill="#699e82" d="M440.6 634.2L440.6 622.2L427.2 619L427.4 631ZM440.5 610L427.1 606.8L427.2 619L440.6 622.2ZM440.7 658L440.6 646.2L427.5 642.9L427.6 654.7ZM440.6 634.2L427.4 631L427.5 642.9L440.6 646.2ZM440.4 585.3L440.4 572.7L426.8 569.6L426.9 582.1ZM440.3 560L426.6 556.9L426.8 569.6L440.4 572.7ZM440.5 610L440.5 597.7L427 594.5L427.1 606.8ZM440.4 585.3L426.9 582.1L427 594.5L440.5 597.7ZM440.2 534.2L440.1 521.1L426.3 518L426.4 531.1ZM440.1 507.9L426.1 504.8L426.3 518L440.1 521.1ZM440.3 560L440.2 547.2L426.5 544.1L426.6 556.9ZM440.2 534.2L426.4 531.1L426.5 544.1L440.2 547.2ZM440 480.9L439.9 467.2L425.7 464.2L425.9 477.9ZM439.9 453.4L425.6 450.4L425.7 464.2L439.9 467.2ZM440.1 507.9L440 494.5L426 491.4L426.1 504.8ZM440 480.9L425.9 477.9L426 491.4L440 494.5ZM732.1 237.4L732.4 232.2L732.9 220.4L732.6 225.4Z"/>
<path fill="#76b294" d="M678.8 486.4L686.1 479.5L693 472.7L694.1 461.8L695.2 450.8L688.2 457.5L680.8 464.3L679.8 475.4ZM682.9 441.8L681.9 453.1L680.8 464.3L688.2 457.5L695.2 450.8L696.3 439.6L697.4 428.4L690.4 435ZM687.2 395.4L686.1 407.2L685 418.8L692.5 412.1L699.6 405.6L700.7 394L701.9 382.4L694.8 388.8ZM682.9 441.8L690.4 435L697.4 428.4L698.5 417L699.6 405.6L692.5 412.1L685 418.8L684 430.3ZM687.2 395.4L694.8 388.8L701.9 382.4L703 370.6L704.2 358.7L697 365.1L689.4 371.6L688.3 383.6ZM691.7 347.3L690.5 359.5L689.4 371.6L697 365.1L704.2 358.7L705.4 346.7L706.6 334.6L699.3 340.9ZM696.3 297.4L695.1 310.1L694 322.6L701.7 316.3L709 310.1L710.2 297.7L711.4 285.1L704.1 291.2ZM691.7 347.3L699.3 340.9L706.6 334.6L707.8 322.4L709 310.1L701.7 316.3L694 322.6L692.8 335Z"/>
<path fill="#74ae90" d="M704.4 459.6L705.5 448.7L700.3 455.2L699.2 466.1ZM706.7 437.7L701.4 444.2L700.3 455.2L705.5 448.7ZM708.9 415.5L703.7 421.8L702.6 433.1L707.8 426.6ZM706.7 437.7L707.8 426.6L702.6 433.1L701.4 444.2ZM708.9 415.5L710.1 404.2L704.8 410.5L703.7 421.8ZM711.2 392.8L705.9 399.1L704.8 410.5L710.1 404.2ZM713.6 369.8L708.3 376L707.1 387.6L712.4 381.4ZM711.2 392.8L712.4 381.4L707.1 387.6L705.9 399.1ZM713.6 369.8L714.8 358.1L709.4 364.3L708.3 376ZM716 346.3L710.6 352.5L709.4 364.3L714.8 358.1ZM718.4 322.5L713 328.5L711.8 340.5L717.2 334.5ZM716 346.3L717.2 334.5L711.8 340.5L710.6 352.5ZM718.4 322.5L719.6 310.3L714.2 316.3L713 328.5ZM720.9 298.1L715.5 304.1L714.2 316.3L719.6 310.3ZM723.4 273.3L718 279.2L716.7 291.7L722.1 285.8ZM720.9 298.1L722.1 285.8L716.7 291.7L715.5 304.1ZM440.2 398L426.1 394.9L425.6 408.5L439.9 411.5Z"/>
<path fill="#71a98c" d="M708.9 415.5L707.8 426.6L711.7 420.4L712.8 409.3ZM706.7 437.7L710.5 431.4L711.7 420.4L707.8 426.6ZM704.4 459.6L708.3 453.2L709.4 442.4L705.5 448.7ZM706.7 437.7L705.5 448.7L709.4 442.4L710.5 431.4ZM713.6 369.8L712.4 381.4L716.3 375.3L717.5 363.8ZM711.2 392.8L715.2 386.7L716.3 375.3L712.4 381.4ZM708.9 415.5L712.8 409.3L714 398.1L710.1 404.2ZM711.2 392.8L710.1 404.2L714 398.1L715.2 386.7ZM718.4 322.5L717.2 334.5L721.2 328.5L722.4 316.6ZM716 346.3L719.9 340.4L721.2 328.5L717.2 334.5ZM713.6 369.8L717.5 363.8L718.7 352.1L714.8 358.1ZM716 346.3L714.8 358.1L718.7 352.1L719.9 340.4ZM723.4 273.3L722.1 285.8L726.2 280.1L727.5 267.7ZM720.9 298.1L724.9 292.3L726.2 280.1L722.1 285.8ZM718.4 322.5L722.4 316.6L723.7 304.5L719.6 310.3ZM720.9 298.1L719.6 310.3L723.7 304.5L724.9 292.3Z"/>
<path fill="#9ae9c0" d="M683.5 177.1L672.7 170.8L664.8 176L675.7 182.4Z"/>
<path fill="#87cca8" d="M721 176.6L717.7 172.4L715.7 170.8L721 176.9Z"/>
<path fill="#8cd4af" d="M705.9 164.8L709.1 165.1L700.7 159.6L696.8 159ZM719.7 178.2L724.7 185.8L725.3 183.4L721 176.9Z"/>
<path fill="#96e3bb" d="M696.8 168.7L701.8 166.1L692.1 160.1L686.5 162.6Z"/>
<path fill="#8ed7b1" d="M649.4 147.9L655.9 145.6L642.3 141.6L635.7 143.8Z"/>
<path fill="#58846e" d="M381.9 435.6L381.5 421.7L366.9 415.7L367.3 429.6Z"/>
<path fill="#5a8870" d="M381.3 407.8L366.6 401.9L366.9 415.7L381.5 421.7Z"/>
<path fill="#5e8e75" d="M411.1 446.2L410.9 432.3L396.2 427.3L396.5 441.2ZM381.3 407.8L381.5 393.9L366.7 388L366.6 401.9Z"/>
<path fill="#609177" d="M410.8 418.3L396.1 413.4L396.2 427.3L410.9 432.3Z"/>
<path fill="#5b8871" d="M381.9 435.6L396.5 441.2L396.2 427.3L381.5 421.7Z"/>
<path fill="#679a80" d="M382.2 380.2L381.5 393.9L396.3 399.4L397 385.7Z"/>
<path fill="#79b596" d="M467.4 426.9L453.9 426.9L453.8 441L467.4 440.9Z"/>
<path fill="#a5eec8" d="M464.6 358.7L457.8 355.6L455.1 364.7L465.3 365.7Z"/>
<path fill="#9de7c0" d="M447.8 351.3L444.1 361.6L455.1 364.7L457.8 355.6Z"/>
<path fill="#96e0b9" d="M466.1 375.6L465.3 365.7L455.1 364.7L454.3 375.2Z"/>
<path fill="#88cdaa" d="M415.1 364.6L428.8 369.2L431.7 357.4L418.3 352.5Z"/>
<path fill="#96e0ba" d="M447.8 351.3L436 346.4L431.7 357.4L444.1 361.6Z"/>
<path fill="#86cba7" d="M467.1 399.8L466.7 387.2L454 387L453.9 399.8Z"/>
<path fill="#78b596" d="M713.7 259.8L706.3 265.8L705.3 278.5L712.6 272.5Z"/>
<path fill="#74af90" d="M723.4 273.3L724.7 260.8L719.2 266.5L718 279.2Z"/>
<path fill="#7dbd9c" d="M726 224.1L720.6 229.5L720.8 241.5L726.3 236Z"/>
<path fill="#7fbf9e" d="M713.9 235.1L714.2 247.3L720.8 241.5L720.6 229.5Z"/>
<path fill="#6fa78a" d="M732.3 214.1L732.6 225.4L732.9 220.4L732.6 209.4Z"/>
<path fill="#73ac8e" d="M725.7 248.3L724.7 260.8L728.7 255.1L729.8 242.7Z"/>
<path fill="#84c8a5" d="M728.4 194.3L726.2 198.1L728.7 208.1L730.9 203.8Z"/>
<path fill="#88ceaa" d="M722.3 202.2L724.8 212.8L728.7 208.1L726.2 198.1Z"/>
<path fill="#8bd1ad" d="M722.3 202.2L716.9 207L719.3 217.9L724.8 212.8Z"/>
<path fill="#8cd3af" d="M710.2 212.3L712.7 223.4L719.3 217.9L716.9 207Z"/>
<path fill="#9ae8c0" d="M700.5 192.6L706.3 201.9L712.9 196.9L707.3 187.7Z"/>
</g>
<defs><linearGradient id="bb" gradientUnits="userSpaceOnUse" x1="209.6" y1="574.5" x2="204" y2="584"><stop offset="0" stop-color="#000" stop-opacity="0"/><stop offset="1" stop-color="#000"/></linearGradient></defs><path d="M151.6 536.600L209.600 574.500L281.600 617.500L353.600 661.100L445.600 702.600L440 712L348 670.600L276 627L204 584L146 546Z" fill="url(#bb)"/><path d="M146 546L204 584L276 627L348 670.6L440 712L440 717L366 685.5L161 575.5L140 556Z" fill="#000"/>
<g shape-rendering="crispEdges"><path fill="#8dd5b0" d="M115.8 249L116.7 246.3L150.9 253ZM115.8 249L150.9 253L148.6 255.1ZM148.6 255.1L179.6 263.7L146.8 257.6ZM146.8 257.6L179.6 263.7L177.8 266.3ZM177.8 266.3L210.6 272.4L208.8 274.9ZM260.5 289.3L281.2 295L280.5 297Z"/><path fill="#8dd6b0" d="M116.7 246.3L151.7 250.3L150.9 253ZM179.6 263.7L210.6 272.4L177.8 266.3Z"/><path fill="#8ed6b1" d="M150.9 253L151.7 250.3L185.9 257ZM210.6 272.4L241.6 281L208.8 274.9ZM241.6 281L272.6 289.6L239.8 283.5ZM239.8 283.5L272.6 289.6L270.8 292.1ZM148.6 255.1L181.3 261.2L179.6 263.7Z"/><path fill="#8ed7b2" d="M151.7 250.3L186.8 254.3L185.9 257ZM151.7 250.3L152.6 247.6L186.8 254.3ZM212.3 269.8L243.4 278.5L210.6 272.4Z"/><path fill="#8fd8b2" d="M185.9 257L186.8 254.3L221 260.9ZM118.4 240.9L153.5 244.9L152.6 247.6ZM118.4 240.9L119.3 238.2L153.5 244.9ZM183.6 259.1L216.4 265.2L181.3 261.2ZM183.6 259.1L218.7 263.1L216.4 265.2ZM185.9 257L221 260.9L218.7 263.1ZM334.6 306.9L365.6 315.5L332.9 309.4ZM243.4 278.5L274.4 287.1L241.6 281ZM274.4 287.1L305.4 295.7L272.6 289.6ZM272.6 289.6L305.4 295.7L303.6 298.3ZM181.3 261.2L214.1 267.3L212.3 269.8Z"/><path fill="#8fd9b3" d="M186.8 254.3L221.8 258.2L221 260.9ZM186.8 254.3L187.7 251.6L221.8 258.2ZM119.3 238.2L154.4 242.2L153.5 244.9ZM221 260.9L253.7 267L218.7 263.1ZM214.1 267.3L245.1 276L212.3 269.8Z"/><path fill="#90d9b3" d="M221 260.9L221.8 258.2L256 264.9ZM153.5 244.9L188.5 248.9L187.7 251.6ZM119.3 238.2L120.2 235.5L154.4 242.2ZM218.7 263.1L251.5 269.2L216.4 265.2ZM336.4 304.4L367.4 313L334.6 306.9ZM245.1 276L276.1 284.6L243.4 278.5ZM243.4 278.5L276.1 284.6L274.4 287.1ZM276.1 284.6L307.1 293.2L274.4 287.1ZM274.4 287.1L307.1 293.2L305.4 295.7ZM305.4 295.7L338.1 301.8L336.4 304.4Z"/><path fill="#90dab4" d="M221.8 258.2L256.9 262.2L256 264.9ZM187.7 251.6L222.7 255.5L221.8 258.2ZM221.8 258.2L222.7 255.5L256.9 262.2ZM187.7 251.6L188.5 248.9L222.7 255.5ZM154.4 242.2L189.4 246.2L188.5 248.9ZM120.2 235.5L155.2 239.5L154.4 242.2ZM120.2 235.5L121 232.8L155.2 239.5ZM214.1 267.3L249.2 271.3L246.9 273.4ZM216.4 265.2L251.5 269.2L249.2 271.3ZM218.7 263.1L253.7 267L251.5 269.2ZM221 260.9L256 264.9L253.7 267ZM307.1 293.2L338.1 301.8L305.4 295.7ZM214.1 267.3L246.9 273.4L245.1 276ZM246.9 273.4L277.9 282.1L245.1 276ZM245.1 276L277.9 282.1L276.1 284.6Z"/><path fill="#91dbb5" d="M256 264.9L256.9 262.2L291.1 268.9ZM222.7 255.5L257.8 259.5L256.9 262.2ZM188.5 248.9L223.6 252.8L222.7 255.5ZM222.7 255.5L223.6 252.8L257.8 259.5ZM188.5 248.9L189.4 246.2L223.6 252.8ZM155.2 239.5L190.3 243.5L189.4 246.2ZM121 232.8L156.1 236.8L155.2 239.5ZM155.2 239.5L156.1 236.8L190.3 243.5ZM121 232.8L121.9 230.1L156.1 236.8ZM249.2 271.3L281.9 277.4L246.9 273.4ZM251.5 269.2L284.2 275.3L249.2 271.3ZM249.2 271.3L284.2 275.3L281.9 277.4ZM253.7 267L286.5 273.1L251.5 269.2ZM251.5 269.2L286.5 273.1L284.2 275.3ZM253.7 267L288.8 271L286.5 273.1ZM256 264.9L291.1 268.9L288.8 271ZM308.9 290.7L339.9 299.3L307.1 293.2ZM338.1 301.8L370.9 307.9L369.1 310.5ZM246.9 273.4L279.7 279.5L277.9 282.1Z"/><path fill="#91dcb5" d="M256.9 262.2L292 266.2L291.1 268.9ZM246.9 273.4L281.9 277.4L279.7 279.5ZM277.9 282.1L310.7 288.2L308.9 290.7Z"/><path fill="#92dcb6" d="M291.1 268.9L292 266.2L326.1 272.9ZM223.6 252.8L258.7 256.8L257.8 259.5ZM223.6 252.8L224.5 250.1L258.7 256.8ZM189.4 246.2L190.3 243.5L224.5 250.1ZM156.1 236.8L191.2 240.8L190.3 243.5ZM121.9 230.1L157 234.1L156.1 236.8ZM156.1 236.8L157 234.1L191.2 240.8ZM121.9 230.1L122.8 227.4L157 234.1ZM284.2 275.3L317 281.4L281.9 277.4ZM286.5 273.1L319.3 279.3L284.2 275.3ZM288.8 271L321.6 277.1L286.5 273.1ZM279.7 279.5L310.7 288.2L277.9 282.1ZM310.7 288.2L341.7 296.8L308.9 290.7ZM308.9 290.7L341.7 296.8L339.9 299.3ZM339.9 299.3L372.7 305.4L370.9 307.9Z"/><path fill="#92ddb7" d="M292 266.2L327 270.2L326.1 272.9ZM292 266.2L292.8 263.5L327 270.2ZM224.5 250.1L259.5 254.1L258.7 256.8ZM190.3 243.5L191.2 240.8L225.3 247.4ZM279.7 279.5L314.7 283.5L312.4 285.7ZM281.9 277.4L317 281.4L314.7 283.5ZM310.7 288.2L343.4 294.3L341.7 296.8Z"/><path fill="#93deb7" d="M326.1 272.9L327 270.2L361.2 276.8ZM258.7 256.8L293.7 260.8L292.8 263.5ZM258.7 256.8L259.5 254.1L293.7 260.8ZM319.3 279.3L352.1 285.4L317 281.4ZM321.6 277.1L354.3 283.2L319.3 279.3ZM323.9 275L356.6 281.1L321.6 277.1ZM326.1 272.9L361.2 276.8L358.9 279ZM343.4 294.3L374.4 302.9L341.7 296.8ZM341.7 296.8L374.4 302.9L372.7 305.4Z"/><path fill="#93dfb8" d="M327 270.2L362.1 274.1L361.2 276.8ZM327 270.2L327.9 267.5L362.1 274.1ZM312.4 285.7L347.5 289.6L345.2 291.8ZM314.7 283.5L349.8 287.5L347.5 289.6ZM317 281.4L352.1 285.4L349.8 287.5ZM361.2 276.8L394 282.9L358.9 279Z"/><path fill="#94dfb8" d="M361.2 276.8L362.1 274.1L396.3 280.8ZM356.6 281.1L389.4 287.2L354.3 283.2ZM358.9 279L391.7 285.1L356.6 281.1ZM345.2 291.8L376.2 300.4L343.4 294.3ZM343.4 294.3L376.2 300.4L374.4 302.9Z"/><path fill="#8dd6b1" d="M116.7 246.3L117.5 243.6L151.7 250.3ZM150.9 253L183.6 259.1L148.6 255.1Z"/><path fill="#8ed7b1" d="M117.5 243.6L152.6 247.6L151.7 250.3ZM117.5 243.6L118.4 240.9L152.6 247.6ZM148.6 255.1L183.6 259.1L181.3 261.2ZM150.9 253L185.9 257L183.6 259.1ZM272.6 289.6L303.6 298.3L270.8 292.1ZM270.8 292.1L303.6 298.3L301.8 300.8ZM181.3 261.2L212.3 269.8L179.6 263.7ZM179.6 263.7L212.3 269.8L210.6 272.4ZM210.6 272.4L243.4 278.5L241.6 281Z"/><path fill="#8fd8b3" d="M152.6 247.6L187.7 251.6L186.8 254.3ZM152.6 247.6L153.5 244.9L187.7 251.6ZM181.3 261.2L216.4 265.2L214.1 267.3ZM212.3 269.8L245.1 276L243.4 278.5Z"/><path fill="#91dcb6" d="M256.9 262.2L257.8 259.5L292 266.2ZM189.4 246.2L224.5 250.1L223.6 252.8ZM291.1 268.9L323.9 275L288.8 271Z"/><path fill="#92ddb6" d="M257.8 259.5L292.8 263.5L292 266.2ZM257.8 259.5L258.7 256.8L292.8 263.5ZM190.3 243.5L225.3 247.4L224.5 250.1ZM281.9 277.4L314.7 283.5L279.7 279.5ZM284.2 275.3L319.3 279.3L317 281.4ZM286.5 273.1L321.6 277.1L319.3 279.3ZM288.8 271L323.9 275L321.6 277.1ZM291.1 268.9L326.1 272.9L323.9 275ZM341.7 296.8L372.7 305.4L339.9 299.3ZM279.7 279.5L312.4 285.7L310.7 288.2Z"/><path fill="#93deb8" d="M292.8 263.5L327.9 267.5L327 270.2ZM292.8 263.5L293.7 260.8L327.9 267.5ZM314.7 283.5L347.5 289.6L312.4 285.7ZM317 281.4L349.8 287.5L314.7 283.5ZM319.3 279.3L354.3 283.2L352.1 285.4ZM321.6 277.1L356.6 281.1L354.3 283.2ZM323.9 275L358.9 279L356.6 281.1ZM312.4 285.7L345.2 291.8L343.4 294.3Z"/><path fill="#90d9b4" d="M153.5 244.9L154.4 242.2L188.5 248.9ZM216.4 265.2L249.2 271.3L214.1 267.3Z"/><path fill="#91dab4" d="M154.4 242.2L155.2 239.5L189.4 246.2ZM338.1 301.8L369.1 310.5L336.4 304.4ZM336.4 304.4L369.1 310.5L367.4 313ZM276.1 284.6L308.9 290.7L307.1 293.2Z"/><path fill="#93ddb7" d="M224.5 250.1L225.3 247.4L259.5 254.1ZM312.4 285.7L343.4 294.3L310.7 288.2Z"/><path fill="#94e0b9" d="M347.5 289.6L380.2 295.7L345.2 291.8ZM349.8 287.5L382.5 293.6L347.5 289.6ZM347.5 289.6L382.5 293.6L380.2 295.7ZM352.1 285.4L384.8 291.5L349.8 287.5ZM349.8 287.5L384.8 291.5L382.5 293.6ZM352.1 285.4L387.1 289.3L384.8 291.5ZM354.3 283.2L389.4 287.2L387.1 289.3ZM356.6 281.1L391.7 285.1L389.4 287.2ZM358.9 279L394 282.9L391.7 285.1ZM361.2 276.8L396.3 280.8L394 282.9ZM345.2 291.8L378 297.9L376.2 300.4Z"/><path fill="#95e0ba" d="M345.2 291.8L380.2 295.7L378 297.9Z"/><path fill="#8ed8b2" d="M185.9 257L218.7 263.1L183.6 259.1Z"/><path fill="#90dbb4" d="M256 264.9L288.8 271L253.7 267Z"/><path fill="#94dfb9" d="M354.3 283.2L387.1 289.3L352.1 285.4Z"/><path fill="#92deb7" d="M326.1 272.9L358.9 279L323.9 275Z"/><path fill="#8cd5b0" d="M115.8 249L148.6 255.1L146.8 257.6Z"/><path fill="#8ed6b0" d="M208.8 274.9L241.6 281L239.8 283.5ZM301.8 300.8L322.5 306.5L321.8 308.5ZM322.5 306.5L343.2 312.3L342.5 314.3ZM343.2 312.3L363.9 318L363.2 320Z"/><path fill="#8fd7b1" d="M303.6 298.3L334.6 306.9L301.8 300.8ZM301.8 300.8L334.6 306.9L332.9 309.4ZM332.9 309.4L365.6 315.5L363.9 318Z"/><path fill="#8fd7b2" d="M241.6 281L274.4 287.1L272.6 289.6Z"/><path fill="#90d8b2" d="M305.4 295.7L336.4 304.4L303.6 298.3ZM303.6 298.3L336.4 304.4L334.6 306.9Z"/><path fill="#90d9b2" d="M334.6 306.9L367.4 313L365.6 315.5Z"/><path fill="#91dbb4" d="M277.9 282.1L308.9 290.7L276.1 284.6ZM307.1 293.2L339.9 299.3L338.1 301.8Z"/><path fill="#92dbb5" d="M339.9 299.3L370.9 307.9L338.1 301.8Z"/><path fill="#8cd3ae" d="M115.8 249L136.5 254.8L135.8 256.7ZM177.8 266.3L197.8 274L177.1 268.2ZM198.5 272L218.5 279.8L197.8 274ZM259.8 291.3L280.5 297L279.8 299ZM280.5 297L301.2 302.8L300.5 304.7ZM301.2 302.8L321.8 308.5L321.2 310.5ZM321.8 308.5L342.5 314.3L341.8 316.3Z"/><path fill="#8bd3ae" d="M136.5 254.8L156.5 262.5L135.8 256.7ZM157.1 260.5L177.1 268.2L156.5 262.5Z"/><path fill="#8ad1ac" d="M135.8 256.7L156.5 262.5L155.8 264.5ZM177.1 268.2L197.1 276L176.5 270.2ZM197.8 274L217.8 281.7L197.1 276Z"/><path fill="#8ad0ac" d="M156.5 262.5L176.5 270.2L155.8 264.5ZM279.8 299L300.5 304.7L299.8 306.7ZM115.8 249L135.5 258.9L135.5 261.2Z"/><path fill="#89cfab" d="M155.8 264.5L176.5 270.2L175.8 272.2ZM176.5 270.2L197.1 276L196.5 278ZM197.1 276L217.8 281.7L217.1 283.7ZM259.1 293.2L279.1 301L258.5 295.2ZM135.8 256.7L155.5 266.7L135.5 258.9ZM135.8 256.7L155.8 264.5L155.5 266.7Z"/><path fill="#88ceaa" d="M176.5 270.2L196.5 278L175.8 272.2Z"/><path fill="#87cda9" d="M175.8 272.2L196.5 278L195.8 280ZM135.5 258.9L155.5 266.7L155.2 268.9ZM135.5 258.9L155.2 271.2L135.5 261.2Z"/><path fill="#87cca8" d="M196.5 278L216.5 285.7L195.8 280ZM217.1 283.7L237.1 291.5L216.5 285.7ZM237.8 289.5L257.8 297.2L237.1 291.5ZM299.1 308.7L319.8 314.5L319.1 316.5ZM319.8 314.5L340.5 320.2L339.8 322.2Z"/><path fill="#86caa7" d="M195.8 280L216.5 285.7L215.8 287.7ZM278.5 303L298.5 310.7L277.8 305Z"/><path fill="#86caa6" d="M216.5 285.7L236.4 293.5L215.8 287.7ZM237.1 291.5L257.1 299.2L236.4 293.5ZM257.8 297.2L277.8 305L257.1 299.2ZM339.8 322.2L360.5 328L359.8 330Z"/><path fill="#85c8a5" d="M215.8 287.7L236.4 293.5L235.8 295.4ZM236.4 293.5L257.1 299.2L256.4 301.2ZM277.8 305L297.8 312.7L277.1 307ZM298.5 310.7L318.5 318.5L297.8 312.7ZM319.1 316.5L339.1 324.2L318.5 318.5ZM175.5 274.4L195.5 282.2L195.2 284.3Z"/><path fill="#84c7a4" d="M236.4 293.5L256.4 301.2L235.8 295.4ZM318.5 318.5L339.1 324.2L338.5 326.2ZM339.1 324.2L359.8 330L359.1 331.9Z"/><path fill="#83c6a3" d="M235.8 295.4L256.4 301.2L255.8 303.2ZM256.4 301.2L277.1 307L276.4 308.9ZM297.8 312.7L317.8 320.4L297.1 314.7ZM318.5 318.5L338.5 326.2L317.8 320.4ZM175.2 276.6L194.9 286.5L174.9 278.8ZM175.2 276.6L195.2 284.3L194.9 286.5ZM195.5 282.2L215.2 292.1L195.2 284.3ZM195.5 282.2L215.5 289.9L215.2 292.1ZM215.8 287.7L235.5 297.6L215.5 289.9ZM215.8 287.7L235.8 295.4L235.5 297.6Z"/><path fill="#83c5a2" d="M256.4 301.2L276.4 308.9L255.8 303.2ZM277.1 307L297.1 314.7L276.4 308.9ZM338.5 326.2L359.1 331.9L358.5 333.9Z"/><path fill="#82c4a1" d="M255.8 303.2L276.4 308.9L275.8 310.9ZM276.4 308.9L297.1 314.7L296.4 316.7ZM297.1 314.7L317.8 320.4L317.1 322.4ZM338.5 326.2L358.5 333.9L337.8 328.2ZM195.2 284.3L215.2 292.1L214.9 294.3ZM215.5 289.9L235.2 299.8L215.2 292.1ZM215.5 289.9L235.5 297.6L235.2 299.8Z"/><path fill="#81c3a0" d="M276.4 308.9L296.4 316.7L275.8 310.9Z"/><path fill="#80c19f" d="M275.8 310.9L296.4 316.7L295.8 318.7ZM317.1 322.4L337.1 330.2L316.4 324.4ZM337.8 328.2L357.8 335.9L337.1 330.2ZM194.9 286.5L214.6 296.5L194.6 288.7ZM194.9 286.5L214.9 294.3L214.6 296.5ZM215.2 292.1L234.9 302L214.9 294.3ZM215.2 292.1L235.2 299.8L234.9 302Z"/><path fill="#80c19e" d="M296.4 316.7L316.4 324.4L295.8 318.7Z"/><path fill="#7fbf9d" d="M295.8 318.7L316.4 324.4L315.8 326.4ZM316.4 324.4L337.1 330.2L336.4 332.2ZM337.1 330.2L357.1 337.9L336.4 332.2Z"/><path fill="#7ebe9d" d="M316.4 324.4L336.4 332.2L315.8 326.4ZM194.6 288.7L214.3 300.9L194.6 291ZM153.3 276.8L151.5 280.2L131.8 268ZM174.8 285.7L173 289L153.3 276.8Z"/><path fill="#7dbd9b" d="M315.8 326.4L336.4 332.2L335.7 334.2Z"/><path fill="#7dbc9b" d="M336.4 332.2L356.4 339.9L335.7 334.2ZM214.6 296.5L234.3 306.4L214.3 298.7ZM214.6 296.5L234.6 304.2L234.3 306.4Z"/><path fill="#7cbb99" d="M335.7 334.2L356.4 339.9L355.7 341.9Z"/><path fill="#8cd4af" d="M136.5 254.8L157.1 260.5L156.5 262.5ZM157.1 260.5L177.8 266.3L177.1 268.2ZM177.8 266.3L198.5 272L197.8 274ZM239.8 283.5L259.8 291.3L239.2 285.5Z"/><path fill="#8ad1ad" d="M156.5 262.5L177.1 268.2L176.5 270.2Z"/><path fill="#89ceaa" d="M197.1 276L217.1 283.7L196.5 278ZM279.1 301L299.8 306.7L299.1 308.7ZM299.8 306.7L320.5 312.5L319.8 314.5ZM320.5 312.5L341.2 318.2L340.5 320.2Z"/><path fill="#88cda9" d="M196.5 278L217.1 283.7L216.5 285.7ZM217.1 283.7L237.8 289.5L237.1 291.5ZM237.8 289.5L258.5 295.2L257.8 297.2ZM258.5 295.2L278.5 303L257.8 297.2ZM279.1 301L299.1 308.7L278.5 303ZM299.8 306.7L319.8 314.5L299.1 308.7ZM320.5 312.5L340.5 320.2L319.8 314.5ZM155.8 264.5L175.5 274.4L155.5 266.7ZM155.8 264.5L175.8 272.2L175.5 274.4Z"/><path fill="#86cba7" d="M216.5 285.7L237.1 291.5L236.4 293.5ZM237.1 291.5L257.8 297.2L257.1 299.2ZM155.5 266.7L175.2 276.6L155.2 268.9ZM155.5 266.7L175.5 274.4L175.2 276.6ZM175.8 272.2L195.5 282.2L175.5 274.4ZM175.8 272.2L195.8 280L195.5 282.2Z"/><path fill="#84c8a4" d="M257.1 299.2L277.1 307L256.4 301.2Z"/><path fill="#82c3a1" d="M297.1 314.7L317.1 322.4L296.4 316.7ZM317.8 320.4L337.8 328.2L317.1 322.4Z"/><path fill="#81c29f" d="M296.4 316.7L317.1 322.4L316.4 324.4ZM317.1 322.4L337.8 328.2L337.1 330.2Z"/><path fill="#7ebd9b" d="M336.4 332.2L357.1 337.9L356.4 339.9Z"/><path fill="#8bd2ad" d="M177.1 268.2L197.8 274L197.1 276ZM197.8 274L218.5 279.8L217.8 281.7ZM218.5 279.8L239.2 285.5L238.5 287.5ZM239.2 285.5L259.8 291.3L259.1 293.2ZM259.8 291.3L279.8 299L259.1 293.2ZM280.5 297L300.5 304.7L279.8 299Z"/><path fill="#89cfaa" d="M217.8 281.7L237.8 289.5L217.1 283.7ZM238.5 287.5L258.5 295.2L237.8 289.5ZM341.2 318.2L361.8 324L361.2 326Z"/><path fill="#85c9a5" d="M257.1 299.2L277.8 305L277.1 307ZM277.8 305L298.5 310.7L297.8 312.7ZM339.8 322.2L359.8 330L339.1 324.2ZM195.8 280L215.5 289.9L195.5 282.2ZM195.8 280L215.8 287.7L215.5 289.9Z"/><path fill="#84c6a3" d="M277.1 307L297.8 312.7L297.1 314.7ZM339.1 324.2L359.1 331.9L338.5 326.2Z"/><path fill="#7fc09e" d="M337.1 330.2L357.8 335.9L357.1 337.9ZM275.8 310.9L295.5 320.9L275.5 313.1ZM275.8 310.9L295.8 318.7L295.5 320.9ZM174.8 283.4L194.5 295.6L174.8 285.7Z"/><path fill="#8bd1ac" d="M218.5 279.8L238.5 287.5L217.8 281.7ZM300.5 304.7L321.2 310.5L320.5 312.5ZM321.2 310.5L341.8 316.3L341.2 318.2ZM341.8 316.3L362.5 322L361.8 324Z"/><path fill="#8ad0ab" d="M217.8 281.7L238.5 287.5L237.8 289.5ZM238.5 287.5L259.1 293.2L258.5 295.2ZM259.1 293.2L279.8 299L279.1 301ZM300.5 304.7L320.5 312.5L299.8 306.7ZM321.2 310.5L341.2 318.2L320.5 312.5ZM341.8 316.3L361.8 324L341.2 318.2Z"/><path fill="#87cba7" d="M257.8 297.2L278.5 303L277.8 305ZM278.5 303L299.1 308.7L298.5 310.7ZM299.1 308.7L319.1 316.5L298.5 310.7ZM319.8 314.5L339.8 322.2L319.1 316.5ZM340.5 320.2L360.5 328L339.8 322.2Z"/><path fill="#84c7a3" d="M297.8 312.7L318.5 318.5L317.8 320.4Z"/><path fill="#82c4a2" d="M317.8 320.4L338.5 326.2L337.8 328.2ZM235.8 295.4L255.5 305.4L235.5 297.6ZM235.8 295.4L255.8 303.2L255.5 305.4ZM133.6 264.6L131.8 268L112.2 255.8Z"/><path fill="#81c2a0" d="M337.8 328.2L358.5 333.9L357.8 335.9ZM255.8 303.2L275.8 310.9L275.5 313.1Z"/><path fill="#8dd4af" d="M198.5 272L219.2 277.8L218.5 279.8ZM260.5 289.3L280.5 297L259.8 291.3ZM281.2 295L301.2 302.8L280.5 297Z"/><path fill="#8cd4ae" d="M219.2 277.8L239.2 285.5L218.5 279.8Z"/><path fill="#8bd1ad" d="M239.2 285.5L259.1 293.2L238.5 287.5Z"/><path fill="#88cea9" d="M258.5 295.2L279.1 301L278.5 303Z"/><path fill="#86c9a6" d="M298.5 310.7L319.1 316.5L318.5 318.5ZM319.1 316.5L339.8 322.2L339.1 324.2Z"/><path fill="#8dd5af" d="M219.2 277.8L239.8 283.5L239.2 285.5ZM239.8 283.5L260.5 289.3L259.8 291.3ZM301.8 300.8L321.8 308.5L301.2 302.8ZM322.5 306.5L342.5 314.3L321.8 308.5Z"/><path fill="#8acfab" d="M279.8 299L299.8 306.7L279.1 301Z"/><path fill="#8cd2ad" d="M301.2 302.8L321.2 310.5L300.5 304.7ZM321.8 308.5L341.8 316.3L321.2 310.5Z"/><path fill="#89cea9" d="M341.2 318.2L361.2 326L340.5 320.2Z"/><path fill="#88cca8" d="M340.5 320.2L361.2 326L360.5 328Z"/><path fill="#8ed5b0" d="M281.2 295L301.8 300.8L301.2 302.8ZM343.2 312.3L363.2 320L342.5 314.3Z"/><path fill="#8cd3ad" d="M342.5 314.3L362.5 322L341.8 316.3Z"/><path fill="#8dd4ae" d="M342.5 314.3L363.2 320L362.5 322Z"/><path fill="#8ad2ad" d="M115.8 249L135.8 256.7L135.5 258.9Z"/><path fill="#84c8a5" d="M155.2 268.9L175.2 276.6L174.9 278.8ZM175.5 274.4L195.2 284.3L175.2 276.6ZM155.2 268.9L174.9 281.1L155.2 271.2Z"/><path fill="#81c3a1" d="M174.9 278.8L194.9 286.5L194.6 288.7ZM174.9 278.8L194.6 291L174.9 281.1ZM155.1 273.4L174.8 285.7L153.3 276.8Z"/><path fill="#7ebf9d" d="M194.6 288.7L214.6 296.5L214.3 298.7ZM214.9 294.3L234.6 304.2L214.6 296.5ZM214.9 294.3L234.9 302L234.6 304.2Z"/><path fill="#7bba99" d="M214.3 298.7L234.3 306.4L234 308.6ZM194.5 295.6L214.2 307.8L194.5 297.9ZM214.3 298.7L234 310.9L214.3 300.9Z"/><path fill="#7ab898" d="M234.3 306.4L254 316.3L234 308.6ZM234.3 306.4L254.3 314.1L254 316.3ZM254.6 311.9L274.3 321.9L254.3 314.1ZM254.6 311.9L274.6 319.7L274.3 321.9ZM274.9 317.5L294.6 327.4L274.6 319.7ZM274.9 317.5L294.9 325.2L294.6 327.4ZM295.2 323.1L314.9 333L294.9 325.2ZM295.2 323.1L315.2 330.8L314.9 333ZM214.3 300.9L233.9 313.2L214.2 303.2ZM194.5 297.9L192.6 301.3L173 289Z"/><path fill="#78b596" d="M234 308.6L254 316.3L253.7 318.5ZM254.3 314.1L274 324.1L254 316.3ZM254.3 314.1L274.3 321.9L274 324.1ZM214.2 303.2L233.9 313.2L233.9 315.5ZM151.5 280.2L171.2 292.4L149.7 283.6Z"/><path fill="#76b394" d="M254 316.3L273.7 326.3L253.7 318.5ZM214.2 307.8L233.8 320L214.1 310.1Z"/><path fill="#75b092" d="M253.7 318.5L273.7 326.3L273.4 328.4Z"/><path fill="#73ae90" d="M273.7 326.3L293.4 336.2L273.4 328.4ZM149.7 283.6L169.3 295.8L147.9 286.9Z"/><path fill="#72ac8e" d="M273.4 328.4L293.4 336.2L293.1 338.4ZM293.7 334L313.4 343.9L293.4 336.2ZM293.7 334L313.7 341.7L313.4 343.9ZM314 339.6L333.7 349.5L313.7 341.7ZM314 339.6L334 347.3L333.7 349.5ZM334.3 345.1L354 355L334 347.3ZM233.8 320L253.5 330L253.5 332.3ZM253.6 323.1L273.4 333L273.3 335.3Z"/><path fill="#70a98c" d="M293.4 336.2L313.1 346.1L293.1 338.4ZM293.4 336.2L313.4 343.9L313.1 346.1ZM147.9 286.9L146 290.3L126.4 278.1Z"/><path fill="#6fa78a" d="M293.1 338.4L313.1 346.1L312.8 348.3ZM313.4 343.9L333.1 353.9L313.1 346.1ZM313.4 343.9L333.4 351.7L333.1 353.9ZM333.7 349.5L353.4 359.4L333.4 351.7ZM333.7 349.5L353.7 357.2L353.4 359.4ZM253.5 330L273.2 339.9L273.2 342.2ZM273.4 333L293.1 343L293 345.3ZM147.9 286.9L167.5 299.2L146 290.3Z"/><path fill="#6da588" d="M313.1 346.1L332.8 356.1L312.8 348.3ZM313.1 346.1L333.1 353.9L332.8 356.1ZM273.3 337.6L292.9 349.8L273.2 339.9ZM293.1 340.7L312.8 352.9L293.1 343ZM232 325.7L230.2 329.1L210.5 316.9ZM253.5 334.6L251.6 337.9L232 325.7Z"/><path fill="#6ca286" d="M312.8 348.3L332.8 356.1L332.5 358.2ZM333.1 353.9L352.8 363.8L332.8 356.1ZM333.1 353.9L353.1 361.6L352.8 363.8ZM273.2 339.9L292.9 349.8L292.9 352.1ZM293.1 343L312.8 352.9L312.7 355.2ZM146 290.3L144.2 293.7L124.6 281.5Z"/><path fill="#6aa084" d="M332.8 356.1L352.5 366L332.5 358.2ZM332.8 356.1L352.8 363.8L352.5 366ZM273.2 344.5L292.8 356.7L273.1 346.8ZM293 347.5L312.6 359.8L292.9 349.8ZM312.8 350.6L332.5 362.8L312.8 352.9ZM124.6 281.5L144.2 293.7L122.7 284.8Z"/><path fill="#699d82" d="M332.5 358.2L352.5 366L352.2 368.2Z"/><path fill="#81c4a1" d="M195.2 284.3L214.9 294.3L194.9 286.5ZM155.1 273.4L174.8 283.4L174.8 285.7Z"/><path fill="#7bba9a" d="M234.6 304.2L254.3 314.1L234.3 306.4ZM234.6 304.2L254.6 311.9L254.3 314.1ZM194.5 293.3L214.2 303.2L214.2 305.5Z"/><path fill="#77b394" d="M254 316.3L274 324.1L273.7 326.3ZM274.3 321.9L294 331.8L274 324.1ZM274.3 321.9L294.3 329.6L294 331.8ZM294.6 327.4L314.3 337.4L294.3 329.6ZM294.6 327.4L314.6 335.2L314.3 337.4ZM234 310.9L253.6 323.1L233.9 313.2Z"/><path fill="#75b192" d="M274 324.1L293.7 334L273.7 326.3ZM274 324.1L294 331.8L293.7 334ZM294.3 329.6L314 339.6L294 331.8ZM294.3 329.6L314.3 337.4L314 339.6ZM214.1 310.1L233.8 320L233.8 322.3ZM233.9 313.2L253.6 323.1L253.6 325.4ZM171.2 292.4L169.3 295.8L149.7 283.6ZM192.6 301.3L190.8 304.6L171.2 292.4Z"/><path fill="#74ae90" d="M273.7 326.3L293.7 334L293.4 336.2ZM294 331.8L313.7 341.7L293.7 334ZM294 331.8L314 339.6L313.7 341.7Z"/><path fill="#7dbd9c" d="M234.9 302L254.6 311.9L234.6 304.2ZM234.9 302L254.9 309.8L254.6 311.9ZM255.2 307.6L274.9 317.5L254.9 309.8ZM255.2 307.6L275.2 315.3L274.9 317.5ZM275.5 313.1L295.2 323.1L275.2 315.3ZM174.8 285.7L194.5 295.6L194.5 297.9ZM194.6 291L214.2 303.2L194.5 293.3ZM194.6 288.7L214.3 298.7L214.3 300.9ZM131.8 268L130 271.3L110.3 259.1ZM174.8 285.7L194.5 297.9L173 289Z"/><path fill="#71aa8c" d="M313.7 341.7L333.4 351.7L313.4 343.9ZM313.7 341.7L333.7 349.5L333.4 351.7ZM334 347.3L353.7 357.2L333.7 349.5ZM334 347.3L354 355L353.7 357.2ZM233.8 322.3L253.5 332.3L253.5 334.6ZM273.4 330.7L293.1 343L273.4 333Z"/><path fill="#6ea588" d="M333.4 351.7L353.1 361.6L333.1 353.9ZM333.4 351.7L353.4 359.4L353.1 361.6Z"/><path fill="#7fbf9e" d="M235.2 299.8L254.9 309.8L234.9 302ZM235.2 299.8L255.2 307.6L254.9 309.8ZM255.5 305.4L275.2 315.3L255.2 307.6ZM255.5 305.4L275.5 313.1L275.2 315.3Z"/><path fill="#7cba9a" d="M254.9 309.8L274.6 319.7L254.6 311.9ZM254.9 309.8L274.9 317.5L274.6 319.7Z"/><path fill="#78b696" d="M274.6 319.7L294.3 329.6L274.3 321.9ZM274.6 319.7L294.6 327.4L294.3 329.6ZM173 289L192.6 301.3L171.2 292.4ZM194.5 297.9L214.1 310.1L192.6 301.3Z"/><path fill="#80c2a0" d="M235.5 297.6L255.2 307.6L235.2 299.8ZM235.5 297.6L255.5 305.4L255.2 307.6ZM255.8 303.2L275.5 313.1L255.5 305.4ZM174.9 281.1L194.5 293.3L174.8 283.4ZM174.9 278.8L194.6 288.7L194.6 291ZM112.2 255.8L131.8 268L110.3 259.1ZM133.6 264.6L153.3 276.8L131.8 268Z"/><path fill="#74af90" d="M314.3 337.4L334 347.3L314 339.6ZM314.3 337.4L334.3 345.1L334 347.3ZM334.6 342.9L354.3 352.8L334.3 345.1ZM334.6 342.9L354.6 350.7L354.3 352.8ZM233.9 315.5L253.6 325.4L253.6 327.7ZM253.7 320.8L273.4 333L253.6 323.1ZM171.2 292.4L190.8 304.6L169.3 295.8Z"/><path fill="#7cbb9a" d="M275.2 315.3L294.9 325.2L274.9 317.5ZM275.2 315.3L295.2 323.1L294.9 325.2ZM295.5 320.9L315.2 330.8L295.2 323.1ZM295.5 320.9L315.5 328.6L315.2 330.8ZM315.8 326.4L335.5 336.3L315.5 328.6ZM315.8 326.4L335.7 334.2L335.5 336.3ZM194.5 293.3L214.2 305.5L194.5 295.6ZM110.3 259.1L130 271.3L108.5 262.5Z"/><path fill="#79b696" d="M294.9 325.2L314.6 335.2L294.6 327.4ZM294.9 325.2L314.9 333L314.6 335.2ZM315.2 330.8L334.9 340.7L314.9 333ZM315.2 330.8L335.2 338.5L334.9 340.7ZM335.5 336.3L355.2 346.3L335.2 338.5ZM335.5 336.3L355.5 344.1L355.2 346.3Z"/><path fill="#76b192" d="M314.6 335.2L334.3 345.1L314.3 337.4ZM314.6 335.2L334.6 342.9L334.3 345.1ZM334.9 340.7L354.6 350.7L334.6 342.9ZM334.9 340.7L354.9 348.5L354.6 350.7Z"/><path fill="#77b494" d="M314.9 333L334.6 342.9L314.6 335.2ZM314.9 333L334.9 340.7L334.6 342.9ZM214.2 305.5L233.9 315.5L233.9 317.8ZM234 308.6L253.7 318.5L253.7 320.8Z"/><path fill="#73ac8e" d="M334.3 345.1L354.3 352.8L354 355Z"/><path fill="#7ebd9c" d="M275.5 313.1L295.5 320.9L295.2 323.1ZM295.8 318.7L315.5 328.6L295.5 320.9ZM295.8 318.7L315.8 326.4L315.5 328.6Z"/><path fill="#7bb998" d="M315.5 328.6L335.2 338.5L315.2 330.8ZM315.5 328.6L335.5 336.3L335.2 338.5ZM335.7 334.2L355.5 344.1L335.5 336.3ZM335.7 334.2L355.7 341.9L355.5 344.1Z"/><path fill="#78b494" d="M335.2 338.5L354.9 348.5L334.9 340.7ZM335.2 338.5L355.2 346.3L354.9 348.5Z"/><path fill="#85caa7" d="M135.5 261.2L155.2 271.2L155.1 273.4Z"/><path fill="#83c6a4" d="M155.2 271.2L174.8 283.4L155.1 273.4Z"/><path fill="#79b797" d="M194.5 297.9L214.2 307.8L214.1 310.1ZM214.3 300.9L234 310.9L233.9 313.2ZM151.5 280.2L149.7 283.6L130 271.3Z"/><path fill="#72ad8f" d="M233.8 320L253.5 332.3L233.8 322.3ZM253.6 323.1L273.3 335.3L253.6 325.4Z"/><path fill="#6ea789" d="M253.5 332.3L273.2 344.5L253.5 334.6ZM273.3 335.3L293 347.5L273.3 337.6Z"/><path fill="#6ca487" d="M253.5 334.6L273.2 344.5L273.1 346.8Z"/><path fill="#689e82" d="M273.1 346.8L292.8 356.7L292.8 359ZM292.9 349.8L312.6 359.8L312.6 362.1ZM230.2 329.1L228.3 332.5L208.7 320.2Z"/><path fill="#669a7f" d="M292.8 356.7L312.5 368.9L292.8 359ZM292.9 354.4L312.6 364.4L312.5 366.6ZM312.6 359.8L332.3 372L312.6 362.1ZM312.7 357.5L332.4 367.4L332.4 369.7ZM332.5 362.8L352.1 375L332.4 365.1ZM165.7 302.5L185.4 314.8L163.9 305.9Z"/><path fill="#64977d" d="M292.8 359L312.5 368.9L312.5 371.2ZM312.6 362.1L332.3 372L332.3 374.3ZM332.4 365.1L352.1 375L352.1 377.3ZM249.8 341.3L248 344.7L228.3 332.5Z"/><path fill="#62947a" d="M312.5 368.9L332.2 381.2L312.5 371.2ZM312.5 366.6L332.2 376.6L332.2 378.9ZM332.3 372L352 384.2L332.3 374.3ZM332.4 369.7L352.1 379.6L352 381.9ZM120.9 288.2L119.1 291.6L99.5 279.4ZM185.4 314.8L205 327L183.6 318.1ZM206.9 323.6L226.5 335.8L205 327Z"/><path fill="#609177" d="M312.5 371.2L332.2 381.2L332.1 383.4Z"/><path fill="#5e8d74" d="M332.2 381.2L351.8 393.4L332.1 383.4Z"/><path fill="#5c8b72" d="M332.1 383.4L351.8 393.4L351.8 395.7ZM289.2 365.8L287.3 369.1L267.7 356.9Z"/><path fill="#86cca8" d="M135.5 258.9L155.2 268.9L155.2 271.2Z"/><path fill="#82c5a3" d="M155.2 271.2L174.9 281.1L174.8 283.4Z"/><path fill="#7ebf9e" d="M174.8 283.4L194.5 293.3L194.5 295.6Z"/><path fill="#7ab998" d="M194.5 295.6L214.2 305.5L214.2 307.8ZM214.3 298.7L234 308.6L234 310.9Z"/><path fill="#78b595" d="M214.2 305.5L233.9 317.8L214.2 307.8ZM234 308.6L253.7 320.8L234 310.9Z"/><path fill="#76b293" d="M214.2 307.8L233.9 317.8L233.8 320ZM233.9 313.2L253.6 325.4L233.9 315.5ZM234 310.9L253.7 320.8L253.6 323.1ZM214.1 310.1L212.3 313.5L192.6 301.3Z"/><path fill="#73af90" d="M233.9 317.8L253.5 330L233.8 320Z"/><path fill="#6fa88b" d="M253.5 330L273.2 342.2L253.5 332.3ZM273.4 333L293 345.3L273.3 335.3ZM169.3 295.8L189 308L167.5 299.2ZM190.8 304.6L210.5 316.9L189 308Z"/><path fill="#6ea689" d="M253.5 332.3L273.2 342.2L273.2 344.5ZM273.3 335.3L293 345.3L293 347.5ZM293.1 338.4L312.8 348.3L312.8 350.6ZM104.9 269.2L124.6 281.5L103.1 272.6Z"/><path fill="#6ba285" d="M273.2 342.2L292.9 354.4L273.2 344.5ZM189 308L208.7 320.2L187.2 311.4Z"/><path fill="#699f83" d="M273.2 344.5L292.9 354.4L292.8 356.7ZM292.9 349.8L312.6 362.1L292.9 352.1ZM312.8 352.9L332.4 365.1L312.7 355.2ZM273.1 346.8L271.3 350.2L251.6 337.9Z"/><path fill="#679c80" d="M292.9 354.4L312.5 366.6L292.8 356.7ZM312.7 357.5L332.4 369.7L312.6 359.8ZM332.5 360.5L352.2 372.8L332.5 362.8Z"/><path fill="#65997e" d="M292.8 356.7L312.5 366.6L312.5 368.9ZM312.6 359.8L332.4 369.7L332.3 372ZM122.7 284.8L142.4 297.1L120.9 288.2Z"/><path fill="#63957b" d="M312.5 366.6L332.2 378.9L312.5 368.9ZM332.4 369.7L352 381.9L332.3 372ZM163.9 305.9L162.1 309.3L142.4 297.1ZM228.3 332.5L248 344.7L226.5 335.8ZM249.8 341.3L269.5 353.5L248 344.7Z"/><path fill="#619379" d="M312.5 368.9L332.2 378.9L332.2 381.2ZM332.3 372L352 381.9L352 384.2Z"/><path fill="#5f8f76" d="M332.2 378.9L351.9 391.1L332.2 381.2ZM332.2 376.6L351.9 386.5L351.9 388.8ZM183.6 318.1L181.7 321.5L162.1 309.3ZM205 327L203.2 330.4L183.6 318.1ZM269.5 353.5L289.2 365.8L267.7 356.9Z"/><path fill="#5d8c74" d="M332.2 381.2L351.9 391.1L351.8 393.4ZM140.6 300.4L160.3 312.7L138.8 303.8ZM162.1 309.3L181.7 321.5L160.3 312.7Z"/><path fill="#83c7a4" d="M155.2 268.9L174.9 278.8L174.9 281.1Z"/><path fill="#7fc09f" d="M174.9 281.1L194.6 291L194.5 293.3Z"/><path fill="#79b697" d="M214.2 303.2L233.9 315.5L214.2 305.5ZM130 271.3L128.2 274.7L108.5 262.5Z"/><path fill="#74b091" d="M233.9 315.5L253.6 327.7L233.9 317.8ZM128.2 274.7L126.4 278.1L106.7 265.9ZM214.1 310.1L233.8 322.3L212.3 313.5Z"/><path fill="#73ad8f" d="M233.9 317.8L253.6 327.7L253.5 330ZM253.7 320.8L273.4 330.7L273.4 333ZM106.7 265.9L126.4 278.1L104.9 269.2Z"/><path fill="#70aa8c" d="M253.6 327.7L273.2 339.9L253.5 330ZM169.3 295.8L167.5 299.2L147.9 286.9ZM233.8 322.3L253.5 334.6L232 325.7Z"/><path fill="#6ca387" d="M273.2 339.9L292.9 352.1L273.2 342.2ZM293.1 343L312.7 355.2L293 345.3ZM167.5 299.2L165.7 302.5L146 290.3ZM189 308L187.2 311.4L167.5 299.2ZM253.5 334.6L273.1 346.8L251.6 337.9Z"/><path fill="#6aa185" d="M273.2 342.2L292.9 352.1L292.9 354.4Z"/><path fill="#689d82" d="M292.9 352.1L312.6 364.4L292.9 354.4ZM312.7 355.2L332.4 367.4L312.7 357.5ZM332.5 358.2L352.2 370.5L332.5 360.5ZM208.7 320.2L206.9 323.6L187.2 311.4Z"/><path fill="#64977c" d="M312.6 364.4L332.2 376.6L312.5 366.6ZM332.4 367.4L352.1 379.6L332.4 369.7ZM228.3 332.5L226.5 335.8L206.9 323.6ZM292.8 359L312.5 371.2L291 362.4Z"/><path fill="#609077" d="M332.2 376.6L351.9 388.8L332.2 378.9ZM248 344.7L246.2 348.1L226.5 335.8Z"/><path fill="#5e8e75" d="M332.2 378.9L351.9 388.8L351.9 391.1ZM140.6 300.4L138.8 303.8L119.1 291.6ZM226.5 335.8L246.2 348.1L224.7 339.2Z"/><path fill="#7cbc9b" d="M194.6 291L214.3 300.9L214.2 303.2ZM153.3 276.8L173 289L151.5 280.2Z"/><path fill="#71ab8d" d="M253.6 325.4L273.3 337.6L253.6 327.7ZM212.3 313.5L210.5 316.9L190.8 304.6Z"/><path fill="#70a98b" d="M253.6 327.7L273.3 337.6L273.2 339.9ZM273.4 330.7L293.1 340.7L293.1 343ZM126.4 278.1L124.6 281.5L104.9 269.2ZM212.3 313.5L232 325.7L210.5 316.9Z"/><path fill="#679c81" d="M292.9 352.1L312.6 362.1L312.6 364.4ZM165.7 302.5L163.9 305.9L144.2 293.7ZM230.2 329.1L249.8 341.3L228.3 332.5ZM251.6 337.9L271.3 350.2L249.8 341.3Z"/><path fill="#65987e" d="M312.6 362.1L332.3 374.3L312.6 364.4ZM332.4 365.1L352.1 377.3L332.4 367.4ZM101.3 276L120.9 288.2L99.5 279.4ZM292.8 359L291 362.4L271.3 350.2Z"/><path fill="#63967b" d="M312.6 364.4L332.3 374.3L332.2 376.6Z"/><path fill="#619278" d="M332.3 374.3L351.9 386.5L332.2 376.6ZM312.5 371.2L310.6 374.6L291 362.4Z"/><path fill="#71aa8d" d="M253.6 325.4L273.3 335.3L273.3 337.6ZM273.4 328.4L293.1 338.4L293.1 340.7ZM190.8 304.6L189 308L169.3 295.8Z"/><path fill="#6da487" d="M273.3 337.6L293 347.5L292.9 349.8ZM293.1 340.7L312.8 350.6L312.8 352.9ZM210.5 316.9L208.7 320.2L189 308Z"/><path fill="#609178" d="M332.3 374.3L352 384.2L351.9 386.5ZM269.5 353.5L267.7 356.9L248 344.7Z"/><path fill="#6ba286" d="M293 345.3L312.7 357.5L293 347.5ZM312.8 348.3L332.5 360.5L312.8 350.6ZM124.6 281.5L122.7 284.8L103.1 272.6ZM210.5 316.9L230.2 329.1L208.7 320.2Z"/><path fill="#6a9f83" d="M293 347.5L312.7 357.5L312.6 359.8ZM312.8 350.6L332.5 360.5L332.5 362.8Z"/><path fill="#75b091" d="M253.7 318.5L273.4 330.7L253.7 320.8ZM149.7 283.6L147.9 286.9L128.2 274.7Z"/><path fill="#6ba185" d="M293 345.3L312.7 355.2L312.7 357.5ZM312.8 348.3L332.5 358.2L332.5 360.5ZM167.5 299.2L187.2 311.4L165.7 302.5Z"/><path fill="#74af91" d="M253.7 318.5L273.4 328.4L273.4 330.7ZM192.6 301.3L212.3 313.5L190.8 304.6Z"/><path fill="#72ab8d" d="M273.4 328.4L293.1 340.7L273.4 330.7Z"/><path fill="#689c81" d="M312.7 355.2L332.4 365.1L332.4 367.4ZM332.5 358.2L352.2 368.2L352.2 370.5Z"/><path fill="#63967c" d="M332.4 367.4L352.1 377.3L352.1 379.6ZM185.4 314.8L183.6 318.1L163.9 305.9ZM271.3 350.2L291 362.4L269.5 353.5Z"/><path fill="#6ea78a" d="M293.1 338.4L312.8 350.6L293.1 340.7ZM126.4 278.1L146 290.3L124.6 281.5Z"/><path fill="#699e82" d="M312.8 352.9L332.5 362.8L332.4 365.1Z"/><path fill="#66997e" d="M332.5 362.8L352.2 372.8L352.1 375Z"/><path fill="#679a80" d="M332.5 360.5L352.2 370.5L352.2 372.8Z"/><path fill="#89d0ab" d="M115.8 249L135.5 261.2L114 252.4Z"/><path fill="#86cba8" d="M135.5 261.2L133.6 264.6L114 252.4Z"/><path fill="#85c9a6" d="M114 252.4L133.6 264.6L112.2 255.8ZM135.5 261.2L155.1 273.4L133.6 264.6Z"/><path fill="#77b495" d="M108.5 262.5L128.2 274.7L106.7 265.9ZM130 271.3L149.7 283.6L128.2 274.7Z"/><path fill="#6a9f84" d="M103.1 272.6L122.7 284.8L101.3 276Z"/><path fill="#679b80" d="M122.7 284.8L120.9 288.2L101.3 276ZM144.2 293.7L142.4 297.1L122.7 284.8ZM208.7 320.2L228.3 332.5L206.9 323.6Z"/><path fill="#619178" d="M99.5 279.4L119.1 291.6L97.6 282.8Z"/><path fill="#5e8d75" d="M119.1 291.6L117.3 295L97.6 282.8ZM205 327L224.7 339.2L203.2 330.4Z"/><path fill="#5c8a73" d="M97.6 282.8L117.3 295L95.8 286.1Z"/><path fill="#59866f" d="M117.3 295L115.5 298.3L95.8 286.1ZM181.7 321.5L201.4 333.7L179.9 324.9ZM203.2 330.4L222.9 342.6L201.4 333.7Z"/><path fill="#58846d" d="M95.8 286.1L115.5 298.3L94 289.5ZM117.3 295L137 307.2L115.5 298.3Z"/><path fill="#82c5a2" d="M155.1 273.4L153.3 276.8L133.6 264.6Z"/><path fill="#7cbb9b" d="M131.8 268L151.5 280.2L130 271.3Z"/><path fill="#73ae8f" d="M128.2 274.7L147.9 286.9L126.4 278.1Z"/><path fill="#63947b" d="M142.4 297.1L140.6 300.4L120.9 288.2Z"/><path fill="#619279" d="M120.9 288.2L140.6 300.4L119.1 291.6ZM142.4 297.1L162.1 309.3L140.6 300.4Z"/><path fill="#5c8b73" d="M119.1 291.6L138.8 303.8L117.3 295ZM310.6 374.6L308.8 378L289.2 365.8Z"/><path fill="#5a876f" d="M138.8 303.8L137 307.2L117.3 295Z"/><path fill="#79b898" d="M173 289L171.2 292.4L151.5 280.2Z"/><path fill="#6aa085" d="M146 290.3L165.7 302.5L144.2 293.7Z"/><path fill="#66997f" d="M144.2 293.7L163.9 305.9L142.4 297.1Z"/><path fill="#5e8e76" d="M162.1 309.3L160.3 312.7L140.6 300.4ZM248 344.7L267.7 356.9L246.2 348.1Z"/><path fill="#5a8770" d="M160.3 312.7L158.4 316L138.8 303.8ZM224.7 339.2L244.4 351.4L222.9 342.6Z"/><path fill="#58856e" d="M138.8 303.8L158.4 316L137 307.2Z"/><path fill="#689d81" d="M187.2 311.4L185.4 314.8L165.7 302.5ZM273.1 346.8L292.8 359L271.3 350.2Z"/><path fill="#62937a" d="M163.9 305.9L183.6 318.1L162.1 309.3Z"/><path fill="#5a8870" d="M181.7 321.5L179.9 324.9L160.3 312.7ZM246.2 348.1L265.9 360.3L244.4 351.4ZM267.7 356.9L287.3 369.1L265.9 360.3Z"/><path fill="#59856e" d="M160.3 312.7L179.9 324.9L158.4 316Z"/><path fill="#669b80" d="M187.2 311.4L206.9 323.6L185.4 314.8Z"/><path fill="#64967c" d="M206.9 323.6L205 327L185.4 314.8Z"/><path fill="#5d8d74" d="M183.6 318.1L203.2 330.4L181.7 321.5Z"/><path fill="#5b8871" d="M203.2 330.4L201.4 333.7L181.7 321.5Z"/><path fill="#71ac8d" d="M233.8 322.3L232 325.7L212.3 313.5Z"/><path fill="#5f9077" d="M226.5 335.8L224.7 339.2L205 327ZM312.5 371.2L332.1 383.4L310.6 374.6Z"/><path fill="#5b8971" d="M224.7 339.2L222.9 342.6L203.2 330.4ZM289.2 365.8L308.8 378L287.3 369.1ZM310.6 374.6L330.3 386.8L308.8 378Z"/><path fill="#6ca386" d="M232 325.7L251.6 337.9L230.2 329.1Z"/><path fill="#699e83" d="M251.6 337.9L249.8 341.3L230.2 329.1Z"/><path fill="#5b8a72" d="M246.2 348.1L244.4 351.4L224.7 339.2ZM332.1 383.4L351.8 395.7L330.3 386.8Z"/><path fill="#65987d" d="M271.3 350.2L269.5 353.5L249.8 341.3Z"/><path fill="#5c8a72" d="M267.7 356.9L265.9 360.3L246.2 348.1Z"/><path fill="#609278" d="M291 362.4L289.2 365.8L269.5 353.5Z"/><path fill="#5f9076" d="M291 362.4L310.6 374.6L289.2 365.8Z"/><path fill="#5d8c73" d="M332.1 383.4L330.3 386.8L310.6 374.6Z"/></g>
<g shape-rendering="crispEdges"><path d="M462.7 717.8L475.5 716.6M462.7 717.8L464.2 714.5M462.7 717.8L448 719.1M548 609.5L529.7 626.7M548 609.5L547.1 632.3M548 609.5L549 586.1M548 609.5L565.9 592.7M466.1 660.7L466 684M466.1 660.7L489.2 654.6M466.1 660.7L466.3 637M466.1 660.7L440.9 658.7M552.1 513.3L533 529.9M552.1 513.3L551 538.1M552.1 513.3L553.1 488M552.1 513.3L570.6 497.1M466.8 562.7L466.6 588M466.8 562.7L490.8 556.7M466.8 562.7L467 536.8M466.8 562.7L440.5 560.8M556.4 408.9L536.6 424.7M556.4 408.9L555.3 435.8M556.4 408.9L557.6 381.3M556.4 408.9L575.7 393.5M467.6 455.9L467.4 483.5M467.6 455.9L492.7 450.2M467.6 455.9L467.8 427.7M467.6 455.9L440.1 454.1M540.6 306.6L519.9 321.3M540.6 306.6L551.7 328.9M540.6 306.6L560.6 292.3M540.6 306.6L521.4 288.7M464.8 358.6L466.4 376M464.8 358.6L479.7 349M464.8 358.6L447.7 351.1M616.7 544.8L600.2 560.3M616.7 544.8L615.2 567.1M616.7 544.8L618.3 522.1M616.7 544.8L632.8 529.7M623.2 451.2L606.1 466.1M623.2 451.2L621.6 475.3M623.2 451.2L624.9 426.7M623.2 451.2L639.9 436.7M630.2 350.1L612.5 364.1M630.2 350.1L628.4 376.1M630.2 350.1L632.1 323.5M630.2 350.1L647.4 336.4M617.4 251.9L599 265M617.4 251.9L627.7 273.1M617.4 251.9L635.2 239.2M617.4 251.9L599 235.3M376 689.9L368 682.8M376 689.9L401.9 703.6M363.9 318L378 297.9M363.9 318L355.7 341.9M363.9 318L393.9 329.5M438.5 252.6L417 266M438.5 252.6L459.3 239.6M438.5 252.6L468.1 262.9M360.6 625.2L361.5 648.1M360.6 625.2L359.7 601.7M360.6 625.2L387.4 638.8M678.8 486.4L663.8 500.5M678.8 486.4L676.8 508.2M678.8 486.4L680.8 464.3M678.8 486.4L693.4 472.7M518.5 202.6L499.3 214.6M518.5 202.6L537.2 190.9M518.5 202.6L547.4 211.7M356.9 528.5L357.8 553.4M356.9 528.5L355.9 503M356.9 528.5L384.8 541.6M687.2 395.4L671.8 408.8M687.2 395.4L685 418.8M687.2 395.4L689.4 371.6M687.2 395.4L702.2 382.3M590.2 157.8L573 168.5M590.2 157.8L607 147.3M590.2 157.8L618.3 166M352.9 423.4L353.9 450.5M352.9 423.4L351.8 395.7M352.9 423.4L381.9 435.8M696.3 297.4L680.4 310.1M696.3 297.4L694 322.6M696.3 297.4L698.7 271.7M696.3 297.4L711.7 285.1M685.9 203.2L669.5 214.9M685.9 203.2L695.5 223.3M685.9 203.2L668.3 187.5M685.9 203.2L701.9 191.8M721.7 176.1L713.1 166.2M721.7 176.1L721.1 177.3M721.7 176.1L728.5 186.4M492.3 708.6L475.5 716.6M492.3 708.6L502.3 700.6M544.5 652.5L538.6 668M544.5 652.5L526.4 670.1M544.5 652.5L547.1 632.3M544.5 652.5L562 635.5M510.2 642.5L529.7 626.7M510.2 642.5L509.6 665.6M510.2 642.5L489.2 654.6M510.2 642.5L510.8 618.9M465.4 703.1L487.3 697.4M465.4 703.1L464.2 714.5M465.4 703.1L466 684M465.4 703.1L441.5 701.4M550 562.3L549 586.1M550 562.3L531.3 579.3M550 562.3L551 538.1M550 562.3L568.2 545.8M512.8 545.1L533 529.9M512.8 545.1L512.1 570.2M512.8 545.1L490.8 556.7M512.8 545.1L513.4 519.4M466.5 612.7L490 606.7M466.5 612.7L466.3 637M466.5 612.7L466.6 588M466.5 612.7L440.7 610.8M554.2 462.2L553.1 488M554.2 462.2L534.8 478.4M554.2 462.2L555.3 435.8M554.2 462.2L573.1 446.4M515.5 439.1L536.6 424.7M515.5 439.1L514.8 466.5M515.5 439.1L492.7 450.2M515.5 439.1L516.3 411.1M467.2 510.4L491.7 504.6M467.2 510.4L467 536.8M467.2 510.4L467.4 483.5M467.2 510.4L440.3 508.6M556.7 354.3L557.6 381.3M556.7 354.3L536.5 369.6M556.7 354.3L551.7 328.9M556.7 354.3L576.3 339.4M499.3 335.7L519.9 321.3M499.3 335.7L510.3 358.1M499.3 335.7L479.7 349M499.3 335.7L480.1 318M467.5 400.4L492.3 394.7M467.5 400.4L467.8 427.7M467.5 400.4L466.4 376M467.5 400.4L440.4 398.4M612.1 586.9L605.9 602.2M612.1 586.9L595.8 602.7M612.1 586.9L615.2 567.1M612.1 586.9L628 571.5M583.3 576.3L600.2 560.3M583.3 576.3L582 598.9M583.3 576.3L565.9 592.7M583.3 576.3L584.6 553.3M619.9 498.9L618.3 522.1M619.9 498.9L603.1 514.1M619.9 498.9L621.6 475.3M619.9 498.9L636.3 484.1M588.6 481.4L606.1 466.1M588.6 481.4L587.2 505.8M588.6 481.4L570.6 497.1M588.6 481.4L590 456.5M626.7 401.6L624.9 426.7M626.7 401.6L609.3 416.1M626.7 401.6L628.4 376.1M626.7 401.6L643.6 387.5M594.4 378.6L612.5 364.1M594.4 378.6L592.9 405.1M594.4 378.6L575.7 393.5M594.4 378.6L595.9 351.6M631.9 297.4L632.1 323.5M631.9 297.4L613.9 311M631.9 297.4L627.7 273.1M631.9 297.4L649.4 284.2M580.1 278.4L599 265M580.1 278.4L590.8 300.2M580.1 278.4L560.6 292.3M580.1 278.4L561.3 261.2M396.3 280.8L378 297.9M396.3 280.8L417 266M396.3 280.8L426.2 291.7M363.6 668.2L368 682.8M363.6 668.2L361.5 648.1M363.6 668.2L389.9 682M673.3 527.6L666.8 542.6M673.3 527.6L658.5 541.9M673.3 527.6L676.8 508.2M673.3 527.6L687.7 513.6M648.5 514.9L663.8 500.5M648.5 514.9L646.7 536.9M648.5 514.9L632.8 529.7M648.5 514.9L650.4 492.5M479.6 226.9L459.3 239.6M479.6 226.9L499.3 214.6M479.6 226.9L508.9 236.6M358.8 577.8L359.7 601.7M358.8 577.8L357.8 553.4M358.8 577.8L386.1 591.2M682.9 441.8L680.8 464.3M682.9 441.8L667.8 455.5M682.9 441.8L685 418.8M682.9 441.8L697.7 428.3M656 422.6L671.8 408.8M656 422.6L654.1 446.3M656 422.6L639.9 436.7M656 422.6L658 398.4M555.3 179.6L537.2 190.9M555.3 179.6L573 168.5M555.3 179.6L583.8 188.2M354.9 477L355.9 503M354.9 477L353.9 450.5M354.9 477L383.4 489.8M691.7 347.3L689.4 371.6M691.7 347.3L676.1 360.4M691.7 347.3L694 322.6M691.7 347.3L706.9 334.6M664.1 323L680.4 310.1M664.1 323L662.1 348.7M664.1 323L647.4 336.4M664.1 323L666.3 296.9M622.3 139.4L607 147.3M622.3 139.4L634.9 136.1M622.3 139.4L649.9 147.2M352.2 368.2L351.8 395.7M352.2 368.2L355.7 341.9M352.2 368.2L381.9 380.2M699.1 246.6L698.7 271.7M699.1 246.6L683 258.8M699.1 246.6L695.5 223.3M699.1 246.6L714.8 234.8M652.6 226.9L669.5 214.9M652.6 226.9L662.6 247.5M652.6 226.9L635.2 239.2M652.6 226.9L634.6 210.8M426.5 714.5L401.9 703.6M426.5 714.5L448 719.1M426.5 714.5L419.5 708M422.6 340.8L393.9 329.5M422.6 340.8L436.6 320.9M422.6 340.8L447.7 351.1M422.6 340.8L414.9 364.5M496.4 274.5L521.4 288.7M496.4 274.5L475.3 288.6M496.4 274.5L468.1 262.9M496.4 274.5L516.9 260.9M414.4 650.7L440.9 658.7M414.4 650.7L414.7 673.9M414.4 650.7L387.4 638.8M414.4 650.7L414 627M705.1 459.5L711.5 447M705.1 459.5L702.9 481M705.1 459.5L693.4 472.7M705.1 459.5L707.3 437.7M574.9 222.2L599 235.3M574.9 222.2L556.1 234.8M574.9 222.2L547.4 211.7M574.9 222.2L593.2 210.1M412.9 553L440.5 560.8M412.9 553L413.3 578.2M412.9 553L384.8 541.6M412.9 553L412.5 527.3M714.2 369.8L720.8 357.8M714.2 369.8L711.9 392.8M714.2 369.8L702.2 382.3M714.2 369.8L716.6 346.3M645 175.5L668.3 187.5M645 175.5L628.2 186.7M645 175.5L618.3 166M645 175.5L661.4 164.6M411.2 446.7L440.1 454.1M411.2 446.7L411.7 474.2M411.2 446.7L381.9 435.8M411.2 446.7L410.8 418.6M724.1 273.3L730.8 262.1M724.1 273.3L721.6 298.1M724.1 273.3L711.7 285.1M724.1 273.3L726.7 248M714.5 182.6L701.9 191.8M714.5 182.6L698.1 167.8M714.5 182.6L721.1 177.3M714.5 182.6L723.8 201.5M695.6 155.8L713.1 166.2M695.6 155.8L687.5 152.6M732.4 204.1L728.5 186.4M732.4 204.1L733.9 213.6M507.5 685.8L502.3 700.6M507.5 685.8L487.3 697.4M507.5 685.8L526.4 670.1M507.5 685.8L509.6 665.6M511.5 594.8L510.8 618.9M511.5 594.8L490 606.7M511.5 594.8L531.3 579.3M511.5 594.8L512.1 570.2M514.1 493.2L513.4 519.4M514.1 493.2L491.7 504.6M514.1 493.2L534.8 478.4M514.1 493.2L514.8 466.5M515.2 383.7L516.3 411.1M515.2 383.7L492.3 394.7M515.2 383.7L536.5 369.6M515.2 383.7L510.3 358.1M579.2 618.9L573.1 634.2M579.2 618.9L562 635.5M579.2 618.9L595.8 602.7M579.2 618.9L582 598.9M585.9 529.8L584.6 553.3M585.9 529.8L568.2 545.8M585.9 529.8L603.1 514.1M585.9 529.8L587.2 505.8M591.4 431.1L590 456.5M591.4 431.1L573.1 446.4M591.4 431.1L609.3 416.1M591.4 431.1L592.9 405.1M595.4 325L595.9 351.6M595.4 325L576.3 339.4M595.4 325L613.9 311M595.4 325L590.8 300.2M643.4 556.5L637.1 571.7M643.4 556.5L628 571.5M643.4 556.5L658.5 541.9M643.4 556.5L646.7 536.9M652.2 469.6L650.4 492.5M652.2 469.6L636.3 484.1M652.2 469.6L667.8 455.5M652.2 469.6L654.1 446.3M660 373.8L658 398.4M660 373.8L643.6 387.5M660 373.8L676.1 360.4M660 373.8L662.1 348.7M666.4 271.3L666.3 296.9M666.4 271.3L649.4 284.2M666.4 271.3L683 258.8M666.4 271.3L662.6 247.5M454.9 303.8L436.6 320.9M454.9 303.8L426.2 291.7M454.9 303.8L480.1 318M454.9 303.8L475.3 288.6M416.1 693.9L419.5 708M416.1 693.9L389.9 682M416.1 693.9L441.5 701.4M416.1 693.9L414.7 673.9M699.2 500.1L692.6 515M699.2 500.1L687.7 513.6M699.2 500.1L705.5 487.3M699.2 500.1L702.9 481M536.8 247.6L516.9 260.9M536.8 247.6L508.9 236.6M536.8 247.6L561.3 261.2M536.8 247.6L556.1 234.8M413.6 602.9L414 627M413.6 602.9L386.1 591.2M413.6 602.9L440.7 610.8M413.6 602.9L413.3 578.2M709.6 415.4L707.3 437.7M709.6 415.4L697.7 428.3M709.6 415.4L716.1 403.2M709.6 415.4L711.9 392.8M610.9 198.2L593.2 210.1M610.9 198.2L583.8 188.2M610.9 198.2L634.6 210.8M610.9 198.2L628.2 186.7M412.1 501L412.5 527.3M412.1 501L383.4 489.8M412.1 501L440.3 508.6M412.1 501L411.7 474.2M719.1 322.4L716.6 346.3M719.1 322.4L706.9 334.6M719.1 322.4L725.7 310.8M719.1 322.4L721.6 298.1M676 156.3L661.4 164.6M676 156.3L649.9 147.2M676 156.3L698.1 167.8M676 156.3L687.5 152.6M411.6 390.9L410.8 418.6M411.6 390.9L381.9 380.2M411.6 390.9L440.4 398.4M411.6 390.9L414.9 364.5M727.3 223.6L726.7 248M727.3 223.6L714.8 234.8M727.3 223.6L733.9 213.6M727.3 223.6L723.8 201.5M475.5 716.6L483.8 710.2M502.3 700.6L483.8 710.2M502.3 700.6L520.7 685.5M487.3 697.4L483.8 710.2M487.3 697.4L488.8 677.8M464.2 714.5L483.8 710.2M464.2 714.5L442.8 713.9M538.6 668L520.7 685.5M538.6 668L556.1 650.9M526.4 670.1L520.7 685.5M526.4 670.1L528.9 649.7M529.7 626.7L528.9 649.7M529.7 626.7L530.5 603.3M509.6 665.6L528.9 649.7M509.6 665.6L488.8 677.8M547.1 632.3L528.9 649.7M547.1 632.3L564.8 615.4M466 684L488.8 677.8M466 684L441 682M489.2 654.6L488.8 677.8M489.2 654.6L489.6 630.9M510.8 618.9L489.6 630.9M510.8 618.9L530.5 603.3M490 606.7L489.6 630.9M490 606.7L490.4 582M466.3 637L489.6 630.9M466.3 637L440.8 635M549 586.1L530.5 603.3M549 586.1L567 569.5M531.3 579.3L530.5 603.3M531.3 579.3L532.1 554.8M533 529.9L532.1 554.8M533 529.9L533.9 504.4M512.1 570.2L532.1 554.8M512.1 570.2L490.4 582M551 538.1L532.1 554.8M551 538.1L569.4 521.7M466.6 588L490.4 582M466.6 588L440.6 586M490.8 556.7L490.4 582M490.8 556.7L491.3 531M513.4 519.4L491.3 531M513.4 519.4L533.9 504.4M491.7 504.6L491.3 531M491.7 504.6L492.2 477.7M467 536.8L491.3 531M467 536.8L440.4 535M553.1 488L533.9 504.4M553.1 488L571.8 472M534.8 478.4L533.9 504.4M534.8 478.4L535.7 451.8M536.6 424.7L535.7 451.8M536.6 424.7L537.5 396.9M514.8 466.5L535.7 451.8M514.8 466.5L492.2 477.7M555.3 435.8L535.7 451.8M555.3 435.8L574.4 420.2M467.4 483.5L492.2 477.7M467.4 483.5L440.2 481.6M492.7 450.2L492.2 477.7M492.7 450.2L493.1 422.1M516.3 411.1L493.1 422.1M516.3 411.1L537.5 396.9M492.3 394.7L493.1 422.1M492.3 394.7L489 369.9M467.8 427.7L493.1 422.1M467.8 427.7L440 425.9M557.6 381.3L537.5 396.9M557.6 381.3L577 366.3M536.5 369.6L537.5 396.9M536.5 369.6L531.3 343.9M519.9 321.3L531.3 343.9M519.9 321.3L500.5 303.1M510.3 358.1L531.3 343.9M510.3 358.1L489 369.9M551.7 328.9L531.3 343.9M551.7 328.9L571.6 314.3M466.4 376L489 369.9M466.4 376L441.8 373.1M479.7 349L489 369.9M479.7 349L461.4 333.4M573.1 634.2L556.1 650.9M573.1 634.2L589.7 618M562 635.5L556.1 650.9M562 635.5L564.8 615.4M605.9 602.2L589.7 618M605.9 602.2L621.7 586.7M595.8 602.7L589.7 618M595.8 602.7L598.8 582.8M600.2 560.3L598.8 582.8M600.2 560.3L601.7 537.5M582 598.9L598.8 582.8M582 598.9L564.8 615.4M615.2 567.1L598.8 582.8M615.2 567.1L631.2 551.8M565.9 592.7L564.8 615.4M565.9 592.7L567 569.5M584.6 553.3L567 569.5M584.6 553.3L601.7 537.5M568.2 545.8L567 569.5M568.2 545.8L569.4 521.7M618.3 522.1L601.7 537.5M618.3 522.1L634.5 507.1M603.1 514.1L601.7 537.5M603.1 514.1L604.6 490.4M606.1 466.1L604.6 490.4M606.1 466.1L607.7 441.4M587.2 505.8L604.6 490.4M587.2 505.8L569.4 521.7M621.6 475.3L604.6 490.4M621.6 475.3L638 460.6M570.6 497.1L569.4 521.7M570.6 497.1L571.8 472M590 456.5L571.8 472M590 456.5L607.7 441.4M573.1 446.4L571.8 472M573.1 446.4L574.4 420.2M624.9 426.7L607.7 441.4M624.9 426.7L641.7 412.4M609.3 416.1L607.7 441.4M609.3 416.1L610.9 390.4M612.5 364.1L610.9 390.4M612.5 364.1L614.2 337.3M592.9 405.1L610.9 390.4M592.9 405.1L574.4 420.2M628.4 376.1L610.9 390.4M628.4 376.1L645.5 362.2M575.7 393.5L574.4 420.2M575.7 393.5L577 366.3M595.9 351.6L577 366.3M595.9 351.6L614.2 337.3M576.3 339.4L577 366.3M576.3 339.4L571.6 314.3M632.1 323.5L614.2 337.3M632.1 323.5L649.4 310M613.9 311L614.2 337.3M613.9 311L609.5 286.5M599 265L609.5 286.5M599 265L580.4 248.1M590.8 300.2L609.5 286.5M590.8 300.2L571.6 314.3M627.7 273.1L609.5 286.5M627.7 273.1L645.4 260.1M560.6 292.3L571.6 314.3M560.6 292.3L541.6 274.8M378 297.9L408 309.1M417 266L446.8 276.6M368 682.8L394.1 696.7M361.5 648.1L388 661.9M637.1 571.7L621.7 586.7M637.1 571.7L652.1 557M628 571.5L621.7 586.7M628 571.5L631.2 551.8M666.8 542.6L652.1 557M666.8 542.6L681.2 528.6M658.5 541.9L652.1 557M658.5 541.9L661.9 522.4M663.8 500.5L661.9 522.4M663.8 500.5L665.8 478.2M646.7 536.9L661.9 522.4M646.7 536.9L631.2 551.8M676.8 508.2L661.9 522.4M676.8 508.2L691.2 494.3M632.8 529.7L631.2 551.8M632.8 529.7L634.5 507.1M459.3 239.6L488.8 249.5M499.3 214.6L528.4 224M359.7 601.7L386.8 615.2M357.8 553.4L385.5 566.6M650.4 492.5L634.5 507.1M650.4 492.5L665.8 478.2M636.3 484.1L634.5 507.1M636.3 484.1L638 460.6M680.8 464.3L665.8 478.2M680.8 464.3L695.5 450.7M667.8 455.5L665.8 478.2M667.8 455.5L669.8 432.4M671.8 408.8L669.8 432.4M671.8 408.8L673.9 384.8M654.1 446.3L669.8 432.4M654.1 446.3L638 460.6M685 418.8L669.8 432.4M685 418.8L699.9 405.5M639.9 436.7L638 460.6M639.9 436.7L641.7 412.4M537.2 190.9L565.8 199.8M573 168.5L601.3 177M355.9 503L384.1 516M353.9 450.5L382.7 463.1M658 398.4L641.7 412.4M658 398.4L673.9 384.8M643.6 387.5L641.7 412.4M643.6 387.5L645.5 362.2M689.4 371.6L673.9 384.8M689.4 371.6L704.5 358.7M676.1 360.4L673.9 384.8M676.1 360.4L678.2 335.5M680.4 310.1L678.2 335.5M680.4 310.1L682.7 284.2M662.1 348.7L678.2 335.5M662.1 348.7L645.5 362.2M694 322.6L678.2 335.5M694 322.6L709.3 310.1M647.4 336.4L645.5 362.2M647.4 336.4L649.4 310M607 147.3L634.9 155.3M634.9 136.1L662.4 143.8M351.8 395.7L381.2 407.9M355.7 341.9L385.6 353.7M666.3 296.9L649.4 310M666.3 296.9L682.7 284.2M649.4 284.2L649.4 310M649.4 284.2L645.4 260.1M698.7 271.7L682.7 284.2M698.7 271.7L714.2 259.7M683 258.8L682.7 284.2M683 258.8L679.3 235.3M669.5 214.9L679.3 235.3M669.5 214.9L651.7 199M662.6 247.5L679.3 235.3M662.6 247.5L645.4 260.1M695.5 223.3L679.3 235.3M695.5 223.3L711.4 211.7M635.2 239.2L645.4 260.1M635.2 239.2L617.1 222.8M401.9 703.6L394.1 696.7M448 719.1L442.8 713.9M393.9 329.5L408 309.1M393.9 329.5L385.6 353.7M436.6 320.9L408 309.1M436.6 320.9L461.4 333.4M426.2 291.7L408 309.1M426.2 291.7L446.8 276.6M480.1 318L461.4 333.4M480.1 318L500.5 303.1M447.7 351.1L461.4 333.4M447.7 351.1L441.8 373.1M521.4 288.7L500.5 303.1M521.4 288.7L541.6 274.8M475.3 288.6L500.5 303.1M475.3 288.6L446.8 276.6M468.1 262.9L446.8 276.6M468.1 262.9L488.8 249.5M419.5 708L394.1 696.7M419.5 708L442.8 713.9M389.9 682L394.1 696.7M389.9 682L388 661.9M441.5 701.4L442.8 713.9M441.5 701.4L441 682M440.9 658.7L441 682M440.9 658.7L440.8 635M414.7 673.9L441 682M414.7 673.9L388 661.9M387.4 638.8L388 661.9M387.4 638.8L386.8 615.2M692.6 515L681.2 528.6M692.6 515L698.7 501.8M687.7 513.6L681.2 528.6M687.7 513.6L691.2 494.3M705.5 487.3L698.7 501.8M705.5 487.3L709.3 468.3M711.5 447L709.3 468.3M711.5 447L713.8 425.3M702.9 481L709.3 468.3M702.9 481L691.2 494.3M693.4 472.7L691.2 494.3M693.4 472.7L695.5 450.7M516.9 260.9L488.8 249.5M516.9 260.9L541.6 274.8M508.9 236.6L488.8 249.5M508.9 236.6L528.4 224M561.3 261.2L541.6 274.8M561.3 261.2L580.4 248.1M599 235.3L580.4 248.1M599 235.3L617.1 222.8M556.1 234.8L580.4 248.1M556.1 234.8L528.4 224M547.4 211.7L528.4 224M547.4 211.7L565.8 199.8M414 627L386.8 615.2M414 627L440.8 635M386.1 591.2L386.8 615.2M386.1 591.2L385.5 566.6M440.7 610.8L440.8 635M440.7 610.8L440.6 586M440.5 560.8L440.6 586M440.5 560.8L440.4 535M413.3 578.2L440.6 586M413.3 578.2L385.5 566.6M384.8 541.6L385.5 566.6M384.8 541.6L384.1 516M707.3 437.7L695.5 450.7M707.3 437.7L713.8 425.3M697.7 428.3L695.5 450.7M697.7 428.3L699.9 405.5M716.1 403.2L713.8 425.3M716.1 403.2L718.4 380.7M720.8 357.8L718.4 380.7M720.8 357.8L723.2 334.5M711.9 392.8L718.4 380.7M711.9 392.8L699.9 405.5M702.2 382.3L699.9 405.5M702.2 382.3L704.5 358.7M593.2 210.1L565.8 199.8M593.2 210.1L617.1 222.8M583.8 188.2L565.8 199.8M583.8 188.2L601.3 177M634.6 210.8L617.1 222.8M634.6 210.8L651.7 199M668.3 187.5L651.7 199M668.3 187.5L684.5 176.4M628.2 186.7L651.7 199M628.2 186.7L601.3 177M618.3 166L601.3 177M618.3 166L634.9 155.3M412.5 527.3L384.1 516M412.5 527.3L440.4 535M383.4 489.8L384.1 516M383.4 489.8L382.7 463.1M440.3 508.6L440.4 535M440.3 508.6L440.2 481.6M440.1 454.1L440.2 481.6M440.1 454.1L440 425.9M411.7 474.2L440.2 481.6M411.7 474.2L382.7 463.1M381.9 435.8L382.7 463.1M381.9 435.8L381.2 407.9M716.6 346.3L704.5 358.7M716.6 346.3L723.2 334.5M706.9 334.6L704.5 358.7M706.9 334.6L709.3 310.1M725.7 310.8L723.2 334.5M725.7 310.8L728.2 286.7M730.8 262.1L728.2 286.7M730.8 262.1L733.4 237.1M721.6 298.1L728.2 286.7M721.6 298.1L709.3 310.1M711.7 285.1L709.3 310.1M711.7 285.1L714.2 259.7M661.4 164.6L634.9 155.3M661.4 164.6L684.5 176.4M649.9 147.2L634.9 155.3M649.9 147.2L662.4 143.8M701.9 191.8L684.5 176.4M701.9 191.8L711.4 211.7M698.1 167.8L684.5 176.4M698.1 167.8L707 163.7M713.1 166.2L707 163.7M687.5 152.6L707 163.7M687.5 152.6L662.4 143.8M721.1 177.3L707 163.7M721.1 177.3L729.9 193.8M410.8 418.6L381.2 407.9M410.8 418.6L440 425.9M381.9 380.2L381.2 407.9M381.9 380.2L385.6 353.7M440.4 398.4L440 425.9M440.4 398.4L441.8 373.1M414.9 364.5L441.8 373.1M414.9 364.5L385.6 353.7M728.5 186.4L729.9 193.8M726.7 248L714.2 259.7M726.7 248L733.4 237.1M714.8 234.8L714.2 259.7M714.8 234.8L711.4 211.7M733.9 213.6L733.4 237.1M733.9 213.6L729.9 193.8M723.8 201.5L729.9 193.8M723.8 201.5L711.4 211.7" fill="none" stroke="#fff" stroke-width="1"/>
<path d="M176.7 180.6L417 266M176.7 180.6L438.5 252.6M176.7 180.6L459.3 239.6M176.7 180.6L479.6 226.9M176.7 180.6L499.3 214.6M176.7 180.6L518.5 202.6M176.7 180.6L537.2 190.9M176.7 180.6L555.3 179.6M156 193.8L417 266M156 193.8L396.3 280.8M115.8 201.3L396.3 280.8M122.8 227.4L378 297.9M122.8 227.4L396.3 280.8M115.8 249L363.9 318M115.8 249L355.7 341.9M115.8 249L352.2 368.2M115.8 249L351.8 395.7M94 289.5L351.8 395.7M143 537L351.8 395.7M143 537L352.9 423.4M143 537L353.9 450.5M143 537L354.9 477M143 537L355.9 503M143 537L356.9 528.5M143 537L357.8 553.4M143 537L358.8 577.8M143 537L359.7 601.7M143 537L360.6 625.2M143 537L361.5 648.1M143 537L363.6 668.2M143 537L368 682.8M379.8 79.8L555.3 179.6M379.8 79.8L573 168.5M379.8 79.8L590.2 157.8M379.8 79.8L607 147.3M379.8 79.8L622.3 139.4M176.7 180.6L379.8 79.8M176.7 180.6L357 67.4M176.7 180.6L325.9 79M122.8 175.6L357 67.4M122.8 175.6L325.9 79M156 193.8L176.7 180.6M156 193.8L114.5 184.7M176.7 180.6L122.8 175.6M357 67.4L404.7 69.9M370.3 66.6L379.8 79.8M404.7 69.9L379.8 79.8M357 67.4L379.8 79.8M404.7 69.9L634.9 136.1M122.8 175.6L114.5 184.7M114.5 184.7L115.8 201.3M115.8 201.3L122.8 227.4M122.8 227.4L115.8 249M115.8 201.3L156 193.8M122.8 227.4L156 193.8M115.8 249L94 289.5M94 289.5L143 537M75 268L104.4 500M77 262L108 505M82 240L112 520M94 289.5L118 535M72.8 267.6L115.8 249M76 225L122.8 227.4M82.8 213L115.8 201.3M89.5 201.3L114.5 184.7M160.9 575L366.3 685M150 560L380 680M143 537L376 689.9M132 559L160.9 575M104 500L132 559" fill="none" stroke="#fff" stroke-width="1"/></g>
<path d="M318.8 75L332.9 75L332.9 79L320 85L318.8 85ZM349.9 63.2H363.8V72.4H349.9ZM363.8 62H378V69.3H363.8ZM373 75.2H387V84H373ZM393 66H417V74.3H393ZM116.1 171.9H129.7V181H116.1ZM109 179.2H121.2V191.1H109ZM109 194.8H122.6V208.7H109ZM116.1 220H129.7V234.2H116.1ZM109 242H122.6V255.7H109ZM170.2 174.7H184V185.5H170.2ZM149 187.7L162.8 187.7L162.8 195L151 199.6L149 199.6ZM82.8 195.6H96.9V207.3H82.8ZM76.1 207.3H96.9V220.7H76.1ZM70.8 219L81.8 219L81.8 232L76 240.8L70.8 240.8ZM71.8 246.8H85.2V260.9H71.8ZM68.4 260.9L78.5 260.9L78.5 270L74 274.3L68.4 274.3ZM87.9 282.6H101.2V296H87.9ZM100.4 495.9L106 495.9L108.6 510.3L100.4 510.3ZM105 508.5L112 508.5L117.7 522.2L105 522.2ZM112.3 528.3L118 528.3L121.3 542.7L112.3 542.7ZM137.5 530L146 530L151.9 543.8L137.5 543.8ZM117.7 539L128 539L135.7 554.6L117.7 554.6ZM126 551.7L132 551.7L140 561.8L126 561.8ZM148.3 564.3L153 564.3L162.7 577.7L148.3 577.7Z" fill="#5252e6" shape-rendering="crispEdges"/>
<use href="#t" x="463" y="717"/><use href="#t" x="548" y="609"/><use href="#t" x="466" y="660"/><use href="#t" x="552" y="513"/><use href="#t" x="467" y="562"/><use href="#t" x="556" y="408"/><use href="#t" x="468" y="455"/><use href="#t" x="541" y="306"/><use href="#t" x="465" y="358"/><use href="#t" x="617" y="544"/><use href="#t" x="623" y="451"/><use href="#t" x="630" y="350"/><use href="#t" x="617" y="251"/><use href="#t" x="376" y="689"/><use href="#t" x="364" y="318"/><use href="#t" x="438" y="252"/><use href="#t" x="361" y="625"/><use href="#t" x="679" y="486"/><use href="#t" x="519" y="202"/><use href="#t" x="357" y="528"/><use href="#t" x="687" y="395"/><use href="#t" x="590" y="157"/><use href="#t" x="353" y="423"/><use href="#t" x="696" y="297"/><use href="#t" x="686" y="203"/><use href="#t" x="722" y="176"/><use href="#t" x="492" y="708"/><use href="#t" x="544" y="652"/><use href="#t" x="510" y="642"/><use href="#t" x="465" y="703"/><use href="#t" x="550" y="562"/><use href="#t" x="513" y="545"/><use href="#t" x="466" y="612"/><use href="#t" x="554" y="462"/><use href="#t" x="516" y="439"/><use href="#t" x="467" y="510"/><use href="#t" x="557" y="354"/><use href="#t" x="499" y="335"/><use href="#t" x="468" y="400"/><use href="#t" x="612" y="586"/><use href="#t" x="583" y="576"/><use href="#t" x="620" y="498"/><use href="#t" x="589" y="481"/><use href="#t" x="627" y="401"/><use href="#t" x="594" y="378"/><use href="#t" x="632" y="297"/><use href="#t" x="580" y="278"/><use href="#t" x="396" y="280"/><use href="#t" x="364" y="668"/><use href="#t" x="673" y="527"/><use href="#t" x="649" y="514"/><use href="#t" x="480" y="226"/><use href="#t" x="359" y="577"/><use href="#t" x="683" y="441"/><use href="#t" x="656" y="422"/><use href="#t" x="555" y="179"/><use href="#t" x="355" y="477"/><use href="#t" x="692" y="347"/><use href="#t" x="664" y="323"/><use href="#t" x="622" y="139"/><use href="#t" x="352" y="368"/><use href="#t" x="699" y="246"/><use href="#t" x="653" y="226"/><use href="#t" x="427" y="714"/><use href="#t" x="423" y="340"/><use href="#t" x="496" y="274"/><use href="#t" x="414" y="650"/><use href="#t" x="705" y="459"/><use href="#t" x="575" y="222"/><use href="#t" x="413" y="553"/><use href="#t" x="714" y="369"/><use href="#t" x="645" y="175"/><use href="#t" x="411" y="446"/><use href="#t" x="724" y="273"/><use href="#t" x="715" y="182"/><use href="#t" x="696" y="155"/><use href="#t" x="732" y="204"/><use href="#t" x="507" y="685"/><use href="#t" x="511" y="594"/><use href="#t" x="514" y="493"/><use href="#t" x="515" y="383"/><use href="#t" x="579" y="618"/><use href="#t" x="586" y="529"/><use href="#t" x="591" y="431"/><use href="#t" x="595" y="325"/><use href="#t" x="643" y="556"/><use href="#t" x="652" y="469"/><use href="#t" x="660" y="373"/><use href="#t" x="666" y="271"/><use href="#t" x="455" y="303"/><use href="#t" x="416" y="693"/><use href="#t" x="699" y="500"/><use href="#t" x="537" y="247"/><use href="#t" x="414" y="602"/><use href="#t" x="710" y="415"/><use href="#t" x="611" y="198"/><use href="#t" x="412" y="501"/><use href="#t" x="719" y="322"/><use href="#t" x="676" y="156"/><use href="#t" x="412" y="390"/><use href="#t" x="727" y="223"/><use href="#t" x="476" y="716"/><use href="#t" x="502" y="700"/><use href="#t" x="487" y="697"/><use href="#t" x="464" y="714"/><use href="#t" x="539" y="667"/><use href="#t" x="526" y="670"/><use href="#t" x="530" y="626"/><use href="#t" x="510" y="665"/><use href="#t" x="547" y="632"/><use href="#t" x="466" y="683"/><use href="#t" x="489" y="654"/><use href="#t" x="511" y="618"/><use href="#t" x="490" y="606"/><use href="#t" x="466" y="636"/><use href="#t" x="549" y="586"/><use href="#t" x="531" y="579"/><use href="#t" x="533" y="529"/><use href="#t" x="512" y="570"/><use href="#t" x="551" y="538"/><use href="#t" x="467" y="587"/><use href="#t" x="491" y="556"/><use href="#t" x="513" y="519"/><use href="#t" x="492" y="504"/><use href="#t" x="467" y="536"/><use href="#t" x="553" y="487"/><use href="#t" x="535" y="478"/><use href="#t" x="537" y="424"/><use href="#t" x="515" y="466"/><use href="#t" x="555" y="435"/><use href="#t" x="467" y="483"/><use href="#t" x="493" y="450"/><use href="#t" x="516" y="411"/><use href="#t" x="492" y="394"/><use href="#t" x="468" y="427"/><use href="#t" x="558" y="381"/><use href="#t" x="536" y="369"/><use href="#t" x="520" y="321"/><use href="#t" x="510" y="358"/><use href="#t" x="552" y="328"/><use href="#t" x="466" y="375"/><use href="#t" x="480" y="348"/><use href="#t" x="573" y="634"/><use href="#t" x="562" y="635"/><use href="#t" x="606" y="602"/><use href="#t" x="596" y="602"/><use href="#t" x="600" y="560"/><use href="#t" x="582" y="598"/><use href="#t" x="615" y="567"/><use href="#t" x="566" y="592"/><use href="#t" x="585" y="553"/><use href="#t" x="568" y="545"/><use href="#t" x="618" y="522"/><use href="#t" x="603" y="514"/><use href="#t" x="606" y="466"/><use href="#t" x="587" y="505"/><use href="#t" x="622" y="475"/><use href="#t" x="571" y="497"/><use href="#t" x="590" y="456"/><use href="#t" x="573" y="446"/><use href="#t" x="625" y="426"/><use href="#t" x="609" y="416"/><use href="#t" x="613" y="364"/><use href="#t" x="593" y="405"/><use href="#t" x="628" y="376"/><use href="#t" x="576" y="393"/><use href="#t" x="596" y="351"/><use href="#t" x="576" y="339"/><use href="#t" x="632" y="323"/><use href="#t" x="614" y="311"/><use href="#t" x="599" y="264"/><use href="#t" x="591" y="300"/><use href="#t" x="628" y="273"/><use href="#t" x="561" y="292"/><use href="#t" x="378" y="297"/><use href="#t" x="417" y="266"/><use href="#t" x="368" y="682"/><use href="#t" x="361" y="648"/><use href="#t" x="637" y="571"/><use href="#t" x="628" y="571"/><use href="#t" x="667" y="542"/><use href="#t" x="659" y="541"/><use href="#t" x="664" y="500"/><use href="#t" x="647" y="536"/><use href="#t" x="677" y="508"/><use href="#t" x="633" y="529"/><use href="#t" x="459" y="239"/><use href="#t" x="499" y="214"/><use href="#t" x="360" y="601"/><use href="#t" x="358" y="553"/><use href="#t" x="650" y="492"/><use href="#t" x="636" y="484"/><use href="#t" x="681" y="464"/><use href="#t" x="668" y="455"/><use href="#t" x="672" y="408"/><use href="#t" x="654" y="446"/><use href="#t" x="685" y="418"/><use href="#t" x="640" y="436"/><use href="#t" x="537" y="190"/><use href="#t" x="573" y="168"/><use href="#t" x="356" y="503"/><use href="#t" x="354" y="450"/><use href="#t" x="658" y="398"/><use href="#t" x="644" y="387"/><use href="#t" x="689" y="371"/><use href="#t" x="676" y="360"/><use href="#t" x="680" y="310"/><use href="#t" x="662" y="348"/><use href="#t" x="694" y="322"/><use href="#t" x="647" y="336"/><use href="#t" x="607" y="147"/><use href="#t" x="635" y="136"/><use href="#t" x="352" y="395"/><use href="#t" x="356" y="341"/><use href="#t" x="666" y="296"/><use href="#t" x="649" y="284"/><use href="#t" x="699" y="271"/><use href="#t" x="683" y="258"/><use href="#t" x="669" y="214"/><use href="#t" x="663" y="247"/><use href="#t" x="696" y="223"/><use href="#t" x="635" y="239"/><use href="#t" x="402" y="703"/><use href="#t" x="448" y="719"/><use href="#t" x="394" y="329"/><use href="#t" x="437" y="320"/><use href="#t" x="426" y="291"/><use href="#t" x="480" y="318"/><use href="#t" x="448" y="351"/><use href="#t" x="521" y="288"/><use href="#t" x="475" y="288"/><use href="#t" x="468" y="262"/><use href="#t" x="420" y="707"/><use href="#t" x="390" y="681"/><use href="#t" x="441" y="701"/><use href="#t" x="441" y="658"/><use href="#t" x="415" y="673"/><use href="#t" x="387" y="638"/><use href="#t" x="693" y="514"/><use href="#t" x="688" y="513"/><use href="#t" x="706" y="487"/><use href="#t" x="712" y="447"/><use href="#t" x="703" y="480"/><use href="#t" x="693" y="472"/><use href="#t" x="517" y="260"/><use href="#t" x="509" y="236"/><use href="#t" x="561" y="261"/><use href="#t" x="599" y="235"/><use href="#t" x="556" y="234"/><use href="#t" x="547" y="211"/><use href="#t" x="414" y="627"/><use href="#t" x="386" y="591"/><use href="#t" x="441" y="610"/><use href="#t" x="440" y="560"/><use href="#t" x="413" y="578"/><use href="#t" x="385" y="541"/><use href="#t" x="707" y="437"/><use href="#t" x="698" y="428"/><use href="#t" x="716" y="403"/><use href="#t" x="721" y="357"/><use href="#t" x="712" y="392"/><use href="#t" x="702" y="382"/><use href="#t" x="593" y="210"/><use href="#t" x="584" y="188"/><use href="#t" x="635" y="210"/><use href="#t" x="668" y="187"/><use href="#t" x="628" y="186"/><use href="#t" x="618" y="165"/><use href="#t" x="412" y="527"/><use href="#t" x="383" y="489"/><use href="#t" x="440" y="508"/><use href="#t" x="440" y="454"/><use href="#t" x="412" y="474"/><use href="#t" x="382" y="435"/><use href="#t" x="717" y="346"/><use href="#t" x="707" y="334"/><use href="#t" x="726" y="310"/><use href="#t" x="731" y="262"/><use href="#t" x="722" y="298"/><use href="#t" x="712" y="285"/><use href="#t" x="661" y="164"/><use href="#t" x="650" y="147"/><use href="#t" x="702" y="191"/><use href="#t" x="698" y="167"/><use href="#t" x="713" y="166"/><use href="#t" x="687" y="152"/><use href="#t" x="721" y="177"/><use href="#t" x="411" y="418"/><use href="#t" x="382" y="380"/><use href="#t" x="440" y="398"/><use href="#t" x="415" y="364"/><use href="#t" x="728" y="186"/><use href="#t" x="727" y="248"/><use href="#t" x="715" y="234"/><use href="#t" x="734" y="213"/><use href="#t" x="724" y="201"/><use href="#t" x="484" y="710"/><use href="#t" x="521" y="685"/><use href="#t" x="529" y="649"/><use href="#t" x="489" y="677"/><use href="#t" x="490" y="630"/><use href="#t" x="530" y="603"/><use href="#t" x="532" y="554"/><use href="#t" x="490" y="581"/><use href="#t" x="491" y="530"/><use href="#t" x="534" y="504"/><use href="#t" x="536" y="451"/><use href="#t" x="492" y="477"/><use href="#t" x="493" y="422"/><use href="#t" x="538" y="396"/><use href="#t" x="531" y="343"/><use href="#t" x="489" y="369"/><use href="#t" x="556" y="650"/><use href="#t" x="590" y="617"/><use href="#t" x="599" y="582"/><use href="#t" x="565" y="615"/><use href="#t" x="567" y="569"/><use href="#t" x="602" y="537"/><use href="#t" x="605" y="490"/><use href="#t" x="569" y="521"/><use href="#t" x="572" y="472"/><use href="#t" x="608" y="441"/><use href="#t" x="611" y="390"/><use href="#t" x="574" y="420"/><use href="#t" x="577" y="366"/><use href="#t" x="614" y="337"/><use href="#t" x="610" y="286"/><use href="#t" x="572" y="314"/><use href="#t" x="622" y="586"/><use href="#t" x="652" y="556"/><use href="#t" x="662" y="522"/><use href="#t" x="631" y="551"/><use href="#t" x="635" y="507"/><use href="#t" x="666" y="478"/><use href="#t" x="670" y="432"/><use href="#t" x="638" y="460"/><use href="#t" x="642" y="412"/><use href="#t" x="674" y="384"/><use href="#t" x="678" y="335"/><use href="#t" x="645" y="362"/><use href="#t" x="649" y="310"/><use href="#t" x="683" y="284"/><use href="#t" x="679" y="235"/><use href="#t" x="645" y="260"/><use href="#t" x="408" y="309"/><use href="#t" x="461" y="333"/><use href="#t" x="500" y="303"/><use href="#t" x="447" y="276"/><use href="#t" x="394" y="696"/><use href="#t" x="443" y="713"/><use href="#t" x="441" y="681"/><use href="#t" x="388" y="661"/><use href="#t" x="681" y="528"/><use href="#t" x="699" y="501"/><use href="#t" x="709" y="468"/><use href="#t" x="691" y="494"/><use href="#t" x="489" y="249"/><use href="#t" x="542" y="274"/><use href="#t" x="580" y="248"/><use href="#t" x="528" y="223"/><use href="#t" x="387" y="615"/><use href="#t" x="441" y="634"/><use href="#t" x="441" y="586"/><use href="#t" x="385" y="566"/><use href="#t" x="696" y="450"/><use href="#t" x="714" y="425"/><use href="#t" x="718" y="380"/><use href="#t" x="700" y="405"/><use href="#t" x="566" y="199"/><use href="#t" x="617" y="222"/><use href="#t" x="652" y="198"/><use href="#t" x="601" y="176"/><use href="#t" x="384" y="515"/><use href="#t" x="440" y="534"/><use href="#t" x="440" y="481"/><use href="#t" x="383" y="463"/><use href="#t" x="705" y="358"/><use href="#t" x="723" y="334"/><use href="#t" x="728" y="286"/><use href="#t" x="709" y="310"/><use href="#t" x="635" y="155"/><use href="#t" x="684" y="176"/><use href="#t" x="707" y="163"/><use href="#t" x="662" y="143"/><use href="#t" x="381" y="407"/><use href="#t" x="440" y="425"/><use href="#t" x="442" y="373"/><use href="#t" x="386" y="353"/><use href="#t" x="714" y="259"/><use href="#t" x="733" y="237"/><use href="#t" x="730" y="193"/><use href="#t" x="711" y="211"/>
</svg></div>
<div id="pn">
<svg style="left:5px;top:1px" width="205" height="6"><defs><pattern id="dt" width="2" height="4" patternUnits="userSpaceOnUse"><rect x="0" y="1" width="1" height="1" fill="#c8c8c8"/><rect x="1" y="3" width="1" height="1" fill="#c8c8c8"/></pattern></defs><rect x="0" y="0" width="205" height="5" fill="url(#dt)"/></svg>
<div style="left:4px;top:8px;width:1px;height:765px;background:#393939"></div>
<div class="tab" style="left:5px"></div><div class="tab on" style="left:37px"></div><div class="tab" style="left:69px"></div><div class="tab" style="left:100px"></div><div class="tab" style="left:132px"></div><div class="tab" style="left:164px"></div>
<svg style="left:4px;top:9px" width="192" height="27" viewBox="0 0 192 27">
<path d="M7.5 14h17M16 5.5v17" stroke="#a6a6a6" stroke-width="2" fill="none"/>
<g fill="none" stroke="#3cc" stroke-width="1.2"><path d="M43 6.5h9M43 21.500h9M41.500 9v10M55.500 9v10"/><rect x="40.500" y="5.500" width="2" height="2"/><rect x="53.500" y="5.500" width="2" height="2"/><rect x="40.500" y="19.500" width="2" height="2"/><rect x="53.500" y="19.500" width="2" height="2"/></g>
<path d="M45 18.500c0-5 3-8.500 8.500-9" stroke="#d8d8d8" stroke-width="2.200" fill="none" stroke-linecap="round"/>
<rect x="74" y="6" width="12" height="5" fill="#9a9a9a"/><path d="M80.500 11v3.500M75.500 19v-4.500h10v4.500" stroke="#3aa" stroke-width="1" fill="none"/><rect x="73" y="19" width="3.500" height="3.500" fill="#3aa"/><rect x="83.500" y="19" width="3.500" height="3.500" fill="#3aa"/>
<circle cx="114.300" cy="13.300" r="7" fill="#9a9a9a"/><path d="M106.500 7.500a8 8 0 0 0 0 12M109 6.500a9 9 0 0 0 0 14" stroke="#2a9" stroke-width="1" fill="none"/>
<rect x="136" y="7" width="16" height="9" fill="#9a9a9a"/><rect x="140" y="19.500" width="8" height="1.500" fill="#9a9a9a"/>
<path d="M169.500 7.500l2.500-1.500 9 10.500a2 2 0 1 1-2 2l-9-9.500z" fill="#a0a0a0"/><circle cx="169" cy="8" r="2.600" fill="none" stroke="#a0a0a0" stroke-width="1.600"/>
</svg>
<div class="fld" style="left:10px;top:44px;width:179px;height:18px">Box001</div>
<div style="left:194px;top:43px;width:20px;height:20px;background:#9ff0c6;border:1px solid #000"></div>
<div class="fld" style="left:10px;top:73px;width:200px;height:19px;line-height:19px">Modifier List</div>
<div class="ar" style="left:199px;top:80px;border-top:4px solid #eee"></div>
<div class="btn" style="left:12px;top:104px">Edit Poly</div><div class="btn" style="left:113px;top:104px">Edit Mesh</div>
<div class="btn d" style="left:12px;top:127px">Edit Spline</div><div class="btn d" style="left:113px;top:127px">Bevel</div>
<div class="btn d" style="left:12px;top:149px">Bevel Profile</div><div class="btn" style="left:113px;top:149px">Edit Normals</div>
<div class="btn d" style="left:12px;top:172px">Extrude</div><div class="btn" style="left:113px;top:172px">FFD(box)</div>
<div class="btn d" style="left:12px;top:195px">Lathe</div><div class="btn" style="left:113px;top:195px">Lattice</div>
<div class="btn" style="left:12px;top:218px">MeshSmooth</div><div class="btn" style="left:113px;top:218px">TurboSmooth</div>
<div class="btn" style="left:12px;top:240px">Symmetry</div><div class="btn" style="left:113px;top:240px">Slice</div>
<div class="btn" style="left:12px;top:265px">Shell</div><div class="btn" style="left:113px;top:265px">UVW Map</div>
<div class="btn" style="left:12px;top:289px">Unwrap UVW</div><div class="btn d" style="left:113px;top:289px">Sweep</div>
<div style="left:9px;top:314px;width:205px;height:77px;border:1px solid #fff;background:#444"></div>
<div style="left:61px;top:333px;width:150px;height:16px;background:#5f8ac6"></div>
<div style="left:11px;top:349px;width:200px;height:1px;background:#2e2e2e"></div>
<div style="left:11px;top:366px;width:200px;height:1px;background:#686868"></div>
<svg style="left:10px;top:315px" width="200" height="52" viewBox="0 0 200 52">
<path d="M6 9.500q6.500-7 13.500 0q-7 7-13.500 0z" fill="none" stroke="#ddd" stroke-width="1.500"/><circle cx="12.700" cy="9.300" r="2.300" fill="#ddd"/>
<path d="M27 6h9l-4.500 5.500z" fill="#d0d0d0"/>
<path d="M31.500 17v9.500h17" stroke="#111" stroke-width="1" stroke-dasharray="1 1" fill="none"/>
<path d="M8 39v8l6-4z" fill="#d0d0d0"/>
<g fill="#0a0a0a"><path d="M194.500 1l1.500 1.500-1.500 1.500-1.500-1.500zM183.500 8l1.500 1.500-1.500 1.500-1.500-1.500zM189.500 12l1.500 1.500-1.500 1.500-1.500-1.500zM194.500 18l1.500 1.500-1.500 1.500-1.500-1.500zM183.500 25l1.500 1.500-1.500 1.500-1.500-1.500zM189.500 29l1.500 1.500-1.500 1.500-1.500-1.500z"/></g>
</svg>
<div class="lb" style="left:53px;top:318.500px;font-size:10.400px;color:#f4f4f4">MultiRes</div>
<div class="lb" style="left:63px;top:335.700px;font-size:10.400px;color:#fff">Vertex</div>
<div class="lb" style="left:33px;top:352.600px;font-size:10.400px;color:#f4f4f4">Editable Poly</div>
<div style="left:46px;top:397px;width:22px;height:22px;background:#5f8ac6;border-radius:3px"></div>
<svg style="left:10px;top:396px" width="160" height="24" viewBox="0 0 160 24">
<path d="M5 19.500l6-6" stroke="#ccc" stroke-width="1.300"/><path d="M10 9l3-4 5.500 5.500-4 3z" fill="#ddd"/>
<path d="M29.500 4v16M65.500 4v16M125.500 4v16" stroke="#111" stroke-width="1.200"/>
<path d="M44.500 6.500h6M45.500 7v10.500q2 1.500 4 0V7" fill="#3cc" stroke="#eee" stroke-width="1.400"/>
<g fill="none" stroke="#2c2c2c" stroke-width="1.500"><circle cx="80" cy="8" r="3.500"/><circle cx="83" cy="16.500" r="3.500"/><circle cx="88" cy="14" r="3.500"/><path d="M84 7h5v4"/></g>
<g fill="none" stroke="#ddd" stroke-width="1.200"><path d="M103 8.500h10M105.500 8.500v-2h5v2M104.500 9v11h7V9M106.800 11v7M109.200 11v7"/></g>
<g fill="none" stroke="#ddd" stroke-width="1.300"><rect x="137" y="6" width="11" height="13"/><path d="M137 10h11M142.500 10v9M137 14.500h11"/></g><path d="M143 11l7-6.500 1.500 1.500-6.500 7z" fill="#e8a020"/>
</svg>
<div style="left:14px;top:437px;width:87px;height:1px;background:#5c5c5c"></div><div style="left:121px;top:437px;width:86px;height:1px;background:#5c5c5c"></div>
<svg style="left:104px;top:435px" width="14" height="4"><rect width="14" height="4" fill="url(#dt)"/></svg>
<div style="left:8px;top:444px;width:199px;height:328px;background:#505050;border-radius:4px 4px 0 0;border:1px solid #3e3e3e;border-bottom:0"></div>
<div style="left:208px;top:445px;width:4px;height:326px;background:#505050;border-radius:4px 0 0 0"></div>
<div style="left:4px;top:771px;width:210px;height:3px;background:#3a3a3a"></div>
<div class="ar" style="left:15px;top:452px;border-top:4px solid #b8b8b8"></div>
<div class="lb" style="left:28px;top:448px;font-weight:bold;font-size:11.500px;color:#fff;letter-spacing:.15px">MultiRes Parameters</div>
<svg style="left:191px;top:451px" width="6" height="6"><g fill="#888"><rect x="0" y="0" width="1" height="1"/><rect x="2" y="0" width="1" height="1"/><rect x="4" y="0" width="1" height="1"/><rect x="0" y="2" width="1" height="1"/><rect x="2" y="2" width="1" height="1"/><rect x="4" y="2" width="1" height="1"/><rect x="0" y="4" width="1" height="1"/><rect x="2" y="4" width="1" height="1"/><rect x="4" y="4" width="1" height="1"/></g></svg>
<div class="grp" style="left:36px;top:482px;width:141px;height:110px"></div>
<div class="lb" style="left:39px;top:475px;background:#505050;padding:0 3px 0 2px">Resolution</div>
<div class="lb r" style="top:494px">Vert Percent:</div><div class="sp" style="left:107px;top:494px;width:61px">40.0</div>
<div class="lb r" style="top:514px">Vert Count:</div><div class="sp" style="left:107px;top:514px;width:61px">615</div>
<div class="lb r" style="top:533px">Max Vertex:</div><div class="lb" style="left:108px;top:535px">1538</div>
<div class="lb r" style="top:553px">Face Count:</div><div class="lb" style="left:108px;top:555px">1226</div>
<div class="lb r" style="top:572px">Max Face:</div><div class="lb" style="left:108px;top:574px">3072</div>
<div class="grp" style="left:36px;top:602px;width:141px;height:180px"></div>
<div class="lb" style="left:39px;top:596px;background:#505050;padding:0 3px 0 2px">Generation Parameters</div>
<div class="cb" style="left:41px;top:616px"></div><div class="lb" style="left:53px;top:617px">Vertex Merging</div>
<div class="lb d" style="left:59px;top:634px">Threshold:</div><div class="sp" style="left:113px;top:634px;width:58px;background:#5a5a5a;color:#8c8c8c">0.0cm</div>
<div class="cb d" style="left:59px;top:655px"></div><div class="lb d" style="left:71px;top:656px">Within Mesh</div>
<div class="cb" style="left:41px;top:674px"></div><div class="lb" style="left:53px;top:675px">Boundary Metric</div>
<div class="cb" style="left:41px;top:694px"></div><div class="lb" style="left:53px;top:695px">Maintain Base Vertices</div>
<div class="cb" style="left:41px;top:713px"></div><div class="lb" style="left:53px;top:714px">Multiple Vertex Normals</div>
<svg style="left:41px;top:694px" width="12" height="32"><path d="M2 5.500l2.500 3 4.500-6.500M2 24.500l2.500 3 4.500-6.500" stroke="#f4f4f4" stroke-width="1.800" fill="none"/></svg>
<div class="lb" style="left:41px;top:732px">Crease Angle:</div><div class="sp" style="left:113px;top:732px;width:58px">75.0</div>
<div class="btn" style="left:44px;top:754px;width:58px;height:20px;line-height:21px;border-radius:3px 3px 0 0">Generate</div>
<div class="btn d" style="left:110px;top:754px;width:58px;height:20px;line-height:21px;border-radius:3px 3px 0 0">Reset</div>
<svg style="left:160px;top:496px" width="8" height="250"><g fill="#e8e8e8"><path d="M1 4.500h5l-2.500-3.500zM1 6.500h5l-2.500 3.500zM1 24.500h5l-2.500-3.500zM1 26.500h5l-2.500 3.500z"/><path d="M2 242.500h5l-2.500-3.500zM2 244.500h5l-2.500 3.500z"/></g><g fill="#8c8c8c"><path d="M2 144.500h5l-2.500-3.500zM2 146.500h5l-2.500 3.500z"/></g></svg>
<svg style="left:24px;top:482px" width="160" height="40" viewBox="0 0 160 40"><path d="M68.7 7.5C60.9 8.0 32.3 9.2 21.9 10.6C11.5 12.0 9.2 14.4 6.2 16.1C3.2 17.8 3.5 18.5 3.9 20.8C4.3 23.1 5.6 27.9 8.6 30.1C11.6 32.3 14.5 33.1 21.9 34.0C29.3 34.9 42.7 35.5 53.1 35.6C63.5 35.7 73.9 35.3 84.3 34.8C94.7 34.3 106.5 33.4 115.6 32.5C124.7 31.6 132.8 31.6 139.0 29.4C145.2 27.2 151.2 22.2 153.0 19.2C154.8 16.2 153.5 13.5 149.9 11.4C146.3 9.3 138.2 7.7 131.2 6.7C124.2 5.7 115.6 5.4 107.8 5.2C100.0 5.0 91.8 5.1 84.3 5.6C76.8 6.1 66.1 7.9 62.5 8.3" fill="none" stroke="#e60a0a" stroke-width="2.2" stroke-linecap="round"/></svg>
</div>

</body></html>
